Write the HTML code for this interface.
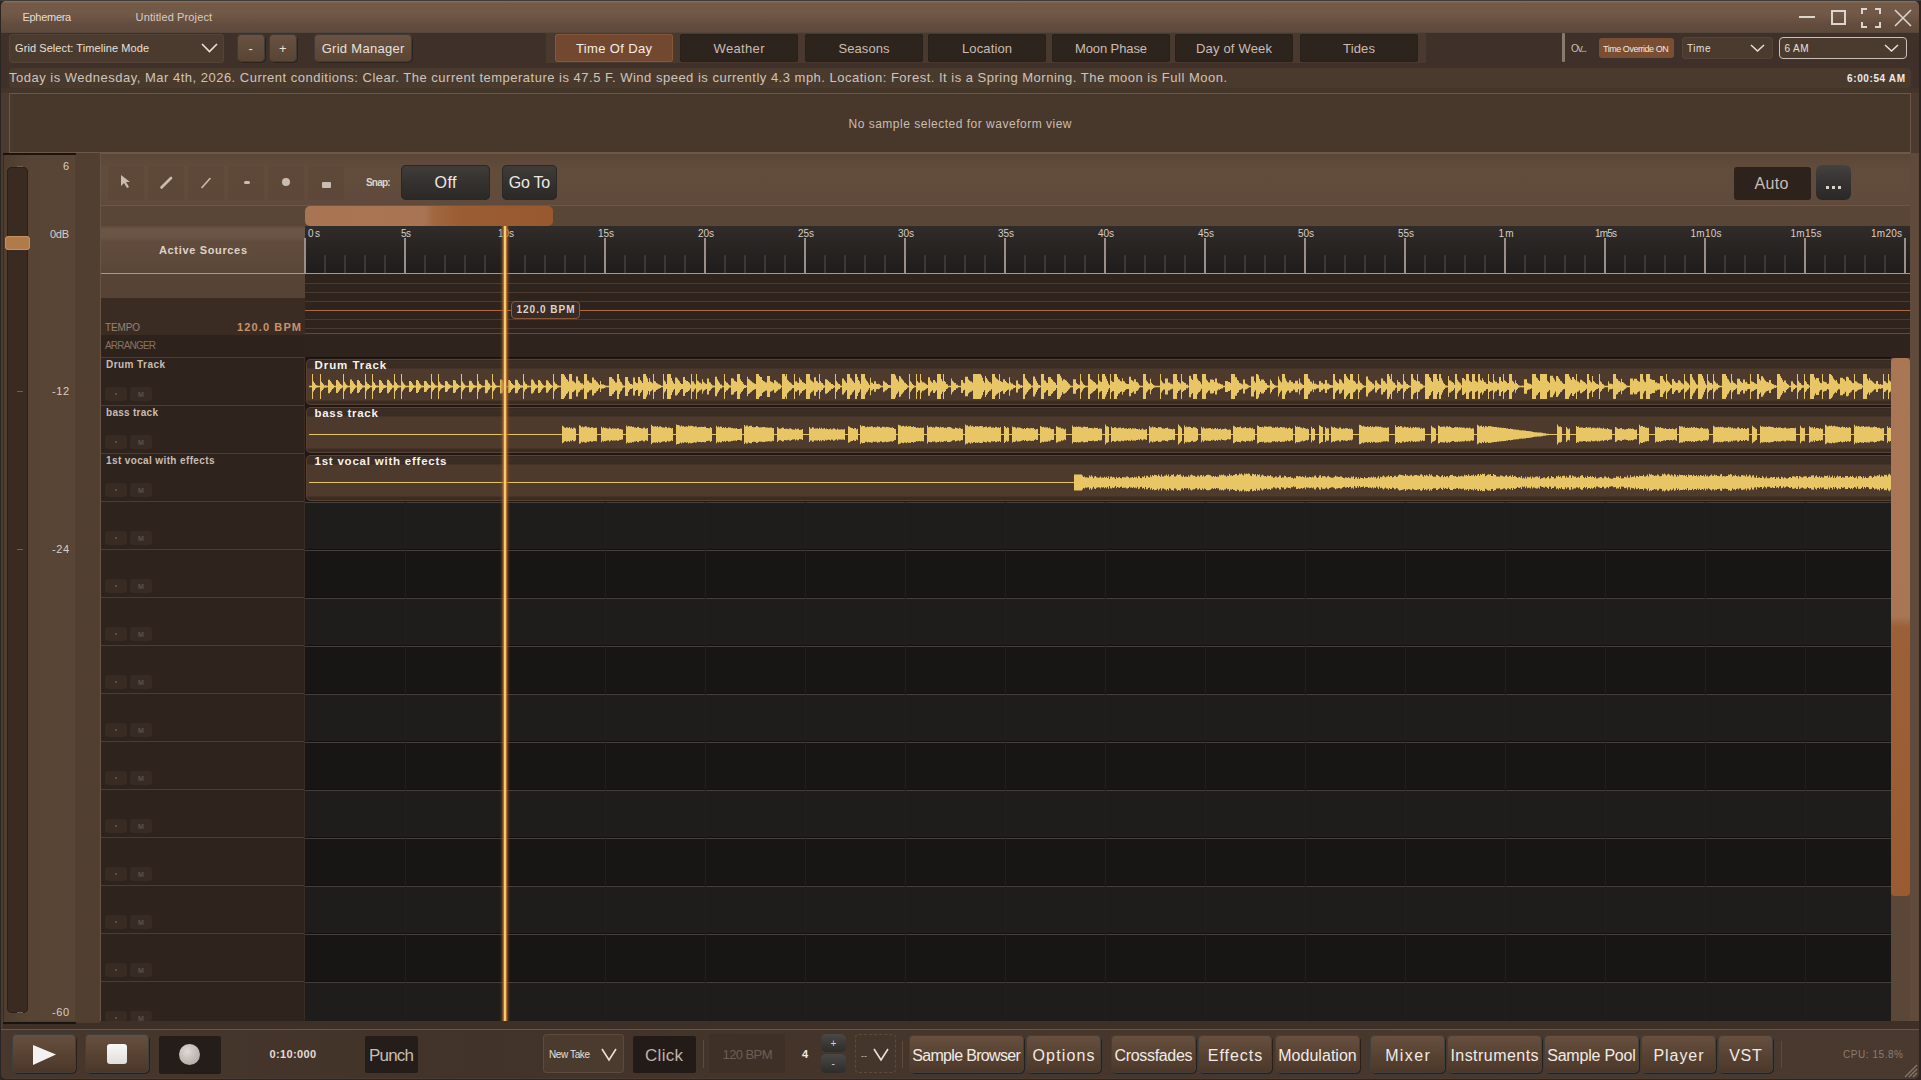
<!DOCTYPE html><html><head><meta charset="utf-8"><style>
*{margin:0;padding:0;box-sizing:border-box}
html,body{width:1921px;height:1080px;overflow:hidden;background:#2b2624;font-family:"Liberation Sans", sans-serif}
.a{position:absolute}
.t{position:absolute;white-space:nowrap;line-height:1}
</style></head><body>

<div class="a" style="left:0px;top:0px;width:1921px;height:1px;background:#3d3d3b"></div>
<div class="a" style="left:1px;top:1px;width:1918px;height:1078px;background:#4a3a2f;border-radius:5px"></div>
<div class="a" style="left:1px;top:1px;width:1918px;height:32px;border-radius:5px 5px 0 0;background:linear-gradient(#8a6b52 0,#8a6b52 1px,#735946 2px,#725847 40%,#6b5343 55%,#624c3d 75%,#5e4a3b 96%,#50443c 100%)"></div>
<div class="t" style="left:22.50px;top:11.87px;font-size:11px;letter-spacing:-0.293px;color:#e6dcd4;">Ephemera</div>
<div class="t" style="left:135.60px;top:11.87px;font-size:11px;letter-spacing:0.127px;color:#d8ccc2;">Untitled Project</div>
<div class="a" style="left:1799px;top:16px;width:16px;height:2px;background:#ddd4cc"></div>
<div class="a" style="left:1831px;top:10px;width:15px;height:15px;border:2px solid #ddd4cc"></div>
<svg class="a" style="left:1861px;top:8px" width="20" height="20" viewBox="0 0 20 20" fill="none" stroke="#ddd4cc" stroke-width="2"><path d="M1 6V1h5M14 1h5v5M19 14v5h-5M6 19H1v-5"/></svg>
<svg class="a" style="left:1893px;top:8px" width="20" height="20" viewBox="0 0 20 20" fill="none" stroke="#ddd4cc" stroke-width="1.6"><path d="M2 2L18 18M18 2L2 18"/></svg>
<div class="a" style="left:1px;top:33px;width:1918px;height:60px;background:#3f3129"></div>
<div class="a" style="left:1px;top:88px;width:1918px;height:5px;background:#443529"></div>
<div class="a" style="left:9px;top:34px;width:215px;height:29px;background:#4b3a2e;border-radius:4px;box-shadow:inset 0 0 0 1px #55433a"></div>
<div class="t" style="left:15.00px;top:42.87px;font-size:11px;letter-spacing:0.078px;color:#e8e0da;">Grid Select: Timeline Mode</div>
<svg class="a" style="left:201px;top:43px" width="17" height="10" viewBox="0 0 17 10" fill="none" stroke="#e8e0da" stroke-width="1.6"><path d="M1 1L8.5 8.5L16 1"/></svg>
<div class="a" style="left:237px;top:34px;width:28px;height:28px;background:linear-gradient(#6b5343,#614b3b 45%,#5a4535);border-radius:5px;box-shadow:inset 0 0 0 1px #3f3b3a, 1px 1px 0 #2c221c"></div>
<div class="t" style="left:248.50px;top:42.44px;font-size:13px;letter-spacing:0.671px;color:#e8e0da;">-</div>
<div class="a" style="left:269px;top:34px;width:28px;height:28px;background:linear-gradient(#6b5343,#614b3b 45%,#5a4535);border-radius:5px;box-shadow:inset 0 0 0 1px #3f3b3a, 1px 1px 0 #2c221c"></div>
<div class="t" style="left:279.00px;top:42.44px;font-size:13px;letter-spacing:0.408px;color:#e8e0da;">+</div>
<div class="a" style="left:314px;top:34px;width:98px;height:28px;background:linear-gradient(#6b5343,#614b3b 45%,#5a4535);border-radius:5px;box-shadow:inset 0 0 0 1px #3f3b3a, 1px 1px 0 #2c221c"></div>
<div class="t" style="left:321.65px;top:42.44px;font-size:13px;letter-spacing:0.293px;color:#e8e0da;">Grid Manager</div>
<div class="a" style="left:546px;top:33px;width:880px;height:30px;background:#4a392e"></div>
<div class="a" style="left:555px;top:34px;width:118px;height:28px;background:#724830;border-radius:3px;box-shadow:inset 0 0 0 1px #86573a"></div>
<div class="t" style="left:576.00px;top:42.44px;font-size:13px;letter-spacing:0.353px;color:#f4eee8;">Time Of Day</div>
<div class="a" style="left:680px;top:34px;width:118px;height:28px;background:#2e241e;border-radius:3px;box-shadow:inset 0 0 0 1px #282019"></div>
<div class="t" style="left:713.50px;top:42.44px;font-size:13px;letter-spacing:0.351px;color:#c9bdb3;">Weather</div>
<div class="a" style="left:805px;top:34px;width:118px;height:28px;background:#2e241e;border-radius:3px;box-shadow:inset 0 0 0 1px #282019"></div>
<div class="t" style="left:838.50px;top:42.44px;font-size:13px;letter-spacing:0.068px;color:#c9bdb3;">Seasons</div>
<div class="a" style="left:928px;top:34px;width:118px;height:28px;background:#2e241e;border-radius:3px;box-shadow:inset 0 0 0 1px #282019"></div>
<div class="t" style="left:962.00px;top:42.44px;font-size:13px;letter-spacing:0.121px;color:#c9bdb3;">Location</div>
<div class="a" style="left:1052px;top:34px;width:118px;height:28px;background:#2e241e;border-radius:3px;box-shadow:inset 0 0 0 1px #282019"></div>
<div class="t" style="left:1075.00px;top:42.44px;font-size:13px;letter-spacing:-0.110px;color:#c9bdb3;">Moon Phase</div>
<div class="a" style="left:1175px;top:34px;width:118px;height:28px;background:#2e241e;border-radius:3px;box-shadow:inset 0 0 0 1px #282019"></div>
<div class="t" style="left:1196.00px;top:42.44px;font-size:13px;letter-spacing:0.182px;color:#c9bdb3;">Day of Week</div>
<div class="a" style="left:1300px;top:34px;width:118px;height:28px;background:#2e241e;border-radius:3px;box-shadow:inset 0 0 0 1px #282019"></div>
<div class="t" style="left:1343.00px;top:42.44px;font-size:13px;letter-spacing:0.173px;color:#c9bdb3;">Tides</div>
<div class="a" style="left:1562px;top:33px;width:3px;height:29px;background:#8a7a6e;border-radius:1px"></div>
<div class="a" style="left:1566px;top:33px;width:345px;height:30px;background:#3f3129"></div>
<div class="t" style="left:1571.00px;top:44.34px;font-size:10px;letter-spacing:-1.093px;color:#c9bdb3;">Ov...</div>
<div class="a" style="left:1599px;top:38px;width:75px;height:20px;background:#7a4e33;border-radius:3px"></div>
<div class="t" style="left:1603.00px;top:44.81px;font-size:9px;letter-spacing:-0.465px;color:#f0e8e0;">Time Override ON</div>
<div class="a" style="left:1682px;top:37px;width:91px;height:22px;background:#4b3a2e;border-radius:4px;box-shadow:inset 0 0 0 1px #55433a"></div>
<div class="t" style="left:1687.00px;top:44.34px;font-size:10px;letter-spacing:0.550px;color:#e8e0da;">Time</div>
<svg class="a" style="left:1750px;top:44px" width="15" height="8" viewBox="0 0 15 8" fill="none" stroke="#e8e0da" stroke-width="1.5"><path d="M1 1L7.5 7L14 1"/></svg>
<div class="a" style="left:1779px;top:37px;width:128px;height:22px;background:#4b3a2e;border-radius:4px;border:1px solid #c9c0b8"></div>
<div class="t" style="left:1784.50px;top:44.34px;font-size:10px;letter-spacing:0.404px;color:#e8e0da;">6 AM</div>
<svg class="a" style="left:1884px;top:44px" width="15" height="8" viewBox="0 0 15 8" fill="none" stroke="#e8e0da" stroke-width="1.5"><path d="M1 1L7.5 7L14 1"/></svg>
<div class="a" style="left:9px;top:68px;width:1902px;height:20px;background:#4a3a2e;border-radius:4px"></div>
<div class="t" style="left:9.00px;top:71.44px;font-size:13px;letter-spacing:0.498px;color:#cfc4ba;">Today is Wednesday, Mar 4th, 2026. Current conditions: Clear. The current temperature is 47.5 F. Wind speed is currently 4.3 mph. Location: Forest. It is a Spring Morning. The moon is Full Moon.</div>
<div class="t" style="left:1847.00px;top:74.34px;font-size:10px;letter-spacing:0.619px;color:#f0ebe6;font-weight:bold;">6:00:54 AM</div>
<div class="a" style="left:9px;top:93px;width:1902px;height:60px;background:#48382c;border:1px solid #6e5747"></div>
<div class="a" style="left:11px;top:95px;width:1px;height:56px;background:#3a4048"></div>
<div class="t" style="left:848.50px;top:117.91px;font-size:12px;letter-spacing:0.502px;color:#c9bdb3;">No sample selected for waveform view</div>
<div class="a" style="left:3px;top:153px;width:1916px;height:876px;background:#4a392e"></div>
<div class="a" style="left:3px;top:153px;width:97px;height:870px;background:linear-gradient(90deg,#4e3d30 0,#574434 28%,#594536 74%,#503e31 75%,#513f32 100%)"></div>
<div class="a" style="left:3px;top:1022px;width:73px;height:2px;background:#1a1411"></div>
<div class="a" style="left:3px;top:153px;width:1px;height:870px;background:#3a2c24"></div>
<div class="a" style="left:3px;top:153px;width:73px;height:2px;background:#1a1411"></div>
<div class="a" style="left:7px;top:167px;width:21px;height:846px;background:#3a2b22;border-radius:5px;box-shadow:inset 0 0 0 1px #2a1f19"></div>
<div class="a" style="left:5px;top:236px;width:25px;height:14px;background:#b07a4a;border-radius:4px;box-shadow:inset 0 0 0 1px #c89060"></div>
<div class="a" style="left:17px;top:166px;width:6px;height:1px;background:#6e5e54"></div>
<div class="a" style="left:17px;top:391px;width:6px;height:1px;background:#6e5e54"></div>
<div class="a" style="left:17px;top:549px;width:6px;height:1px;background:#6e5e54"></div>
<div class="a" style="left:17px;top:1012px;width:6px;height:1px;background:#6e5e54"></div>
<div class="t" style="left:63.00px;top:160.87px;font-size:11px;letter-spacing:-0.118px;color:#d8cec6;">6</div>
<div class="t" style="left:50.00px;top:229.37px;font-size:11px;letter-spacing:-0.286px;color:#d8cec6;">0dB</div>
<div class="t" style="left:52.00px;top:386.37px;font-size:11px;letter-spacing:0.551px;color:#d8cec6;">-12</div>
<div class="t" style="left:52.00px;top:544.37px;font-size:11px;letter-spacing:0.551px;color:#d8cec6;">-24</div>
<div class="t" style="left:52.00px;top:1007.37px;font-size:11px;letter-spacing:0.551px;color:#d8cec6;">-60</div>
<div class="a" style="left:100px;top:153px;width:1811px;height:53px;background:linear-gradient(#5a4637,#624c3c 30%,#604a3b)"></div>
<div class="a" style="left:100px;top:153px;width:1811px;height:1px;background:#6e5847"></div>
<div class="a" style="left:100px;top:205px;width:1811px;height:1px;background:#6c5646"></div>
<div class="a" style="left:108px;top:166px;width:36px;height:34px;background:rgba(80,60,47,0.18);border-radius:3px"></div>
<div class="a" style="left:148px;top:166px;width:36px;height:34px;background:rgba(80,60,47,0.18);border-radius:3px"></div>
<div class="a" style="left:188px;top:166px;width:36px;height:34px;background:rgba(80,60,47,0.18);border-radius:3px"></div>
<div class="a" style="left:228px;top:166px;width:36px;height:34px;background:rgba(80,60,47,0.18);border-radius:3px"></div>
<div class="a" style="left:268px;top:166px;width:36px;height:34px;background:rgba(80,60,47,0.18);border-radius:3px"></div>
<div class="a" style="left:308px;top:166px;width:36px;height:34px;background:rgba(80,60,47,0.18);border-radius:3px"></div>
<svg class="a" style="left:116px;top:172px" width="20" height="20" viewBox="0 0 20 20"><path d="M5 3L5 14L8 11L11 16L13 15L10 10L14 10Z" fill="#c9bcb2"/></svg>
<svg class="a" style="left:156px;top:172px" width="20" height="20" viewBox="0 0 20 20"><path d="M5.5 15.5L15 6" stroke="#c9bcb2" stroke-width="2.6" stroke-linecap="round"/></svg>
<svg class="a" style="left:196px;top:172px" width="20" height="20" viewBox="0 0 20 20"><path d="M6 15.5L14 6.5" stroke="#c9bcb2" stroke-width="1.6" stroke-linecap="round"/></svg>
<div class="a" style="left:244px;top:181px;width:6px;height:3px;background:#c9bcb2;border-radius:2px"></div>
<div class="a" style="left:282px;top:178px;width:8px;height:8px;background:#c9bcb2;border-radius:50%"></div>
<div class="a" style="left:322px;top:182px;width:9px;height:6px;background:#c9bcb2;border-radius:1px"></div>
<div class="t" style="left:366.00px;top:178.34px;font-size:10px;letter-spacing:-0.820px;color:#ddd3cb;font-weight:bold;">Snap:</div>
<div class="a" style="left:401px;top:165px;width:89px;height:35px;background:linear-gradient(#403d3b,#353230 45%,#2b2927);border-radius:5px;box-shadow:inset 0 0 0 1px #2a2826"></div>
<div class="t" style="left:434.50px;top:175.04px;font-size:16px;letter-spacing:0.477px;color:#efe9e4;">Off</div>
<div class="a" style="left:502px;top:165px;width:55px;height:35px;background:linear-gradient(#403d3b,#353230 45%,#2b2927);border-radius:5px;box-shadow:inset 0 0 0 1px #2a2826"></div>
<div class="t" style="left:508.75px;top:175.04px;font-size:16px;letter-spacing:-0.275px;color:#efe9e4;">Go To</div>
<div class="a" style="left:1734px;top:167px;width:77px;height:33px;background:#2d221c;border-radius:3px"></div>
<div class="t" style="left:1754.50px;top:175.54px;font-size:16px;letter-spacing:0.362px;color:#c9bdb3;">Auto</div>
<div class="a" style="left:1816px;top:165px;width:35px;height:35px;background:linear-gradient(#444241,#353331 50%,#2a2827);border-radius:6px"></div>
<div class="a" style="left:1826px;top:186px;width:3px;height:3px;background:#d8d2cc"></div>
<div class="a" style="left:1832px;top:186px;width:3px;height:3px;background:#d8d2cc"></div>
<div class="a" style="left:1838px;top:186px;width:3px;height:3px;background:#d8d2cc"></div>
<div class="a" style="left:100px;top:206px;width:1811px;height:20px;background:#5a4637"></div>
<div class="a" style="left:305px;top:206px;width:248px;height:20px;background:linear-gradient(90deg,#a87552,#a97453 48%,#a06840 52%,#9a5d34 62%,#98592f);border-radius:5px"></div>
<div class="a" style="left:101px;top:226px;width:204px;height:47px;background:linear-gradient(#5e4a3b 0,#6b5545 6%,#6a5444 24%,#604b3c 34%,#5e4a3b 70%,#5a4637)"></div>
<div class="t" style="left:159.00px;top:244.87px;font-size:11px;letter-spacing:0.655px;color:#ddd3cb;font-weight:bold;">Active Sources</div>
<div class="a" style="left:305px;top:226px;width:1606px;height:47px;background:linear-gradient(#312c29,#292523 40%,#1f1c1b)"></div>
<div class="a" style="left:101px;top:273px;width:1810px;height:1px;background:#a8998c"></div>
<div class="a" style="left:304px;top:238px;width:2px;height:35px;background:#9a8f88"></div>
<div class="a" style="left:404px;top:238px;width:2px;height:35px;background:#9a8f88"></div>
<div class="a" style="left:504px;top:238px;width:2px;height:35px;background:#9a8f88"></div>
<div class="a" style="left:604px;top:238px;width:2px;height:35px;background:#9a8f88"></div>
<div class="a" style="left:704px;top:238px;width:2px;height:35px;background:#9a8f88"></div>
<div class="a" style="left:804px;top:238px;width:2px;height:35px;background:#9a8f88"></div>
<div class="a" style="left:904px;top:238px;width:2px;height:35px;background:#9a8f88"></div>
<div class="a" style="left:1004px;top:238px;width:2px;height:35px;background:#9a8f88"></div>
<div class="a" style="left:1104px;top:238px;width:2px;height:35px;background:#9a8f88"></div>
<div class="a" style="left:1204px;top:238px;width:2px;height:35px;background:#9a8f88"></div>
<div class="a" style="left:1304px;top:238px;width:2px;height:35px;background:#9a8f88"></div>
<div class="a" style="left:1404px;top:238px;width:2px;height:35px;background:#9a8f88"></div>
<div class="a" style="left:1504px;top:238px;width:2px;height:35px;background:#9a8f88"></div>
<div class="a" style="left:1604px;top:238px;width:2px;height:35px;background:#9a8f88"></div>
<div class="a" style="left:1704px;top:238px;width:2px;height:35px;background:#9a8f88"></div>
<div class="a" style="left:1804px;top:238px;width:2px;height:35px;background:#9a8f88"></div>
<div class="a" style="left:1904px;top:238px;width:2px;height:35px;background:#9a8f88"></div>
<div class="a" style="left:324px;top:255px;width:2px;height:18px;background:#3e3733"></div>
<div class="a" style="left:344px;top:255px;width:2px;height:18px;background:#3e3733"></div>
<div class="a" style="left:364px;top:255px;width:2px;height:18px;background:#3e3733"></div>
<div class="a" style="left:384px;top:255px;width:2px;height:18px;background:#3e3733"></div>
<div class="a" style="left:424px;top:255px;width:2px;height:18px;background:#3e3733"></div>
<div class="a" style="left:444px;top:255px;width:2px;height:18px;background:#3e3733"></div>
<div class="a" style="left:464px;top:255px;width:2px;height:18px;background:#3e3733"></div>
<div class="a" style="left:484px;top:255px;width:2px;height:18px;background:#3e3733"></div>
<div class="a" style="left:524px;top:255px;width:2px;height:18px;background:#3e3733"></div>
<div class="a" style="left:544px;top:255px;width:2px;height:18px;background:#3e3733"></div>
<div class="a" style="left:564px;top:255px;width:2px;height:18px;background:#3e3733"></div>
<div class="a" style="left:584px;top:255px;width:2px;height:18px;background:#3e3733"></div>
<div class="a" style="left:624px;top:255px;width:2px;height:18px;background:#3e3733"></div>
<div class="a" style="left:644px;top:255px;width:2px;height:18px;background:#3e3733"></div>
<div class="a" style="left:664px;top:255px;width:2px;height:18px;background:#3e3733"></div>
<div class="a" style="left:684px;top:255px;width:2px;height:18px;background:#3e3733"></div>
<div class="a" style="left:724px;top:255px;width:2px;height:18px;background:#3e3733"></div>
<div class="a" style="left:744px;top:255px;width:2px;height:18px;background:#3e3733"></div>
<div class="a" style="left:764px;top:255px;width:2px;height:18px;background:#3e3733"></div>
<div class="a" style="left:784px;top:255px;width:2px;height:18px;background:#3e3733"></div>
<div class="a" style="left:824px;top:255px;width:2px;height:18px;background:#3e3733"></div>
<div class="a" style="left:844px;top:255px;width:2px;height:18px;background:#3e3733"></div>
<div class="a" style="left:864px;top:255px;width:2px;height:18px;background:#3e3733"></div>
<div class="a" style="left:884px;top:255px;width:2px;height:18px;background:#3e3733"></div>
<div class="a" style="left:924px;top:255px;width:2px;height:18px;background:#3e3733"></div>
<div class="a" style="left:944px;top:255px;width:2px;height:18px;background:#3e3733"></div>
<div class="a" style="left:964px;top:255px;width:2px;height:18px;background:#3e3733"></div>
<div class="a" style="left:984px;top:255px;width:2px;height:18px;background:#3e3733"></div>
<div class="a" style="left:1024px;top:255px;width:2px;height:18px;background:#3e3733"></div>
<div class="a" style="left:1044px;top:255px;width:2px;height:18px;background:#3e3733"></div>
<div class="a" style="left:1064px;top:255px;width:2px;height:18px;background:#3e3733"></div>
<div class="a" style="left:1084px;top:255px;width:2px;height:18px;background:#3e3733"></div>
<div class="a" style="left:1124px;top:255px;width:2px;height:18px;background:#3e3733"></div>
<div class="a" style="left:1144px;top:255px;width:2px;height:18px;background:#3e3733"></div>
<div class="a" style="left:1164px;top:255px;width:2px;height:18px;background:#3e3733"></div>
<div class="a" style="left:1184px;top:255px;width:2px;height:18px;background:#3e3733"></div>
<div class="a" style="left:1224px;top:255px;width:2px;height:18px;background:#3e3733"></div>
<div class="a" style="left:1244px;top:255px;width:2px;height:18px;background:#3e3733"></div>
<div class="a" style="left:1264px;top:255px;width:2px;height:18px;background:#3e3733"></div>
<div class="a" style="left:1284px;top:255px;width:2px;height:18px;background:#3e3733"></div>
<div class="a" style="left:1324px;top:255px;width:2px;height:18px;background:#3e3733"></div>
<div class="a" style="left:1344px;top:255px;width:2px;height:18px;background:#3e3733"></div>
<div class="a" style="left:1364px;top:255px;width:2px;height:18px;background:#3e3733"></div>
<div class="a" style="left:1384px;top:255px;width:2px;height:18px;background:#3e3733"></div>
<div class="a" style="left:1424px;top:255px;width:2px;height:18px;background:#3e3733"></div>
<div class="a" style="left:1444px;top:255px;width:2px;height:18px;background:#3e3733"></div>
<div class="a" style="left:1464px;top:255px;width:2px;height:18px;background:#3e3733"></div>
<div class="a" style="left:1484px;top:255px;width:2px;height:18px;background:#3e3733"></div>
<div class="a" style="left:1524px;top:255px;width:2px;height:18px;background:#3e3733"></div>
<div class="a" style="left:1544px;top:255px;width:2px;height:18px;background:#3e3733"></div>
<div class="a" style="left:1564px;top:255px;width:2px;height:18px;background:#3e3733"></div>
<div class="a" style="left:1584px;top:255px;width:2px;height:18px;background:#3e3733"></div>
<div class="a" style="left:1624px;top:255px;width:2px;height:18px;background:#3e3733"></div>
<div class="a" style="left:1644px;top:255px;width:2px;height:18px;background:#3e3733"></div>
<div class="a" style="left:1664px;top:255px;width:2px;height:18px;background:#3e3733"></div>
<div class="a" style="left:1684px;top:255px;width:2px;height:18px;background:#3e3733"></div>
<div class="a" style="left:1724px;top:255px;width:2px;height:18px;background:#3e3733"></div>
<div class="a" style="left:1744px;top:255px;width:2px;height:18px;background:#3e3733"></div>
<div class="a" style="left:1764px;top:255px;width:2px;height:18px;background:#3e3733"></div>
<div class="a" style="left:1784px;top:255px;width:2px;height:18px;background:#3e3733"></div>
<div class="a" style="left:1824px;top:255px;width:2px;height:18px;background:#3e3733"></div>
<div class="a" style="left:1844px;top:255px;width:2px;height:18px;background:#3e3733"></div>
<div class="a" style="left:1864px;top:255px;width:2px;height:18px;background:#3e3733"></div>
<div class="a" style="left:1884px;top:255px;width:2px;height:18px;background:#3e3733"></div>
<div class="t" style="left:308.00px;top:228.84px;font-size:10px;letter-spacing:1.438px;color:#d8cec6;">0s</div>
<div class="t" style="left:401.00px;top:228.84px;font-size:10px;letter-spacing:-0.562px;color:#d8cec6;">5s</div>
<div class="t" style="left:498.00px;top:228.84px;font-size:10px;letter-spacing:-0.062px;color:#d8cec6;">10s</div>
<div class="t" style="left:598.00px;top:228.84px;font-size:10px;letter-spacing:-0.062px;color:#d8cec6;">15s</div>
<div class="t" style="left:698.00px;top:228.84px;font-size:10px;letter-spacing:-0.062px;color:#d8cec6;">20s</div>
<div class="t" style="left:798.00px;top:228.84px;font-size:10px;letter-spacing:-0.062px;color:#d8cec6;">25s</div>
<div class="t" style="left:898.00px;top:228.84px;font-size:10px;letter-spacing:-0.062px;color:#d8cec6;">30s</div>
<div class="t" style="left:998.00px;top:228.84px;font-size:10px;letter-spacing:-0.062px;color:#d8cec6;">35s</div>
<div class="t" style="left:1098.00px;top:228.84px;font-size:10px;letter-spacing:-0.062px;color:#d8cec6;">40s</div>
<div class="t" style="left:1198.00px;top:228.84px;font-size:10px;letter-spacing:-0.062px;color:#d8cec6;">45s</div>
<div class="t" style="left:1298.00px;top:228.84px;font-size:10px;letter-spacing:-0.062px;color:#d8cec6;">50s</div>
<div class="t" style="left:1398.00px;top:228.84px;font-size:10px;letter-spacing:-0.062px;color:#d8cec6;">55s</div>
<div class="t" style="left:1498.50px;top:228.84px;font-size:10px;letter-spacing:1.108px;color:#d8cec6;">1m</div>
<div class="t" style="left:1595.00px;top:228.84px;font-size:10px;letter-spacing:-0.818px;color:#d8cec6;">1m5s</div>
<div class="t" style="left:1690.50px;top:228.84px;font-size:10px;letter-spacing:0.246px;color:#d8cec6;">1m10s</div>
<div class="t" style="left:1790.50px;top:228.84px;font-size:10px;letter-spacing:0.246px;color:#d8cec6;">1m15s</div>
<div class="t" style="left:1871.00px;top:228.84px;font-size:10px;letter-spacing:0.246px;color:#d8cec6;">1m20s</div>
<div class="a" style="left:101px;top:274px;width:204px;height:24px;background:#564335"></div>
<div class="a" style="left:101px;top:298px;width:204px;height:37px;background:#3a2c23"></div>
<div class="a" style="left:101px;top:335px;width:204px;height:22px;background:#2e221c"></div>
<div class="t" style="left:105.00px;top:323.34px;font-size:10px;letter-spacing:-0.139px;color:#9c8170;">TEMPO</div>
<div class="t" style="left:237.00px;top:322.37px;font-size:11px;letter-spacing:1.122px;color:#c9926a;font-weight:bold;">120.0 BPM</div>
<div class="t" style="left:105.00px;top:341.34px;font-size:10px;letter-spacing:-0.811px;color:#8c7160;">ARRANGER</div>
<div class="a" style="left:305px;top:274px;width:1606px;height:84px;background:#2f241d"></div>
<div class="a" style="left:305px;top:283px;width:1606px;height:1px;background:#4a3a30"></div>
<div class="a" style="left:305px;top:292px;width:1606px;height:1px;background:#4a3a30"></div>
<div class="a" style="left:305px;top:301px;width:1606px;height:1px;background:#4a3a30"></div>
<div class="a" style="left:305px;top:310px;width:1606px;height:1px;background:#b0683c"></div>
<div class="a" style="left:305px;top:319px;width:1606px;height:1px;background:#4a3a30"></div>
<div class="a" style="left:305px;top:328px;width:1606px;height:1px;background:#4a3a30"></div>
<div class="a" style="left:305px;top:333px;width:1606px;height:1px;background:#5e4c40"></div>
<div class="a" style="left:511px;top:301px;width:69px;height:18px;background:#3a2c24;border:1px solid #8c5a38;border-radius:4px"></div>
<div class="t" style="left:516.50px;top:305.34px;font-size:10px;letter-spacing:0.997px;color:#ddd3cb;font-weight:bold;">120.0 BPM</div>
<div class="a" style="left:101px;top:357px;width:204px;height:664px;background:#2e231d"></div>
<div class="a" style="left:101px;top:357px;width:204px;height:1px;background:#4f3c30"></div>
<div class="a" style="left:105px;top:387px;width:22px;height:14px;background:#382b23;border-radius:3px"></div>
<div class="a" style="left:130px;top:387px;width:22px;height:14px;background:#382b23;border-radius:3px"></div>
<div class="a" style="left:115px;top:393px;width:2px;height:2px;background:#6a4a35"></div>
<div class="t" style="left:138.00px;top:390.74px;font-size:7px;letter-spacing:0.169px;color:#5e5048;font-weight:bold;">M</div>
<div class="a" style="left:101px;top:405px;width:204px;height:1px;background:#4f3c30"></div>
<div class="a" style="left:105px;top:435px;width:22px;height:14px;background:#382b23;border-radius:3px"></div>
<div class="a" style="left:130px;top:435px;width:22px;height:14px;background:#382b23;border-radius:3px"></div>
<div class="a" style="left:115px;top:441px;width:2px;height:2px;background:#6a4a35"></div>
<div class="t" style="left:138.00px;top:438.74px;font-size:7px;letter-spacing:0.169px;color:#5e5048;font-weight:bold;">M</div>
<div class="a" style="left:101px;top:453px;width:204px;height:1px;background:#4f3c30"></div>
<div class="a" style="left:105px;top:483px;width:22px;height:14px;background:#382b23;border-radius:3px"></div>
<div class="a" style="left:130px;top:483px;width:22px;height:14px;background:#382b23;border-radius:3px"></div>
<div class="a" style="left:115px;top:489px;width:2px;height:2px;background:#6a4a35"></div>
<div class="t" style="left:138.00px;top:486.74px;font-size:7px;letter-spacing:0.169px;color:#5e5048;font-weight:bold;">M</div>
<div class="a" style="left:101px;top:501px;width:204px;height:1px;background:#4f3c30"></div>
<div class="a" style="left:105px;top:531px;width:22px;height:14px;background:#382b23;border-radius:3px"></div>
<div class="a" style="left:130px;top:531px;width:22px;height:14px;background:#382b23;border-radius:3px"></div>
<div class="a" style="left:115px;top:537px;width:2px;height:2px;background:#6a4a35"></div>
<div class="t" style="left:138.00px;top:534.74px;font-size:7px;letter-spacing:0.169px;color:#5e5048;font-weight:bold;">M</div>
<div class="a" style="left:101px;top:549px;width:204px;height:1px;background:#4f3c30"></div>
<div class="a" style="left:105px;top:579px;width:22px;height:14px;background:#382b23;border-radius:3px"></div>
<div class="a" style="left:130px;top:579px;width:22px;height:14px;background:#382b23;border-radius:3px"></div>
<div class="a" style="left:115px;top:585px;width:2px;height:2px;background:#6a4a35"></div>
<div class="t" style="left:138.00px;top:582.74px;font-size:7px;letter-spacing:0.169px;color:#5e5048;font-weight:bold;">M</div>
<div class="a" style="left:101px;top:597px;width:204px;height:1px;background:#4f3c30"></div>
<div class="a" style="left:105px;top:627px;width:22px;height:14px;background:#382b23;border-radius:3px"></div>
<div class="a" style="left:130px;top:627px;width:22px;height:14px;background:#382b23;border-radius:3px"></div>
<div class="a" style="left:115px;top:633px;width:2px;height:2px;background:#6a4a35"></div>
<div class="t" style="left:138.00px;top:630.74px;font-size:7px;letter-spacing:0.169px;color:#5e5048;font-weight:bold;">M</div>
<div class="a" style="left:101px;top:645px;width:204px;height:1px;background:#4f3c30"></div>
<div class="a" style="left:105px;top:675px;width:22px;height:14px;background:#382b23;border-radius:3px"></div>
<div class="a" style="left:130px;top:675px;width:22px;height:14px;background:#382b23;border-radius:3px"></div>
<div class="a" style="left:115px;top:681px;width:2px;height:2px;background:#6a4a35"></div>
<div class="t" style="left:138.00px;top:678.74px;font-size:7px;letter-spacing:0.169px;color:#5e5048;font-weight:bold;">M</div>
<div class="a" style="left:101px;top:693px;width:204px;height:1px;background:#4f3c30"></div>
<div class="a" style="left:105px;top:723px;width:22px;height:14px;background:#382b23;border-radius:3px"></div>
<div class="a" style="left:130px;top:723px;width:22px;height:14px;background:#382b23;border-radius:3px"></div>
<div class="a" style="left:115px;top:729px;width:2px;height:2px;background:#6a4a35"></div>
<div class="t" style="left:138.00px;top:726.74px;font-size:7px;letter-spacing:0.169px;color:#5e5048;font-weight:bold;">M</div>
<div class="a" style="left:101px;top:741px;width:204px;height:1px;background:#4f3c30"></div>
<div class="a" style="left:105px;top:771px;width:22px;height:14px;background:#382b23;border-radius:3px"></div>
<div class="a" style="left:130px;top:771px;width:22px;height:14px;background:#382b23;border-radius:3px"></div>
<div class="a" style="left:115px;top:777px;width:2px;height:2px;background:#6a4a35"></div>
<div class="t" style="left:138.00px;top:774.74px;font-size:7px;letter-spacing:0.169px;color:#5e5048;font-weight:bold;">M</div>
<div class="a" style="left:101px;top:789px;width:204px;height:1px;background:#4f3c30"></div>
<div class="a" style="left:105px;top:819px;width:22px;height:14px;background:#382b23;border-radius:3px"></div>
<div class="a" style="left:130px;top:819px;width:22px;height:14px;background:#382b23;border-radius:3px"></div>
<div class="a" style="left:115px;top:825px;width:2px;height:2px;background:#6a4a35"></div>
<div class="t" style="left:138.00px;top:822.74px;font-size:7px;letter-spacing:0.169px;color:#5e5048;font-weight:bold;">M</div>
<div class="a" style="left:101px;top:837px;width:204px;height:1px;background:#4f3c30"></div>
<div class="a" style="left:105px;top:867px;width:22px;height:14px;background:#382b23;border-radius:3px"></div>
<div class="a" style="left:130px;top:867px;width:22px;height:14px;background:#382b23;border-radius:3px"></div>
<div class="a" style="left:115px;top:873px;width:2px;height:2px;background:#6a4a35"></div>
<div class="t" style="left:138.00px;top:870.74px;font-size:7px;letter-spacing:0.169px;color:#5e5048;font-weight:bold;">M</div>
<div class="a" style="left:101px;top:885px;width:204px;height:1px;background:#4f3c30"></div>
<div class="a" style="left:105px;top:915px;width:22px;height:14px;background:#382b23;border-radius:3px"></div>
<div class="a" style="left:130px;top:915px;width:22px;height:14px;background:#382b23;border-radius:3px"></div>
<div class="a" style="left:115px;top:921px;width:2px;height:2px;background:#6a4a35"></div>
<div class="t" style="left:138.00px;top:918.74px;font-size:7px;letter-spacing:0.169px;color:#5e5048;font-weight:bold;">M</div>
<div class="a" style="left:101px;top:933px;width:204px;height:1px;background:#4f3c30"></div>
<div class="a" style="left:105px;top:963px;width:22px;height:14px;background:#382b23;border-radius:3px"></div>
<div class="a" style="left:130px;top:963px;width:22px;height:14px;background:#382b23;border-radius:3px"></div>
<div class="a" style="left:115px;top:969px;width:2px;height:2px;background:#6a4a35"></div>
<div class="t" style="left:138.00px;top:966.74px;font-size:7px;letter-spacing:0.169px;color:#5e5048;font-weight:bold;">M</div>
<div class="a" style="left:101px;top:981px;width:204px;height:1px;background:#4f3c30"></div>
<div class="a" style="left:105px;top:1011px;width:22px;height:10px;background:#382b23;border-radius:3px"></div>
<div class="a" style="left:130px;top:1011px;width:22px;height:10px;background:#382b23;border-radius:3px"></div>
<div class="a" style="left:115px;top:1017px;width:2px;height:2px;background:#6a4a35"></div>
<div class="t" style="left:138.00px;top:1014.74px;font-size:7px;letter-spacing:0.169px;color:#5e5048;font-weight:bold;">M</div>
<div class="t" style="left:106.00px;top:359.84px;font-size:10px;letter-spacing:0.442px;color:#c9bdb3;font-weight:bold;">Drum Track</div>
<div class="t" style="left:106.00px;top:407.84px;font-size:10px;letter-spacing:0.280px;color:#c9bdb3;font-weight:bold;">bass track</div>
<div class="t" style="left:106.00px;top:455.84px;font-size:10px;letter-spacing:0.377px;color:#c9bdb3;font-weight:bold;">1st vocal with effects</div>
<div class="a" style="left:305px;top:358px;width:1586px;height:663px;background:#1c1a19"></div>
<div class="a" style="left:305px;top:357px;width:1586px;height:1px;background:#161210"></div>
<div class="a" style="left:305px;top:405px;width:1586px;height:1px;background:#161210"></div>
<div class="a" style="left:305px;top:453px;width:1586px;height:1px;background:#161210"></div>
<div class="a" style="left:305px;top:502px;width:1586px;height:48px;background:#1f1d1c"></div>
<div class="a" style="left:305px;top:501px;width:1586px;height:1px;background:#121010"></div>
<div class="a" style="left:305px;top:502px;width:1586px;height:1px;background:#43403d"></div>
<div class="a" style="left:305px;top:550px;width:1586px;height:48px;background:#181615"></div>
<div class="a" style="left:305px;top:549px;width:1586px;height:1px;background:#121010"></div>
<div class="a" style="left:305px;top:550px;width:1586px;height:1px;background:#43403d"></div>
<div class="a" style="left:305px;top:598px;width:1586px;height:48px;background:#1f1d1c"></div>
<div class="a" style="left:305px;top:597px;width:1586px;height:1px;background:#121010"></div>
<div class="a" style="left:305px;top:598px;width:1586px;height:1px;background:#43403d"></div>
<div class="a" style="left:305px;top:646px;width:1586px;height:48px;background:#181615"></div>
<div class="a" style="left:305px;top:645px;width:1586px;height:1px;background:#121010"></div>
<div class="a" style="left:305px;top:646px;width:1586px;height:1px;background:#43403d"></div>
<div class="a" style="left:305px;top:694px;width:1586px;height:48px;background:#1f1d1c"></div>
<div class="a" style="left:305px;top:693px;width:1586px;height:1px;background:#121010"></div>
<div class="a" style="left:305px;top:694px;width:1586px;height:1px;background:#43403d"></div>
<div class="a" style="left:305px;top:742px;width:1586px;height:48px;background:#181615"></div>
<div class="a" style="left:305px;top:741px;width:1586px;height:1px;background:#121010"></div>
<div class="a" style="left:305px;top:742px;width:1586px;height:1px;background:#43403d"></div>
<div class="a" style="left:305px;top:790px;width:1586px;height:48px;background:#1f1d1c"></div>
<div class="a" style="left:305px;top:789px;width:1586px;height:1px;background:#121010"></div>
<div class="a" style="left:305px;top:790px;width:1586px;height:1px;background:#43403d"></div>
<div class="a" style="left:305px;top:838px;width:1586px;height:48px;background:#181615"></div>
<div class="a" style="left:305px;top:837px;width:1586px;height:1px;background:#121010"></div>
<div class="a" style="left:305px;top:838px;width:1586px;height:1px;background:#43403d"></div>
<div class="a" style="left:305px;top:886px;width:1586px;height:48px;background:#1f1d1c"></div>
<div class="a" style="left:305px;top:885px;width:1586px;height:1px;background:#121010"></div>
<div class="a" style="left:305px;top:886px;width:1586px;height:1px;background:#43403d"></div>
<div class="a" style="left:305px;top:934px;width:1586px;height:48px;background:#181615"></div>
<div class="a" style="left:305px;top:933px;width:1586px;height:1px;background:#121010"></div>
<div class="a" style="left:305px;top:934px;width:1586px;height:1px;background:#43403d"></div>
<div class="a" style="left:305px;top:982px;width:1586px;height:39px;background:#1f1d1c"></div>
<div class="a" style="left:305px;top:981px;width:1586px;height:1px;background:#121010"></div>
<div class="a" style="left:305px;top:982px;width:1586px;height:1px;background:#43403d"></div>
<div class="a" style="left:405px;top:501px;width:1px;height:520px;background:#22201f"></div>
<div class="a" style="left:505px;top:501px;width:1px;height:520px;background:#22201f"></div>
<div class="a" style="left:605px;top:501px;width:1px;height:520px;background:#22201f"></div>
<div class="a" style="left:705px;top:501px;width:1px;height:520px;background:#22201f"></div>
<div class="a" style="left:805px;top:501px;width:1px;height:520px;background:#22201f"></div>
<div class="a" style="left:905px;top:501px;width:1px;height:520px;background:#22201f"></div>
<div class="a" style="left:1005px;top:501px;width:1px;height:520px;background:#22201f"></div>
<div class="a" style="left:1105px;top:501px;width:1px;height:520px;background:#22201f"></div>
<div class="a" style="left:1205px;top:501px;width:1px;height:520px;background:#22201f"></div>
<div class="a" style="left:1305px;top:501px;width:1px;height:520px;background:#22201f"></div>
<div class="a" style="left:1405px;top:501px;width:1px;height:520px;background:#22201f"></div>
<div class="a" style="left:1505px;top:501px;width:1px;height:520px;background:#22201f"></div>
<div class="a" style="left:1605px;top:501px;width:1px;height:520px;background:#22201f"></div>
<div class="a" style="left:1705px;top:501px;width:1px;height:520px;background:#22201f"></div>
<div class="a" style="left:1805px;top:501px;width:1px;height:520px;background:#22201f"></div>
<div class="a" style="left:304px;top:358px;width:1px;height:662px;background:#3a2c24"></div>
<div class="a" style="left:305px;top:358px;width:1586px;height:48px;background:#1f1815"></div>
<div class="a" style="left:306px;top:359px;width:1590px;height:46px;background:linear-gradient(#3a2b22 0,#43322780 1px,#3d2e25 2px,#3a2c23 9px,#4d3a2d 10px,#4e3b2e 41px,#3b2c23 42px,#3a2b22 45px,#5a4232 46px);border-radius:5px;box-shadow:inset 0 0 0 1px #5a4131"></div>
<div class="t" style="left:314.50px;top:359.64px;font-size:11.5px;letter-spacing:0.936px;color:#f6f2ee;font-weight:bold;">Drum Track</div>
<div class="a" style="left:305px;top:406px;width:1586px;height:48px;background:#1f1815"></div>
<div class="a" style="left:306px;top:407px;width:1590px;height:46px;background:linear-gradient(#3a2b22 0,#43322780 1px,#3d2e25 2px,#3a2c23 9px,#4d3a2d 10px,#4e3b2e 41px,#3b2c23 42px,#3a2b22 45px,#5a4232 46px);border-radius:5px;box-shadow:inset 0 0 0 1px #5a4131"></div>
<div class="t" style="left:314.50px;top:407.64px;font-size:11.5px;letter-spacing:0.711px;color:#f6f2ee;font-weight:bold;">bass track</div>
<div class="a" style="left:305px;top:454px;width:1586px;height:48px;background:#1f1815"></div>
<div class="a" style="left:306px;top:455px;width:1590px;height:46px;background:linear-gradient(#3a2b22 0,#43322780 1px,#3d2e25 2px,#3a2c23 9px,#4d3a2d 10px,#4e3b2e 41px,#3b2c23 42px,#3a2b22 45px,#5a4232 46px);border-radius:5px;box-shadow:inset 0 0 0 1px #5a4131"></div>
<div class="t" style="left:314.50px;top:455.64px;font-size:11.5px;letter-spacing:0.777px;color:#f6f2ee;font-weight:bold;">1st vocal with effects</div>
<svg class="a" style="left:0;top:0" width="1921" height="1080"><polygon fill="#e8c666" points="309,385.8 310,385.8 310,385.8 311,385.8 311,385.8 312,385.8 312,374.0 313,374.0 313,381.5 314,381.5 314,383.0 315,383.0 315,384.5 316,384.5 316,385.2 317,385.2 317,385.6 318,385.6 318,385.8 319,385.8 319,385.8 320,385.8 320,374.0 321,374.0 321,381.8 322,381.8 322,383.1 323,383.1 323,384.3 324,384.3 324,385.6 325,385.6 325,385.3 326,385.3 326,385.6 327,385.6 327,385.8 328,385.8 328,379.8 329,379.8 329,379.8 330,379.8 330,381.1 331,381.1 331,382.6 332,382.6 332,384.1 333,384.1 333,384.8 334,384.8 334,385.7 335,385.7 335,385.8 336,385.8 336,380.0 337,380.0 337,380.0 338,380.0 338,381.2 339,381.2 339,382.6 340,382.6 340,383.9 341,383.9 341,384.8 342,384.8 342,385.4 343,385.4 343,374.0 344,374.0 344,381.8 345,381.8 345,383.6 346,383.6 346,384.7 347,384.7 347,385.6 348,385.6 348,385.8 349,385.8 349,385.8 350,385.8 350,379.5 351,379.5 351,379.5 352,379.5 352,380.9 353,380.9 353,382.6 354,382.6 354,383.9 355,383.9 355,385.2 356,385.2 356,385.8 357,385.8 357,379.9 358,379.9 358,379.9 359,379.9 359,381.0 360,381.0 360,383.0 361,383.0 361,384.1 362,384.1 362,385.3 363,385.3 363,385.6 364,385.6 364,385.5 365,385.5 365,374.0 366,374.0 366,381.7 367,381.7 367,383.5 368,383.5 368,384.1 369,384.1 369,385.0 370,385.0 370,385.8 371,385.8 371,385.7 372,385.7 372,374.0 373,374.0 373,381.8 374,381.8 374,382.9 375,382.9 375,384.7 376,384.7 376,385.4 377,385.4 377,385.5 378,385.5 378,385.8 379,385.8 379,380.0 380,380.0 380,380.0 381,380.0 381,381.1 382,381.1 382,382.9 383,382.9 383,384.6 384,384.6 384,385.0 385,385.0 385,385.3 386,385.3 386,385.8 387,385.8 387,379.8 388,379.8 388,379.8 389,379.8 389,381.0 390,381.0 390,382.7 391,382.7 391,383.8 392,383.8 392,385.3 393,385.3 393,385.2 394,385.2 394,374.0 395,374.0 395,381.7 396,381.7 396,383.1 397,383.1 397,384.6 398,384.6 398,385.3 399,385.3 399,385.4 400,385.4 400,385.8 401,385.8 401,374.0 402,374.0 402,381.5 403,381.5 403,383.2 404,383.2 404,384.4 405,384.4 405,385.6 406,385.6 406,385.8 407,385.8 407,385.7 408,385.7 408,385.8 409,385.8 409,380.9 410,380.9 410,380.9 411,380.9 411,381.9 412,381.9 412,383.4 413,383.4 413,384.9 414,384.9 414,385.4 415,385.4 415,385.4 416,385.4 416,380.1 417,380.1 417,380.1 418,380.1 418,381.1 419,381.1 419,383.2 420,383.2 420,384.5 421,384.5 421,385.5 422,385.5 422,385.5 423,385.5 423,385.8 424,385.8 424,380.9 425,380.9 425,380.9 426,380.9 426,381.5 427,381.5 427,383.2 428,383.2 428,384.4 429,384.4 429,385.1 430,385.1 430,385.5 431,385.5 431,374.0 432,374.0 432,381.6 433,381.6 433,383.1 434,383.1 434,384.2 435,384.2 435,385.2 436,385.2 436,385.6 437,385.6 437,385.8 438,385.8 438,374.0 439,374.0 439,381.7 440,381.7 440,383.4 441,383.4 441,384.6 442,384.6 442,384.9 443,384.9 443,385.5 444,385.5 444,385.8 445,385.8 445,381.0 446,381.0 446,381.0 447,381.0 447,381.8 448,381.8 448,383.7 449,383.7 449,384.4 450,384.4 450,385.3 451,385.3 451,385.6 452,385.6 452,385.7 453,385.7 453,380.1 454,380.1 454,380.1 455,380.1 455,380.8 456,380.8 456,383.2 457,383.2 457,384.0 458,384.0 458,385.1 459,385.1 459,385.8 460,385.8 460,385.8 461,385.8 461,374.0 462,374.0 462,381.6 463,381.6 463,383.3 464,383.3 464,384.6 465,384.6 465,385.5 466,385.5 466,385.7 467,385.7 467,385.7 468,385.7 468,385.8 469,385.8 469,380.8 470,380.8 470,380.8 471,380.8 471,381.3 472,381.3 472,383.2 473,383.2 473,384.7 474,384.7 474,385.3 475,385.3 475,385.6 476,385.6 476,385.8 477,385.8 477,374.0 478,374.0 478,381.2 479,381.2 479,383.7 480,383.7 480,384.3 481,384.3 481,385.2 482,385.2 482,385.8 483,385.8 483,385.8 484,385.8 484,385.8 485,385.8 485,379.8 486,379.8 486,379.8 487,379.8 487,380.6 488,380.6 488,382.7 489,382.7 489,383.8 490,383.8 490,385.4 491,385.4 491,385.8 492,385.8 492,374.0 493,374.0 493,381.7 494,381.7 494,383.3 495,383.3 495,384.7 496,384.7 496,385.6 497,385.6 497,385.7 498,385.7 498,385.8 499,385.8 499,385.8 500,385.8 500,379.6 501,379.6 501,379.6 502,379.6 502,380.2 503,380.2 503,383.0 504,383.0 504,383.9 505,383.9 505,384.8 506,384.8 506,385.8 507,385.8 507,385.8 508,385.8 508,380.1 509,380.1 509,380.1 510,380.1 510,381.1 511,381.1 511,383.0 512,383.0 512,384.0 513,384.0 513,384.9 514,384.9 514,385.3 515,385.3 515,379.7 516,379.7 516,379.7 517,379.7 517,380.3 518,380.3 518,382.8 519,382.8 519,383.9 520,383.9 520,385.2 521,385.2 521,385.2 522,385.2 522,385.6 523,385.6 523,374.0 524,374.0 524,381.6 525,381.6 525,383.5 526,383.5 526,384.1 527,384.1 527,385.4 528,385.4 528,385.4 529,385.4 529,385.8 530,385.8 530,385.8 531,385.8 531,379.5 532,379.5 532,379.5 533,379.5 533,380.5 534,380.5 534,382.6 535,382.6 535,384.2 536,384.2 536,384.7 537,384.7 537,385.5 538,385.5 538,379.9 539,379.9 539,379.9 540,379.9 540,380.9 541,380.9 541,382.7 542,382.7 542,384.2 543,384.2 543,385.2 544,385.2 544,385.7 545,385.7 545,385.6 546,385.6 546,380.2 547,380.2 547,380.2 548,380.2 548,381.4 549,381.4 549,383.1 550,383.1 550,384.3 551,384.3 551,385.0 552,385.0 552,385.8 553,385.8 553,374.0 554,374.0 554,381.8 555,381.8 555,383.6 556,383.6 556,384.1 557,384.1 557,385.3 558,385.3 558,385.4 559,385.4 559,385.7 560,385.7 560,385.8 561,385.8 561,374.0 562,374.0 562,374.0 563,374.0 563,374.0 564,374.0 564,375.3 565,375.3 565,377.1 566,377.1 566,378.9 567,378.9 567,379.8 568,379.8 568,381.4 569,381.4 569,374.0 570,374.0 570,374.0 571,374.0 571,374.0 572,374.0 572,380.7 573,380.7 573,381.2 574,381.2 574,382.3 575,382.3 575,383.2 576,383.2 576,376.4 577,376.4 577,376.4 578,376.4 578,380.5 579,380.5 579,381.2 580,381.2 580,382.7 581,382.7 581,383.4 582,383.4 582,383.3 583,383.3 583,384.8 584,384.8 584,374.0 585,374.0 585,374.0 586,374.0 586,374.0 587,374.0 587,380.4 588,380.4 588,380.8 589,380.8 589,382.4 590,382.4 590,382.8 591,382.8 591,383.2 592,383.2 592,377.4 593,377.4 593,377.4 594,377.4 594,379.7 595,379.7 595,380.1 596,380.1 596,381.5 597,381.5 597,382.2 598,382.2 598,383.7 599,383.7 599,385.0 600,385.0 600,380.9 601,380.9 601,384.2 602,384.2 602,384.6 603,384.6 603,384.6 604,384.6 604,384.9 605,384.9 605,385.4 606,385.4 606,385.8 607,385.8 607,385.8 608,385.8 608,385.8 609,385.8 609,377.1 610,377.1 610,377.1 611,377.1 611,377.1 612,377.1 612,378.8 613,378.8 613,379.3 614,379.3 614,381.1 615,381.1 615,382.5 616,382.5 616,382.6 617,382.6 617,374.0 618,374.0 618,374.0 619,374.0 619,379.0 620,379.0 620,381.5 621,381.5 621,382.2 622,382.2 622,384.5 623,384.5 623,385.4 624,385.4 624,385.8 625,385.8 625,376.9 626,376.9 626,376.9 627,376.9 627,376.9 628,376.9 628,380.9 629,380.9 629,382.7 630,382.7 630,384.0 631,384.0 631,384.1 632,384.1 632,384.8 633,384.8 633,377.5 634,377.5 634,377.5 635,377.5 635,382.0 636,382.0 636,383.0 637,383.0 637,383.3 638,383.3 638,377.1 639,377.1 639,377.1 640,377.1 640,380.1 641,380.1 641,381.2 642,381.2 642,383.0 643,383.0 643,374.0 644,374.0 644,374.0 645,374.0 645,374.0 646,374.0 646,376.2 647,376.2 647,378.6 648,378.6 648,381.9 649,381.9 649,378.2 650,378.2 650,381.5 651,381.5 651,382.2 652,382.2 652,383.2 653,383.2 653,374.0 654,374.0 654,381.0 655,381.0 655,381.5 656,381.5 656,383.1 657,383.1 657,383.6 658,383.6 658,384.2 659,384.2 659,384.6 660,384.6 660,385.0 661,385.0 661,385.8 662,385.8 662,385.8 663,385.8 663,374.0 664,374.0 664,380.5 665,380.5 665,381.8 666,381.8 666,384.0 667,384.0 667,374.0 668,374.0 668,374.0 669,374.0 669,374.0 670,374.0 670,374.0 671,374.0 671,378.1 672,378.1 672,380.7 673,380.7 673,382.7 674,382.7 674,384.0 675,384.0 675,377.4 676,377.4 676,377.4 677,377.4 677,378.6 678,378.6 678,379.9 679,379.9 679,381.3 680,381.3 680,383.0 681,383.0 681,384.1 682,384.1 682,384.0 683,384.0 683,377.1 684,377.1 684,377.1 685,377.1 685,380.0 686,380.0 686,380.9 687,380.9 687,381.0 688,381.0 688,381.9 689,381.9 689,382.8 690,382.8 690,384.5 691,384.5 691,374.0 692,374.0 692,381.2 693,381.2 693,381.6 694,381.6 694,383.4 695,383.4 695,384.6 696,384.6 696,374.0 697,374.0 697,380.5 698,380.5 698,381.3 699,381.3 699,382.4 700,382.4 700,382.8 701,382.8 701,383.8 702,383.8 702,379.3 703,379.3 703,381.7 704,381.7 704,382.8 705,382.8 705,383.5 706,383.5 706,384.0 707,384.0 707,378.5 708,378.5 708,378.5 709,378.5 709,382.1 710,382.1 710,382.7 711,382.7 711,384.2 712,384.2 712,385.3 713,385.3 713,385.4 714,385.4 714,385.8 715,385.8 715,376.7 716,376.7 716,376.7 717,376.7 717,379.5 718,379.5 718,381.2 719,381.2 719,382.8 720,382.8 720,384.4 721,384.4 721,384.5 722,384.5 722,385.8 723,385.8 723,385.8 724,385.8 724,374.0 725,374.0 725,381.0 726,381.0 726,382.4 727,382.4 727,382.8 728,382.8 728,384.2 729,384.2 729,385.2 730,385.2 730,385.4 731,385.4 731,378.2 732,378.2 732,378.2 733,378.2 733,378.8 734,378.8 734,380.8 735,380.8 735,381.3 736,381.3 736,382.0 737,382.0 737,374.0 738,374.0 738,374.0 739,374.0 739,374.0 740,374.0 740,379.2 741,379.2 741,381.0 742,381.0 742,382.1 743,382.1 743,383.8 744,383.8 744,385.0 745,385.0 745,385.1 746,385.1 746,385.8 747,385.8 747,376.7 748,376.7 748,379.1 749,379.1 749,379.5 750,379.5 750,380.6 751,380.6 751,381.3 752,381.3 752,382.2 753,382.2 753,382.9 754,382.9 754,383.6 755,383.6 755,384.1 756,384.1 756,374.0 757,374.0 757,374.0 758,374.0 758,374.0 759,374.0 759,376.1 760,376.1 760,377.1 761,377.1 761,377.1 762,377.1 762,379.9 763,379.9 763,381.0 764,381.0 764,381.5 765,381.5 765,382.2 766,382.2 766,382.6 767,382.6 767,376.1 768,376.1 768,376.1 769,376.1 769,376.1 770,376.1 770,381.3 771,381.3 771,381.7 772,381.7 772,382.2 773,382.2 773,383.3 774,383.3 774,380.2 775,380.2 775,380.2 776,380.2 776,381.4 777,381.4 777,382.3 778,382.3 778,383.5 779,383.5 779,383.5 780,383.5 780,384.6 781,384.6 781,385.8 782,385.8 782,374.0 783,374.0 783,374.0 784,374.0 784,374.0 785,374.0 785,376.3 786,376.3 786,374.0 787,374.0 787,379.7 788,379.7 788,380.8 789,380.8 789,382.1 790,382.1 790,382.5 791,382.5 791,383.4 792,383.4 792,384.7 793,384.7 793,384.9 794,384.9 794,374.0 795,374.0 795,381.4 796,381.4 796,381.2 797,381.2 797,382.6 798,382.6 798,382.9 799,382.9 799,377.4 800,377.4 800,379.4 801,379.4 801,380.3 802,380.3 802,382.1 803,382.1 803,382.6 804,382.6 804,383.0 805,383.0 805,383.9 806,383.9 806,374.0 807,374.0 807,374.0 808,374.0 808,374.0 809,374.0 809,374.0 810,374.0 810,379.5 811,379.5 811,380.7 812,380.7 812,381.4 813,381.4 813,382.6 814,382.6 814,377.2 815,377.2 815,377.2 816,377.2 816,380.9 817,380.9 817,381.4 818,381.4 818,383.1 819,383.1 819,374.0 820,374.0 820,381.0 821,381.0 821,382.8 822,382.8 822,383.0 823,383.0 823,384.7 824,384.7 824,385.5 825,385.5 825,379.2 826,379.2 826,379.2 827,379.2 827,379.9 828,379.9 828,381.0 829,381.0 829,382.3 830,382.3 830,382.6 831,382.6 831,384.1 832,384.1 832,383.9 833,383.9 833,385.1 834,385.1 834,385.8 835,385.8 835,374.0 836,374.0 836,381.1 837,381.1 837,382.4 838,382.4 838,383.8 839,383.8 839,384.1 840,384.1 840,385.5 841,385.5 841,385.8 842,385.8 842,378.5 843,378.5 843,378.5 844,378.5 844,380.3 845,380.3 845,381.5 846,381.5 846,383.0 847,383.0 847,374.0 848,374.0 848,374.0 849,374.0 849,374.0 850,374.0 850,377.8 851,377.8 851,378.4 852,378.4 852,380.4 853,380.4 853,381.4 854,381.4 854,382.9 855,382.9 855,374.0 856,374.0 856,374.0 857,374.0 857,377.1 858,377.1 858,380.0 859,380.0 859,381.2 860,381.2 860,383.7 861,383.7 861,374.0 862,374.0 862,374.0 863,374.0 863,374.0 864,374.0 864,374.0 865,374.0 865,378.4 866,378.4 866,380.4 867,380.4 867,381.5 868,381.5 868,383.3 869,383.3 869,385.0 870,385.0 870,377.7 871,377.7 871,382.5 872,382.5 872,382.7 873,382.7 873,384.0 874,384.0 874,381.3 875,381.3 875,381.3 876,381.3 876,383.7 877,383.7 877,384.0 878,384.0 878,383.8 879,383.8 879,384.3 880,384.3 880,385.2 881,385.2 881,385.7 882,385.7 882,385.8 883,385.8 883,380.8 884,380.8 884,381.6 885,381.6 885,382.5 886,382.5 886,382.7 887,382.7 887,384.1 888,384.1 888,385.1 889,385.1 889,384.9 890,384.9 890,385.2 891,385.2 891,374.0 892,374.0 892,374.0 893,374.0 893,374.0 894,374.0 894,374.0 895,374.0 895,375.5 896,375.5 896,378.5 897,378.5 897,379.8 898,379.8 898,381.6 899,381.6 899,375.9 900,375.9 900,376.5 901,376.5 901,378.5 902,378.5 902,379.6 903,379.6 903,380.8 904,380.8 904,382.4 905,382.4 905,382.9 906,382.9 906,384.1 907,384.1 907,385.3 908,385.3 908,385.8 909,385.8 909,374.0 910,374.0 910,381.3 911,381.3 911,382.5 912,382.5 912,383.9 913,383.9 913,384.9 914,384.9 914,385.8 915,385.8 915,385.8 916,385.8 916,374.0 917,374.0 917,381.1 918,381.1 918,382.4 919,382.4 919,382.7 920,382.7 920,374.0 921,374.0 921,380.4 922,380.4 922,382.2 923,382.2 923,382.2 924,382.2 924,382.8 925,382.8 925,383.6 926,383.6 926,384.2 927,384.2 927,385.1 928,385.1 928,377.2 929,377.2 929,377.2 930,377.2 930,380.6 931,380.6 931,381.7 932,381.7 932,382.7 933,382.7 933,380.1 934,380.1 934,380.1 935,380.1 935,381.4 936,381.4 936,382.8 937,382.8 937,374.0 938,374.0 938,374.0 939,374.0 939,374.0 940,374.0 940,374.0 941,374.0 941,378.9 942,378.9 942,381.3 943,381.3 943,374.0 944,374.0 944,380.9 945,380.9 945,382.1 946,382.1 946,383.9 947,383.9 947,384.4 948,384.4 948,385.8 949,385.8 949,385.8 950,385.8 950,385.8 951,385.8 951,378.6 952,378.6 952,380.7 953,380.7 953,381.8 954,381.8 954,382.9 955,382.9 955,383.1 956,383.1 956,384.8 957,384.8 957,384.7 958,384.7 958,385.8 959,385.8 959,385.8 960,385.8 960,385.8 961,385.8 961,380.0 962,380.0 962,380.0 963,380.0 963,382.4 964,382.4 964,383.3 965,383.3 965,376.7 966,376.7 966,376.7 967,376.7 967,376.7 968,376.7 968,379.4 969,379.4 969,380.4 970,380.4 970,381.2 971,381.2 971,381.6 972,381.6 972,382.5 973,382.5 973,374.0 974,374.0 974,374.0 975,374.0 975,374.0 976,374.0 976,374.0 977,374.0 977,374.0 978,374.0 978,374.0 979,374.0 979,374.0 980,374.0 980,374.0 981,374.0 981,375.4 982,375.4 982,377.7 983,377.7 983,381.0 984,381.0 984,382.8 985,382.8 985,375.9 986,375.9 986,377.9 987,377.9 987,379.5 988,379.5 988,381.0 989,381.0 989,382.3 990,382.3 990,382.3 991,382.3 991,383.8 992,383.8 992,374.0 993,374.0 993,374.0 994,374.0 994,374.0 995,374.0 995,377.3 996,377.3 996,378.6 997,378.6 997,379.2 998,379.2 998,380.3 999,380.3 999,374.0 1000,374.0 1000,380.9 1001,380.9 1001,381.8 1002,381.8 1002,382.3 1003,382.3 1003,379.3 1004,379.3 1004,379.3 1005,379.3 1005,381.0 1006,381.0 1006,382.1 1007,382.1 1007,382.9 1008,382.9 1008,383.6 1009,383.6 1009,377.2 1010,377.2 1010,382.3 1011,382.3 1011,383.6 1012,383.6 1012,383.4 1013,383.4 1013,384.8 1014,384.8 1014,384.9 1015,384.9 1015,385.7 1016,385.7 1016,380.4 1017,380.4 1017,380.4 1018,380.4 1018,383.7 1019,383.7 1019,384.2 1020,384.2 1020,385.2 1021,385.2 1021,385.0 1022,385.0 1022,385.8 1023,385.8 1023,374.0 1024,374.0 1024,374.0 1025,374.0 1025,378.3 1026,378.3 1026,379.4 1027,379.4 1027,381.0 1028,381.0 1028,382.6 1029,382.6 1029,383.5 1030,383.5 1030,384.3 1031,384.3 1031,385.8 1032,385.8 1032,385.6 1033,385.6 1033,376.6 1034,376.6 1034,376.6 1035,376.6 1035,378.7 1036,378.7 1036,381.0 1037,381.0 1037,383.0 1038,383.0 1038,384.7 1039,384.7 1039,385.1 1040,385.1 1040,385.8 1041,385.8 1041,374.0 1042,374.0 1042,374.0 1043,374.0 1043,374.0 1044,374.0 1044,380.2 1045,380.2 1045,380.8 1046,380.8 1046,382.6 1047,382.6 1047,383.0 1048,383.0 1048,377.0 1049,377.0 1049,377.0 1050,377.0 1050,377.0 1051,377.0 1051,379.1 1052,379.1 1052,379.7 1053,379.7 1053,381.6 1054,381.6 1054,382.1 1055,382.1 1055,383.1 1056,383.1 1056,385.0 1057,385.0 1057,374.0 1058,374.0 1058,374.0 1059,374.0 1059,374.0 1060,374.0 1060,375.8 1061,375.8 1061,377.8 1062,377.8 1062,380.7 1063,380.7 1063,379.2 1064,379.2 1064,379.2 1065,379.2 1065,380.0 1066,380.0 1066,380.8 1067,380.8 1067,382.1 1068,382.1 1068,383.3 1069,383.3 1069,384.3 1070,384.3 1070,385.4 1071,385.4 1071,385.8 1072,385.8 1072,385.8 1073,385.8 1073,379.2 1074,379.2 1074,379.2 1075,379.2 1075,379.2 1076,379.2 1076,383.1 1077,383.1 1077,384.1 1078,384.1 1078,384.8 1079,384.8 1079,384.7 1080,384.7 1080,374.0 1081,374.0 1081,380.8 1082,380.8 1082,382.6 1083,382.6 1083,384.2 1084,384.2 1084,385.1 1085,385.1 1085,385.8 1086,385.8 1086,385.8 1087,385.8 1087,385.8 1088,385.8 1088,374.0 1089,374.0 1089,374.0 1090,374.0 1090,379.1 1091,379.1 1091,379.7 1092,379.7 1092,380.6 1093,380.6 1093,381.5 1094,381.5 1094,382.0 1095,382.0 1095,383.0 1096,383.0 1096,384.5 1097,384.5 1097,384.6 1098,384.6 1098,374.0 1099,374.0 1099,380.4 1100,380.4 1100,381.4 1101,381.4 1101,382.0 1102,382.0 1102,374.0 1103,374.0 1103,374.0 1104,374.0 1104,374.0 1105,374.0 1105,376.3 1106,376.3 1106,378.8 1107,378.8 1107,380.9 1108,380.9 1108,383.5 1109,383.5 1109,384.9 1110,384.9 1110,374.0 1111,374.0 1111,380.8 1112,380.8 1112,381.7 1113,381.7 1113,382.1 1114,382.1 1114,374.0 1115,374.0 1115,374.0 1116,374.0 1116,374.0 1117,374.0 1117,377.0 1118,377.0 1118,379.2 1119,379.2 1119,379.6 1120,379.6 1120,380.9 1121,380.9 1121,381.6 1122,381.6 1122,378.3 1123,378.3 1123,380.9 1124,380.9 1124,381.5 1125,381.5 1125,383.0 1126,383.0 1126,383.7 1127,383.7 1127,383.9 1128,383.9 1128,383.9 1129,383.9 1129,376.7 1130,376.7 1130,376.7 1131,376.7 1131,380.1 1132,380.1 1132,380.5 1133,380.5 1133,381.4 1134,381.4 1134,379.3 1135,379.3 1135,379.3 1136,379.3 1136,382.0 1137,382.0 1137,382.3 1138,382.3 1138,383.5 1139,383.5 1139,385.3 1140,385.3 1140,385.7 1141,385.7 1141,385.8 1142,385.8 1142,385.8 1143,385.8 1143,374.0 1144,374.0 1144,374.0 1145,374.0 1145,374.0 1146,374.0 1146,380.6 1147,380.6 1147,381.8 1148,381.8 1148,383.2 1149,383.2 1149,383.7 1150,383.7 1150,378.8 1151,378.8 1151,382.8 1152,382.8 1152,384.0 1153,384.0 1153,385.1 1154,385.1 1154,385.6 1155,385.6 1155,385.8 1156,385.8 1156,385.8 1157,385.8 1157,385.8 1158,385.8 1158,385.8 1159,385.8 1159,385.8 1160,385.8 1160,374.0 1161,374.0 1161,380.6 1162,380.6 1162,382.2 1163,382.2 1163,383.3 1164,383.3 1164,383.4 1165,383.4 1165,378.6 1166,378.6 1166,378.6 1167,378.6 1167,378.6 1168,378.6 1168,382.6 1169,382.6 1169,382.5 1170,382.5 1170,383.5 1171,383.5 1171,383.8 1172,383.8 1172,384.3 1173,384.3 1173,374.0 1174,374.0 1174,374.0 1175,374.0 1175,374.0 1176,374.0 1176,374.0 1177,374.0 1177,380.1 1178,380.1 1178,381.9 1179,381.9 1179,382.4 1180,382.4 1180,383.6 1181,383.6 1181,374.0 1182,374.0 1182,381.0 1183,381.0 1183,382.1 1184,382.1 1184,382.7 1185,382.7 1185,383.0 1186,383.0 1186,384.7 1187,384.7 1187,384.6 1188,384.6 1188,385.8 1189,385.8 1189,375.7 1190,375.7 1190,375.7 1191,375.7 1191,378.8 1192,378.8 1192,379.9 1193,379.9 1193,374.0 1194,374.0 1194,374.0 1195,374.0 1195,374.0 1196,374.0 1196,374.0 1197,374.0 1197,378.7 1198,378.7 1198,380.4 1199,380.4 1199,381.0 1200,381.0 1200,382.2 1201,382.2 1201,384.2 1202,384.2 1202,374.0 1203,374.0 1203,374.0 1204,374.0 1204,374.0 1205,374.0 1205,374.0 1206,374.0 1206,379.5 1207,379.5 1207,380.7 1208,380.7 1208,382.3 1209,382.3 1209,382.5 1210,382.5 1210,379.6 1211,379.6 1211,379.6 1212,379.6 1212,379.6 1213,379.6 1213,379.9 1214,379.9 1214,381.9 1215,381.9 1215,378.4 1216,378.4 1216,378.4 1217,378.4 1217,382.4 1218,382.4 1218,383.4 1219,383.4 1219,383.3 1220,383.3 1220,384.1 1221,384.1 1221,384.5 1222,384.5 1222,384.5 1223,384.5 1223,385.7 1224,385.7 1224,385.8 1225,385.8 1225,381.1 1226,381.1 1226,381.1 1227,381.1 1227,381.1 1228,381.1 1228,381.9 1229,381.9 1229,382.1 1230,382.1 1230,382.9 1231,382.9 1231,374.0 1232,374.0 1232,374.0 1233,374.0 1233,374.0 1234,374.0 1234,374.0 1235,374.0 1235,377.3 1236,377.3 1236,377.3 1237,377.3 1237,380.0 1238,380.0 1238,380.8 1239,380.8 1239,382.9 1240,382.9 1240,383.2 1241,383.2 1241,383.7 1242,383.7 1242,384.5 1243,384.5 1243,379.4 1244,379.4 1244,379.4 1245,379.4 1245,383.6 1246,383.6 1246,383.8 1247,383.8 1247,384.4 1248,384.4 1248,385.2 1249,385.2 1249,385.8 1250,385.8 1250,385.8 1251,385.8 1251,376.6 1252,376.6 1252,376.6 1253,376.6 1253,376.6 1254,376.6 1254,381.2 1255,381.2 1255,382.7 1256,382.7 1256,374.0 1257,374.0 1257,374.0 1258,374.0 1258,375.3 1259,375.3 1259,378.7 1260,378.7 1260,380.9 1261,380.9 1261,379.5 1262,379.5 1262,379.5 1263,379.5 1263,379.5 1264,379.5 1264,381.1 1265,381.1 1265,383.0 1266,383.0 1266,383.2 1267,383.2 1267,384.9 1268,384.9 1268,385.2 1269,385.2 1269,385.6 1270,385.6 1270,379.5 1271,379.5 1271,381.1 1272,381.1 1272,383.3 1273,383.3 1273,384.1 1274,384.1 1274,385.1 1275,385.1 1275,385.4 1276,385.4 1276,385.8 1277,385.8 1277,385.8 1278,385.8 1278,376.6 1279,376.6 1279,379.6 1280,379.6 1280,381.2 1281,381.2 1281,382.4 1282,382.4 1282,374.0 1283,374.0 1283,374.0 1284,374.0 1284,374.0 1285,374.0 1285,378.4 1286,378.4 1286,380.7 1287,380.7 1287,382.3 1288,382.3 1288,382.6 1289,382.6 1289,380.2 1290,380.2 1290,380.2 1291,380.2 1291,381.8 1292,381.8 1292,381.9 1293,381.9 1293,383.6 1294,383.6 1294,383.2 1295,383.2 1295,380.8 1296,380.8 1296,380.8 1297,380.8 1297,380.8 1298,380.8 1298,383.7 1299,383.7 1299,378.5 1300,378.5 1300,382.4 1301,382.4 1301,383.5 1302,383.5 1302,384.5 1303,384.5 1303,385.1 1304,385.1 1304,374.0 1305,374.0 1305,374.0 1306,374.0 1306,374.0 1307,374.0 1307,374.0 1308,374.0 1308,378.4 1309,378.4 1309,379.2 1310,379.2 1310,381.4 1311,381.4 1311,381.7 1312,381.7 1312,383.6 1313,383.6 1313,380.8 1314,380.8 1314,383.8 1315,383.8 1315,383.5 1316,383.5 1316,384.3 1317,384.3 1317,384.8 1318,384.8 1318,384.8 1319,384.8 1319,381.0 1320,381.0 1320,381.0 1321,381.0 1321,382.8 1322,382.8 1322,382.8 1323,382.8 1323,384.2 1324,384.2 1324,383.8 1325,383.8 1325,380.0 1326,380.0 1326,380.0 1327,380.0 1327,383.4 1328,383.4 1328,383.6 1329,383.6 1329,384.4 1330,384.4 1330,385.0 1331,385.0 1331,385.2 1332,385.2 1332,385.2 1333,385.2 1333,374.0 1334,374.0 1334,374.0 1335,374.0 1335,380.2 1336,380.2 1336,381.8 1337,381.8 1337,382.8 1338,382.8 1338,383.5 1339,383.5 1339,379.3 1340,379.3 1340,379.3 1341,379.3 1341,380.2 1342,380.2 1342,382.4 1343,382.4 1343,383.5 1344,383.5 1344,374.0 1345,374.0 1345,374.0 1346,374.0 1346,376.2 1347,376.2 1347,377.8 1348,377.8 1348,379.3 1349,379.3 1349,379.9 1350,379.9 1350,374.0 1351,374.0 1351,374.0 1352,374.0 1352,374.0 1353,374.0 1353,380.5 1354,380.5 1354,381.0 1355,381.0 1355,382.2 1356,382.2 1356,383.8 1357,383.8 1357,383.4 1358,383.4 1358,374.0 1359,374.0 1359,380.7 1360,380.7 1360,382.7 1361,382.7 1361,383.3 1362,383.3 1362,384.5 1363,384.5 1363,385.3 1364,385.3 1364,385.8 1365,385.8 1365,385.8 1366,385.8 1366,376.5 1367,376.5 1367,376.5 1368,376.5 1368,379.5 1369,379.5 1369,380.7 1370,380.7 1370,381.6 1371,381.6 1371,381.9 1372,381.9 1372,383.4 1373,383.4 1373,383.8 1374,383.8 1374,385.5 1375,385.5 1375,380.6 1376,380.6 1376,380.6 1377,380.6 1377,382.7 1378,382.7 1378,383.8 1379,383.8 1379,384.4 1380,384.4 1380,384.9 1381,384.9 1381,378.6 1382,378.6 1382,378.6 1383,378.6 1383,380.8 1384,380.8 1384,381.1 1385,381.1 1385,382.4 1386,382.4 1386,383.8 1387,383.8 1387,374.0 1388,374.0 1388,374.0 1389,374.0 1389,376.3 1390,376.3 1390,379.0 1391,379.0 1391,374.0 1392,374.0 1392,381.2 1393,381.2 1393,382.4 1394,382.4 1394,382.7 1395,382.7 1395,384.7 1396,384.7 1396,385.4 1397,385.4 1397,380.1 1398,380.1 1398,382.1 1399,382.1 1399,381.9 1400,381.9 1400,383.4 1401,383.4 1401,384.4 1402,384.4 1402,384.7 1403,384.7 1403,374.0 1404,374.0 1404,380.8 1405,380.8 1405,382.0 1406,382.0 1406,383.8 1407,383.8 1407,384.0 1408,384.0 1408,385.1 1409,385.1 1409,385.4 1410,385.4 1410,385.8 1411,385.8 1411,374.0 1412,374.0 1412,374.0 1413,374.0 1413,378.6 1414,378.6 1414,380.0 1415,380.0 1415,380.3 1416,380.3 1416,381.3 1417,381.3 1417,374.0 1418,374.0 1418,380.9 1419,380.9 1419,381.6 1420,381.6 1420,383.5 1421,383.5 1421,383.7 1422,383.7 1422,384.5 1423,384.5 1423,385.5 1424,385.5 1424,385.8 1425,385.8 1425,374.0 1426,374.0 1426,374.0 1427,374.0 1427,374.0 1428,374.0 1428,374.0 1429,374.0 1429,377.0 1430,377.0 1430,378.1 1431,378.1 1431,380.7 1432,380.7 1432,382.0 1433,382.0 1433,374.0 1434,374.0 1434,374.0 1435,374.0 1435,374.0 1436,374.0 1436,374.0 1437,374.0 1437,378.9 1438,378.9 1438,380.9 1439,380.9 1439,374.0 1440,374.0 1440,374.0 1441,374.0 1441,378.3 1442,378.3 1442,380.5 1443,380.5 1443,382.8 1444,382.8 1444,383.9 1445,383.9 1445,385.3 1446,385.3 1446,385.5 1447,385.5 1447,385.8 1448,385.8 1448,376.0 1449,376.0 1449,380.2 1450,380.2 1450,380.5 1451,380.5 1451,381.5 1452,381.5 1452,382.1 1453,382.1 1453,383.0 1454,383.0 1454,384.7 1455,384.7 1455,374.0 1456,374.0 1456,374.0 1457,374.0 1457,379.7 1458,379.7 1458,381.4 1459,381.4 1459,382.4 1460,382.4 1460,383.2 1461,383.2 1461,385.2 1462,385.2 1462,378.0 1463,378.0 1463,378.0 1464,378.0 1464,379.0 1465,379.0 1465,380.4 1466,380.4 1466,374.0 1467,374.0 1467,374.0 1468,374.0 1468,374.0 1469,374.0 1469,380.5 1470,380.5 1470,381.5 1471,381.5 1471,382.1 1472,382.1 1472,374.0 1473,374.0 1473,374.0 1474,374.0 1474,374.0 1475,374.0 1475,381.1 1476,381.1 1476,381.5 1477,381.5 1477,382.3 1478,382.3 1478,374.0 1479,374.0 1479,374.0 1480,374.0 1480,379.7 1481,379.7 1481,380.7 1482,380.7 1482,378.3 1483,378.3 1483,380.3 1484,380.3 1484,381.9 1485,381.9 1485,382.2 1486,382.2 1486,383.7 1487,383.7 1487,383.9 1488,383.9 1488,374.0 1489,374.0 1489,381.0 1490,381.0 1490,381.9 1491,381.9 1491,382.3 1492,382.3 1492,382.8 1493,382.8 1493,374.0 1494,374.0 1494,380.4 1495,380.4 1495,381.8 1496,381.8 1496,381.7 1497,381.7 1497,383.3 1498,383.3 1498,383.2 1499,383.2 1499,377.1 1500,377.1 1500,377.1 1501,377.1 1501,381.1 1502,381.1 1502,382.0 1503,382.0 1503,374.0 1504,374.0 1504,380.3 1505,380.3 1505,381.1 1506,381.1 1506,382.1 1507,382.1 1507,383.3 1508,383.3 1508,383.0 1509,383.0 1509,374.0 1510,374.0 1510,374.0 1511,374.0 1511,374.0 1512,374.0 1512,380.7 1513,380.7 1513,381.8 1514,381.8 1514,383.4 1515,383.4 1515,380.2 1516,380.2 1516,383.1 1517,383.1 1517,384.0 1518,384.0 1518,385.2 1519,385.2 1519,385.6 1520,385.6 1520,385.7 1521,385.7 1521,385.8 1522,385.8 1522,385.6 1523,385.6 1523,385.8 1524,385.8 1524,379.3 1525,379.3 1525,379.3 1526,379.3 1526,379.3 1527,379.3 1527,382.8 1528,382.8 1528,383.4 1529,383.4 1529,383.5 1530,383.5 1530,384.0 1531,384.0 1531,384.7 1532,384.7 1532,374.0 1533,374.0 1533,374.0 1534,374.0 1534,374.0 1535,374.0 1535,374.0 1536,374.0 1536,377.4 1537,377.4 1537,378.3 1538,378.3 1538,380.1 1539,380.1 1539,380.9 1540,380.9 1540,374.0 1541,374.0 1541,374.0 1542,374.0 1542,374.0 1543,374.0 1543,374.0 1544,374.0 1544,374.0 1545,374.0 1545,374.0 1546,374.0 1546,374.0 1547,374.0 1547,380.7 1548,380.7 1548,381.7 1549,381.7 1549,383.1 1550,383.1 1550,375.8 1551,375.8 1551,375.8 1552,375.8 1552,375.8 1553,375.8 1553,377.8 1554,377.8 1554,379.5 1555,379.5 1555,381.6 1556,381.6 1556,376.0 1557,376.0 1557,376.0 1558,376.0 1558,377.6 1559,377.6 1559,378.9 1560,378.9 1560,380.8 1561,380.8 1561,381.2 1562,381.2 1562,382.8 1563,382.8 1563,383.8 1564,383.8 1564,383.9 1565,383.9 1565,374.0 1566,374.0 1566,374.0 1567,374.0 1567,374.0 1568,374.0 1568,374.0 1569,374.0 1569,376.5 1570,376.5 1570,378.4 1571,378.4 1571,379.9 1572,379.9 1572,377.0 1573,377.0 1573,377.0 1574,377.0 1574,379.1 1575,379.1 1575,380.2 1576,380.2 1576,374.0 1577,374.0 1577,381.2 1578,381.2 1578,381.4 1579,381.4 1579,382.7 1580,382.7 1580,379.8 1581,379.8 1581,379.8 1582,379.8 1582,380.7 1583,380.7 1583,381.6 1584,381.6 1584,382.1 1585,382.1 1585,382.9 1586,382.9 1586,384.2 1587,384.2 1587,374.0 1588,374.0 1588,374.0 1589,374.0 1589,380.0 1590,380.0 1590,381.4 1591,381.4 1591,382.4 1592,382.4 1592,376.0 1593,376.0 1593,381.0 1594,381.0 1594,381.8 1595,381.8 1595,383.0 1596,383.0 1596,383.7 1597,383.7 1597,384.1 1598,384.1 1598,384.8 1599,384.8 1599,374.0 1600,374.0 1600,381.3 1601,381.3 1601,382.3 1602,382.3 1602,384.0 1603,384.0 1603,384.6 1604,384.6 1604,385.5 1605,385.5 1605,385.8 1606,385.8 1606,385.8 1607,385.8 1607,385.8 1608,385.8 1608,381.3 1609,381.3 1609,383.5 1610,383.5 1610,383.7 1611,383.7 1611,383.7 1612,383.7 1612,384.3 1613,384.3 1613,374.0 1614,374.0 1614,374.0 1615,374.0 1615,374.0 1616,374.0 1616,378.4 1617,378.4 1617,378.9 1618,378.9 1618,380.7 1619,380.7 1619,381.0 1620,381.0 1620,382.5 1621,382.5 1621,378.7 1622,378.7 1622,382.0 1623,382.0 1623,382.6 1624,382.6 1624,383.6 1625,383.6 1625,384.2 1626,384.2 1626,385.2 1627,385.2 1627,385.8 1628,385.8 1628,385.8 1629,385.8 1629,385.8 1630,385.8 1630,378.4 1631,378.4 1631,378.4 1632,378.4 1632,378.4 1633,378.4 1633,380.6 1634,380.6 1634,378.7 1635,378.7 1635,378.7 1636,378.7 1636,378.7 1637,378.7 1637,380.6 1638,380.6 1638,381.2 1639,381.2 1639,381.8 1640,381.8 1640,374.0 1641,374.0 1641,374.0 1642,374.0 1642,374.0 1643,374.0 1643,379.6 1644,379.6 1644,381.6 1645,381.6 1645,382.2 1646,382.2 1646,374.0 1647,374.0 1647,374.0 1648,374.0 1648,374.0 1649,374.0 1649,374.0 1650,374.0 1650,379.0 1651,379.0 1651,379.2 1652,379.2 1652,380.0 1653,380.0 1653,380.0 1654,380.0 1654,380.0 1655,380.0 1655,382.4 1656,382.4 1656,382.2 1657,382.2 1657,383.3 1658,383.3 1658,383.3 1659,383.3 1659,383.5 1660,383.5 1660,376.1 1661,376.1 1661,376.1 1662,376.1 1662,376.1 1663,376.1 1663,379.2 1664,379.2 1664,380.7 1665,380.7 1665,382.3 1666,382.3 1666,374.0 1667,374.0 1667,380.6 1668,380.6 1668,381.8 1669,381.8 1669,382.7 1670,382.7 1670,384.2 1671,384.2 1671,385.1 1672,385.1 1672,379.1 1673,379.1 1673,379.1 1674,379.1 1674,380.9 1675,380.9 1675,382.2 1676,382.2 1676,383.1 1677,383.1 1677,382.7 1678,382.7 1678,380.2 1679,380.2 1679,380.2 1680,380.2 1680,381.3 1681,381.3 1681,383.0 1682,383.0 1682,383.6 1683,383.6 1683,384.5 1684,384.5 1684,374.0 1685,374.0 1685,380.7 1686,380.7 1686,381.5 1687,381.5 1687,382.7 1688,382.7 1688,383.5 1689,383.5 1689,385.2 1690,385.2 1690,374.0 1691,374.0 1691,374.0 1692,374.0 1692,377.2 1693,377.2 1693,379.4 1694,379.4 1694,380.4 1695,380.4 1695,382.4 1696,382.4 1696,384.2 1697,384.2 1697,384.8 1698,384.8 1698,374.0 1699,374.0 1699,374.0 1700,374.0 1700,374.0 1701,374.0 1701,374.0 1702,374.0 1702,375.8 1703,375.8 1703,378.5 1704,378.5 1704,380.9 1705,380.9 1705,383.5 1706,383.5 1706,385.3 1707,385.3 1707,374.0 1708,374.0 1708,380.8 1709,380.8 1709,382.3 1710,382.3 1710,383.0 1711,383.0 1711,383.1 1712,383.1 1712,384.6 1713,384.6 1713,374.0 1714,374.0 1714,380.8 1715,380.8 1715,382.3 1716,382.3 1716,383.5 1717,383.5 1717,383.6 1718,383.6 1718,384.9 1719,384.9 1719,385.5 1720,385.5 1720,385.8 1721,385.8 1721,385.8 1722,385.8 1722,374.0 1723,374.0 1723,374.0 1724,374.0 1724,374.0 1725,374.0 1725,374.0 1726,374.0 1726,376.1 1727,376.1 1727,378.5 1728,378.5 1728,379.5 1729,379.5 1729,381.6 1730,381.6 1730,383.1 1731,383.1 1731,374.0 1732,374.0 1732,380.7 1733,380.7 1733,382.5 1734,382.5 1734,383.0 1735,383.0 1735,383.8 1736,383.8 1736,384.8 1737,384.8 1737,378.8 1738,378.8 1738,378.8 1739,378.8 1739,378.8 1740,378.8 1740,381.2 1741,381.2 1741,382.2 1742,382.2 1742,383.0 1743,383.0 1743,379.6 1744,379.6 1744,379.6 1745,379.6 1745,382.3 1746,382.3 1746,381.8 1747,381.8 1747,383.5 1748,383.5 1748,383.9 1749,383.9 1749,384.1 1750,384.1 1750,374.0 1751,374.0 1751,381.2 1752,381.2 1752,381.7 1753,381.7 1753,381.9 1754,381.9 1754,383.0 1755,383.0 1755,383.5 1756,383.5 1756,383.9 1757,383.9 1757,374.0 1758,374.0 1758,374.0 1759,374.0 1759,378.9 1760,378.9 1760,380.4 1761,380.4 1761,376.2 1762,376.2 1762,376.2 1763,376.2 1763,377.8 1764,377.8 1764,379.4 1765,379.4 1765,380.7 1766,380.7 1766,381.8 1767,381.8 1767,381.9 1768,381.9 1768,382.6 1769,382.6 1769,380.1 1770,380.1 1770,380.1 1771,380.1 1771,383.3 1772,383.3 1772,383.9 1773,383.9 1773,384.2 1774,384.2 1774,385.2 1775,385.2 1775,385.1 1776,385.1 1776,385.8 1777,385.8 1777,374.0 1778,374.0 1778,374.0 1779,374.0 1779,374.0 1780,374.0 1780,376.2 1781,376.2 1781,377.9 1782,377.9 1782,379.7 1783,379.7 1783,382.1 1784,382.1 1784,380.6 1785,380.6 1785,380.6 1786,380.6 1786,383.1 1787,383.1 1787,384.0 1788,384.0 1788,384.8 1789,384.8 1789,385.7 1790,385.7 1790,385.8 1791,385.8 1791,381.3 1792,381.3 1792,381.3 1793,381.3 1793,383.3 1794,383.3 1794,384.1 1795,384.1 1795,385.0 1796,385.0 1796,385.4 1797,385.4 1797,374.0 1798,374.0 1798,380.7 1799,380.7 1799,382.5 1800,382.5 1800,382.9 1801,382.9 1801,384.6 1802,384.6 1802,385.3 1803,385.3 1803,385.2 1804,385.2 1804,374.0 1805,374.0 1805,380.9 1806,380.9 1806,382.2 1807,382.2 1807,383.9 1808,383.9 1808,384.4 1809,384.4 1809,385.8 1810,385.8 1810,374.0 1811,374.0 1811,374.0 1812,374.0 1812,374.0 1813,374.0 1813,374.0 1814,374.0 1814,377.3 1815,377.3 1815,379.4 1816,379.4 1816,378.0 1817,378.0 1817,378.0 1818,378.0 1818,378.0 1819,378.0 1819,381.4 1820,381.4 1820,383.0 1821,383.0 1821,383.2 1822,383.2 1822,374.0 1823,374.0 1823,381.3 1824,381.3 1824,381.7 1825,381.7 1825,381.9 1826,381.9 1826,382.6 1827,382.6 1827,384.0 1828,384.0 1828,383.5 1829,383.5 1829,374.0 1830,374.0 1830,374.0 1831,374.0 1831,375.1 1832,375.1 1832,376.2 1833,376.2 1833,378.6 1834,378.6 1834,379.7 1835,379.7 1835,380.8 1836,380.8 1836,379.9 1837,379.9 1837,382.5 1838,382.5 1838,383.8 1839,383.8 1839,383.7 1840,383.7 1840,377.7 1841,377.7 1841,377.7 1842,377.7 1842,377.7 1843,377.7 1843,379.1 1844,379.1 1844,379.5 1845,379.5 1845,381.3 1846,381.3 1846,376.8 1847,376.8 1847,376.8 1848,376.8 1848,377.6 1849,377.6 1849,379.9 1850,379.9 1850,380.5 1851,380.5 1851,381.5 1852,381.5 1852,382.9 1853,382.9 1853,383.3 1854,383.3 1854,374.0 1855,374.0 1855,381.3 1856,381.3 1856,381.4 1857,381.4 1857,382.6 1858,382.6 1858,383.2 1859,383.2 1859,383.6 1860,383.6 1860,383.7 1861,383.7 1861,384.1 1862,384.1 1862,385.6 1863,385.6 1863,374.0 1864,374.0 1864,374.0 1865,374.0 1865,374.0 1866,374.0 1866,374.0 1867,374.0 1867,378.7 1868,378.7 1868,380.4 1869,380.4 1869,378.0 1870,378.0 1870,380.3 1871,380.3 1871,380.6 1872,380.6 1872,381.5 1873,381.5 1873,382.4 1874,382.4 1874,383.6 1875,383.6 1875,383.7 1876,383.7 1876,380.9 1877,380.9 1877,380.9 1878,380.9 1878,383.9 1879,383.9 1879,384.5 1880,384.5 1880,384.1 1881,384.1 1881,384.8 1882,384.8 1882,384.8 1883,384.8 1883,374.0 1884,374.0 1884,380.9 1885,380.9 1885,381.5 1886,381.5 1886,382.7 1887,382.7 1887,383.2 1888,383.2 1888,374.0 1889,374.0 1889,380.6 1890,380.6 1890,381.5 1891,381.5 1891,391.5 1890,391.5 1890,392.4 1889,392.4 1889,399.0 1888,399.0 1888,389.8 1887,389.8 1887,390.3 1886,390.3 1886,391.5 1885,391.5 1885,392.1 1884,392.1 1884,399.0 1883,399.0 1883,388.2 1882,388.2 1882,388.2 1881,388.2 1881,388.9 1880,388.9 1880,388.5 1879,388.5 1879,389.1 1878,389.1 1878,392.1 1877,392.1 1877,392.1 1876,392.1 1876,389.3 1875,389.3 1875,389.4 1874,389.4 1874,390.6 1873,390.6 1873,391.5 1872,391.5 1872,392.4 1871,392.4 1871,392.7 1870,392.7 1870,395.0 1869,395.0 1869,392.6 1868,392.6 1868,394.3 1867,394.3 1867,399.0 1866,399.0 1866,399.0 1865,399.0 1865,399.0 1864,399.0 1864,399.0 1863,399.0 1863,387.4 1862,387.4 1862,388.9 1861,388.9 1861,389.3 1860,389.3 1860,389.4 1859,389.4 1859,389.8 1858,389.8 1858,390.4 1857,390.4 1857,391.6 1856,391.6 1856,391.7 1855,391.7 1855,399.0 1854,399.0 1854,389.7 1853,389.7 1853,390.1 1852,390.1 1852,391.5 1851,391.5 1851,392.5 1850,392.5 1850,393.1 1849,393.1 1849,395.4 1848,395.4 1848,396.2 1847,396.2 1847,396.2 1846,396.2 1846,391.7 1845,391.7 1845,393.5 1844,393.5 1844,393.9 1843,393.9 1843,395.3 1842,395.3 1842,395.3 1841,395.3 1841,395.3 1840,395.3 1840,389.3 1839,389.3 1839,389.2 1838,389.2 1838,390.5 1837,390.5 1837,393.1 1836,393.1 1836,392.2 1835,392.2 1835,393.3 1834,393.3 1834,394.4 1833,394.4 1833,396.8 1832,396.8 1832,397.9 1831,397.9 1831,399.0 1830,399.0 1830,399.0 1829,399.0 1829,389.5 1828,389.5 1828,389.0 1827,389.0 1827,390.4 1826,390.4 1826,391.1 1825,391.1 1825,391.3 1824,391.3 1824,391.7 1823,391.7 1823,399.0 1822,399.0 1822,389.8 1821,389.8 1821,390.0 1820,390.0 1820,391.6 1819,391.6 1819,395.0 1818,395.0 1818,395.0 1817,395.0 1817,395.0 1816,395.0 1816,393.6 1815,393.6 1815,395.7 1814,395.7 1814,399.0 1813,399.0 1813,399.0 1812,399.0 1812,399.0 1811,399.0 1811,399.0 1810,399.0 1810,387.2 1809,387.2 1809,388.6 1808,388.6 1808,389.1 1807,389.1 1807,390.8 1806,390.8 1806,392.1 1805,392.1 1805,399.0 1804,399.0 1804,387.8 1803,387.8 1803,387.7 1802,387.7 1802,388.4 1801,388.4 1801,390.1 1800,390.1 1800,390.5 1799,390.5 1799,392.3 1798,392.3 1798,399.0 1797,399.0 1797,387.6 1796,387.6 1796,388.0 1795,388.0 1795,388.9 1794,388.9 1794,389.7 1793,389.7 1793,391.7 1792,391.7 1792,391.7 1791,391.7 1791,387.2 1790,387.2 1790,387.3 1789,387.3 1789,388.2 1788,388.2 1788,389.0 1787,389.0 1787,389.9 1786,389.9 1786,392.4 1785,392.4 1785,392.4 1784,392.4 1784,390.9 1783,390.9 1783,393.3 1782,393.3 1782,395.1 1781,395.1 1781,396.8 1780,396.8 1780,399.0 1779,399.0 1779,399.0 1778,399.0 1778,399.0 1777,399.0 1777,387.2 1776,387.2 1776,387.9 1775,387.9 1775,387.8 1774,387.8 1774,388.8 1773,388.8 1773,389.1 1772,389.1 1772,389.7 1771,389.7 1771,392.9 1770,392.9 1770,392.9 1769,392.9 1769,390.4 1768,390.4 1768,391.1 1767,391.1 1767,391.2 1766,391.2 1766,392.3 1765,392.3 1765,393.6 1764,393.6 1764,395.2 1763,395.2 1763,396.8 1762,396.8 1762,396.8 1761,396.8 1761,392.6 1760,392.6 1760,394.1 1759,394.1 1759,399.0 1758,399.0 1758,399.0 1757,399.0 1757,389.1 1756,389.1 1756,389.5 1755,389.5 1755,390.0 1754,390.0 1754,391.1 1753,391.1 1753,391.3 1752,391.3 1752,391.8 1751,391.8 1751,399.0 1750,399.0 1750,388.9 1749,388.9 1749,389.1 1748,389.1 1748,389.5 1747,389.5 1747,391.2 1746,391.2 1746,390.7 1745,390.7 1745,393.4 1744,393.4 1744,393.4 1743,393.4 1743,390.0 1742,390.0 1742,390.8 1741,390.8 1741,391.8 1740,391.8 1740,394.2 1739,394.2 1739,394.2 1738,394.2 1738,394.2 1737,394.2 1737,388.2 1736,388.2 1736,389.2 1735,389.2 1735,390.0 1734,390.0 1734,390.5 1733,390.5 1733,392.3 1732,392.3 1732,399.0 1731,399.0 1731,389.9 1730,389.9 1730,391.4 1729,391.4 1729,393.5 1728,393.5 1728,394.5 1727,394.5 1727,396.9 1726,396.9 1726,399.0 1725,399.0 1725,399.0 1724,399.0 1724,399.0 1723,399.0 1723,399.0 1722,399.0 1722,387.2 1721,387.2 1721,387.2 1720,387.2 1720,387.5 1719,387.5 1719,388.1 1718,388.1 1718,389.4 1717,389.4 1717,389.5 1716,389.5 1716,390.7 1715,390.7 1715,392.2 1714,392.2 1714,399.0 1713,399.0 1713,388.4 1712,388.4 1712,389.9 1711,389.9 1711,390.0 1710,390.0 1710,390.7 1709,390.7 1709,392.2 1708,392.2 1708,399.0 1707,399.0 1707,387.7 1706,387.7 1706,389.5 1705,389.5 1705,392.1 1704,392.1 1704,394.5 1703,394.5 1703,397.2 1702,397.2 1702,399.0 1701,399.0 1701,399.0 1700,399.0 1700,399.0 1699,399.0 1699,399.0 1698,399.0 1698,388.2 1697,388.2 1697,388.8 1696,388.8 1696,390.6 1695,390.6 1695,392.6 1694,392.6 1694,393.6 1693,393.6 1693,395.8 1692,395.8 1692,399.0 1691,399.0 1691,399.0 1690,399.0 1690,387.8 1689,387.8 1689,389.5 1688,389.5 1688,390.3 1687,390.3 1687,391.5 1686,391.5 1686,392.3 1685,392.3 1685,399.0 1684,399.0 1684,388.5 1683,388.5 1683,389.4 1682,389.4 1682,390.0 1681,390.0 1681,391.7 1680,391.7 1680,392.8 1679,392.8 1679,392.8 1678,392.8 1678,390.3 1677,390.3 1677,389.9 1676,389.9 1676,390.8 1675,390.8 1675,392.1 1674,392.1 1674,393.9 1673,393.9 1673,393.9 1672,393.9 1672,387.9 1671,387.9 1671,388.8 1670,388.8 1670,390.3 1669,390.3 1669,391.2 1668,391.2 1668,392.4 1667,392.4 1667,399.0 1666,399.0 1666,390.7 1665,390.7 1665,392.3 1664,392.3 1664,393.8 1663,393.8 1663,396.9 1662,396.9 1662,396.9 1661,396.9 1661,396.9 1660,396.9 1660,389.5 1659,389.5 1659,389.7 1658,389.7 1658,389.7 1657,389.7 1657,390.8 1656,390.8 1656,390.6 1655,390.6 1655,393.0 1654,393.0 1654,393.0 1653,393.0 1653,393.0 1652,393.0 1652,393.8 1651,393.8 1651,394.0 1650,394.0 1650,399.0 1649,399.0 1649,399.0 1648,399.0 1648,399.0 1647,399.0 1647,399.0 1646,399.0 1646,390.8 1645,390.8 1645,391.4 1644,391.4 1644,393.4 1643,393.4 1643,399.0 1642,399.0 1642,399.0 1641,399.0 1641,399.0 1640,399.0 1640,391.2 1639,391.2 1639,391.8 1638,391.8 1638,392.4 1637,392.4 1637,394.3 1636,394.3 1636,394.3 1635,394.3 1635,394.3 1634,394.3 1634,392.4 1633,392.4 1633,394.6 1632,394.6 1632,394.6 1631,394.6 1631,394.6 1630,394.6 1630,387.2 1629,387.2 1629,387.2 1628,387.2 1628,387.2 1627,387.2 1627,387.8 1626,387.8 1626,388.8 1625,388.8 1625,389.4 1624,389.4 1624,390.4 1623,390.4 1623,391.0 1622,391.0 1622,394.3 1621,394.3 1621,390.5 1620,390.5 1620,392.0 1619,392.0 1619,392.3 1618,392.3 1618,394.1 1617,394.1 1617,394.6 1616,394.6 1616,399.0 1615,399.0 1615,399.0 1614,399.0 1614,399.0 1613,399.0 1613,388.7 1612,388.7 1612,389.3 1611,389.3 1611,389.3 1610,389.3 1610,389.5 1609,389.5 1609,391.7 1608,391.7 1608,387.2 1607,387.2 1607,387.2 1606,387.2 1606,387.2 1605,387.2 1605,387.5 1604,387.5 1604,388.4 1603,388.4 1603,389.0 1602,389.0 1602,390.7 1601,390.7 1601,391.7 1600,391.7 1600,399.0 1599,399.0 1599,388.2 1598,388.2 1598,388.9 1597,388.9 1597,389.3 1596,389.3 1596,390.0 1595,390.0 1595,391.2 1594,391.2 1594,392.0 1593,392.0 1593,397.0 1592,397.0 1592,390.6 1591,390.6 1591,391.6 1590,391.6 1590,393.0 1589,393.0 1589,399.0 1588,399.0 1588,399.0 1587,399.0 1587,388.8 1586,388.8 1586,390.1 1585,390.1 1585,390.9 1584,390.9 1584,391.4 1583,391.4 1583,392.3 1582,392.3 1582,393.2 1581,393.2 1581,393.2 1580,393.2 1580,390.3 1579,390.3 1579,391.6 1578,391.6 1578,391.8 1577,391.8 1577,399.0 1576,399.0 1576,392.8 1575,392.8 1575,393.9 1574,393.9 1574,396.0 1573,396.0 1573,396.0 1572,396.0 1572,393.1 1571,393.1 1571,394.6 1570,394.6 1570,396.5 1569,396.5 1569,399.0 1568,399.0 1568,399.0 1567,399.0 1567,399.0 1566,399.0 1566,399.0 1565,399.0 1565,389.1 1564,389.1 1564,389.2 1563,389.2 1563,390.2 1562,390.2 1562,391.8 1561,391.8 1561,392.2 1560,392.2 1560,394.1 1559,394.1 1559,395.4 1558,395.4 1558,397.0 1557,397.0 1557,397.0 1556,397.0 1556,391.4 1555,391.4 1555,393.5 1554,393.5 1554,395.2 1553,395.2 1553,397.2 1552,397.2 1552,397.2 1551,397.2 1551,397.2 1550,397.2 1550,389.9 1549,389.9 1549,391.3 1548,391.3 1548,392.3 1547,392.3 1547,399.0 1546,399.0 1546,399.0 1545,399.0 1545,399.0 1544,399.0 1544,399.0 1543,399.0 1543,399.0 1542,399.0 1542,399.0 1541,399.0 1541,399.0 1540,399.0 1540,392.1 1539,392.1 1539,392.9 1538,392.9 1538,394.7 1537,394.7 1537,395.6 1536,395.6 1536,399.0 1535,399.0 1535,399.0 1534,399.0 1534,399.0 1533,399.0 1533,399.0 1532,399.0 1532,388.3 1531,388.3 1531,389.0 1530,389.0 1530,389.5 1529,389.5 1529,389.6 1528,389.6 1528,390.2 1527,390.2 1527,393.7 1526,393.7 1526,393.7 1525,393.7 1525,393.7 1524,393.7 1524,387.2 1523,387.2 1523,387.4 1522,387.4 1522,387.2 1521,387.2 1521,387.3 1520,387.3 1520,387.4 1519,387.4 1519,387.8 1518,387.8 1518,389.0 1517,389.0 1517,389.9 1516,389.9 1516,392.8 1515,392.8 1515,389.6 1514,389.6 1514,391.2 1513,391.2 1513,392.3 1512,392.3 1512,399.0 1511,399.0 1511,399.0 1510,399.0 1510,399.0 1509,399.0 1509,390.0 1508,390.0 1508,389.7 1507,389.7 1507,390.9 1506,390.9 1506,391.9 1505,391.9 1505,392.7 1504,392.7 1504,399.0 1503,399.0 1503,391.0 1502,391.0 1502,391.9 1501,391.9 1501,395.9 1500,395.9 1500,395.9 1499,395.9 1499,389.8 1498,389.8 1498,389.7 1497,389.7 1497,391.3 1496,391.3 1496,391.2 1495,391.2 1495,392.6 1494,392.6 1494,399.0 1493,399.0 1493,390.2 1492,390.2 1492,390.7 1491,390.7 1491,391.1 1490,391.1 1490,392.0 1489,392.0 1489,399.0 1488,399.0 1488,389.1 1487,389.1 1487,389.3 1486,389.3 1486,390.8 1485,390.8 1485,391.1 1484,391.1 1484,392.7 1483,392.7 1483,394.7 1482,394.7 1482,392.3 1481,392.3 1481,393.3 1480,393.3 1480,399.0 1479,399.0 1479,399.0 1478,399.0 1478,390.7 1477,390.7 1477,391.5 1476,391.5 1476,391.9 1475,391.9 1475,399.0 1474,399.0 1474,399.0 1473,399.0 1473,399.0 1472,399.0 1472,390.9 1471,390.9 1471,391.5 1470,391.5 1470,392.5 1469,392.5 1469,399.0 1468,399.0 1468,399.0 1467,399.0 1467,399.0 1466,399.0 1466,392.6 1465,392.6 1465,394.0 1464,394.0 1464,395.0 1463,395.0 1463,395.0 1462,395.0 1462,387.8 1461,387.8 1461,389.8 1460,389.8 1460,390.6 1459,390.6 1459,391.6 1458,391.6 1458,393.3 1457,393.3 1457,399.0 1456,399.0 1456,399.0 1455,399.0 1455,388.3 1454,388.3 1454,390.0 1453,390.0 1453,390.9 1452,390.9 1452,391.5 1451,391.5 1451,392.5 1450,392.5 1450,392.8 1449,392.8 1449,397.0 1448,397.0 1448,387.2 1447,387.2 1447,387.5 1446,387.5 1446,387.7 1445,387.7 1445,389.1 1444,389.1 1444,390.2 1443,390.2 1443,392.5 1442,392.5 1442,394.7 1441,394.7 1441,399.0 1440,399.0 1440,399.0 1439,399.0 1439,392.1 1438,392.1 1438,394.1 1437,394.1 1437,399.0 1436,399.0 1436,399.0 1435,399.0 1435,399.0 1434,399.0 1434,399.0 1433,399.0 1433,391.0 1432,391.0 1432,392.3 1431,392.3 1431,394.9 1430,394.9 1430,396.0 1429,396.0 1429,399.0 1428,399.0 1428,399.0 1427,399.0 1427,399.0 1426,399.0 1426,399.0 1425,399.0 1425,387.2 1424,387.2 1424,387.5 1423,387.5 1423,388.5 1422,388.5 1422,389.3 1421,389.3 1421,389.5 1420,389.5 1420,391.4 1419,391.4 1419,392.1 1418,392.1 1418,399.0 1417,399.0 1417,391.7 1416,391.7 1416,392.7 1415,392.7 1415,393.0 1414,393.0 1414,394.4 1413,394.4 1413,399.0 1412,399.0 1412,399.0 1411,399.0 1411,387.2 1410,387.2 1410,387.6 1409,387.6 1409,387.9 1408,387.9 1408,389.0 1407,389.0 1407,389.2 1406,389.2 1406,391.0 1405,391.0 1405,392.2 1404,392.2 1404,399.0 1403,399.0 1403,388.3 1402,388.3 1402,388.6 1401,388.6 1401,389.6 1400,389.6 1400,391.1 1399,391.1 1399,390.9 1398,390.9 1398,392.9 1397,392.9 1397,387.6 1396,387.6 1396,388.3 1395,388.3 1395,390.3 1394,390.3 1394,390.6 1393,390.6 1393,391.8 1392,391.8 1392,399.0 1391,399.0 1391,394.0 1390,394.0 1390,396.7 1389,396.7 1389,399.0 1388,399.0 1388,399.0 1387,399.0 1387,389.2 1386,389.2 1386,390.6 1385,390.6 1385,391.9 1384,391.9 1384,392.2 1383,392.2 1383,394.4 1382,394.4 1382,394.4 1381,394.4 1381,388.1 1380,388.1 1380,388.6 1379,388.6 1379,389.2 1378,389.2 1378,390.3 1377,390.3 1377,392.4 1376,392.4 1376,392.4 1375,392.4 1375,387.5 1374,387.5 1374,389.2 1373,389.2 1373,389.6 1372,389.6 1372,391.1 1371,391.1 1371,391.4 1370,391.4 1370,392.3 1369,392.3 1369,393.5 1368,393.5 1368,396.5 1367,396.5 1367,396.5 1366,396.5 1366,387.2 1365,387.2 1365,387.2 1364,387.2 1364,387.7 1363,387.7 1363,388.5 1362,388.5 1362,389.7 1361,389.7 1361,390.3 1360,390.3 1360,392.3 1359,392.3 1359,399.0 1358,399.0 1358,389.6 1357,389.6 1357,389.2 1356,389.2 1356,390.8 1355,390.8 1355,392.0 1354,392.0 1354,392.5 1353,392.5 1353,399.0 1352,399.0 1352,399.0 1351,399.0 1351,399.0 1350,399.0 1350,393.1 1349,393.1 1349,393.7 1348,393.7 1348,395.2 1347,395.2 1347,396.8 1346,396.8 1346,399.0 1345,399.0 1345,399.0 1344,399.0 1344,389.5 1343,389.5 1343,390.6 1342,390.6 1342,392.8 1341,392.8 1341,393.7 1340,393.7 1340,393.7 1339,393.7 1339,389.5 1338,389.5 1338,390.2 1337,390.2 1337,391.2 1336,391.2 1336,392.8 1335,392.8 1335,399.0 1334,399.0 1334,399.0 1333,399.0 1333,387.8 1332,387.8 1332,387.8 1331,387.8 1331,388.0 1330,388.0 1330,388.6 1329,388.6 1329,389.4 1328,389.4 1328,389.6 1327,389.6 1327,393.0 1326,393.0 1326,393.0 1325,393.0 1325,389.2 1324,389.2 1324,388.8 1323,388.8 1323,390.2 1322,390.2 1322,390.2 1321,390.2 1321,392.0 1320,392.0 1320,392.0 1319,392.0 1319,388.2 1318,388.2 1318,388.2 1317,388.2 1317,388.7 1316,388.7 1316,389.5 1315,389.5 1315,389.2 1314,389.2 1314,392.2 1313,392.2 1313,389.4 1312,389.4 1312,391.3 1311,391.3 1311,391.6 1310,391.6 1310,393.8 1309,393.8 1309,394.6 1308,394.6 1308,399.0 1307,399.0 1307,399.0 1306,399.0 1306,399.0 1305,399.0 1305,399.0 1304,399.0 1304,387.9 1303,387.9 1303,388.5 1302,388.5 1302,389.5 1301,389.5 1301,390.6 1300,390.6 1300,394.5 1299,394.5 1299,389.3 1298,389.3 1298,392.2 1297,392.2 1297,392.2 1296,392.2 1296,392.2 1295,392.2 1295,389.8 1294,389.8 1294,389.4 1293,389.4 1293,391.1 1292,391.1 1292,391.2 1291,391.2 1291,392.8 1290,392.8 1290,392.8 1289,392.8 1289,390.4 1288,390.4 1288,390.7 1287,390.7 1287,392.3 1286,392.3 1286,394.6 1285,394.6 1285,399.0 1284,399.0 1284,399.0 1283,399.0 1283,399.0 1282,399.0 1282,390.6 1281,390.6 1281,391.8 1280,391.8 1280,393.4 1279,393.4 1279,396.4 1278,396.4 1278,387.2 1277,387.2 1277,387.2 1276,387.2 1276,387.6 1275,387.6 1275,387.9 1274,387.9 1274,388.9 1273,388.9 1273,389.7 1272,389.7 1272,391.9 1271,391.9 1271,393.5 1270,393.5 1270,387.4 1269,387.4 1269,387.8 1268,387.8 1268,388.1 1267,388.1 1267,389.8 1266,389.8 1266,390.0 1265,390.0 1265,391.9 1264,391.9 1264,393.5 1263,393.5 1263,393.5 1262,393.5 1262,393.5 1261,393.5 1261,392.1 1260,392.1 1260,394.3 1259,394.3 1259,397.7 1258,397.7 1258,399.0 1257,399.0 1257,399.0 1256,399.0 1256,390.3 1255,390.3 1255,391.8 1254,391.8 1254,396.4 1253,396.4 1253,396.4 1252,396.4 1252,396.4 1251,396.4 1251,387.2 1250,387.2 1250,387.2 1249,387.2 1249,387.8 1248,387.8 1248,388.6 1247,388.6 1247,389.2 1246,389.2 1246,389.4 1245,389.4 1245,393.6 1244,393.6 1244,393.6 1243,393.6 1243,388.5 1242,388.5 1242,389.3 1241,389.3 1241,389.8 1240,389.8 1240,390.1 1239,390.1 1239,392.2 1238,392.2 1238,393.0 1237,393.0 1237,395.7 1236,395.7 1236,395.7 1235,395.7 1235,399.0 1234,399.0 1234,399.0 1233,399.0 1233,399.0 1232,399.0 1232,399.0 1231,399.0 1231,390.1 1230,390.1 1230,390.9 1229,390.9 1229,391.1 1228,391.1 1228,391.9 1227,391.9 1227,391.9 1226,391.9 1226,391.9 1225,391.9 1225,387.2 1224,387.2 1224,387.3 1223,387.3 1223,388.5 1222,388.5 1222,388.5 1221,388.5 1221,388.9 1220,388.9 1220,389.7 1219,389.7 1219,389.6 1218,389.6 1218,390.6 1217,390.6 1217,394.6 1216,394.6 1216,394.6 1215,394.6 1215,391.1 1214,391.1 1214,393.1 1213,393.1 1213,393.4 1212,393.4 1212,393.4 1211,393.4 1211,393.4 1210,393.4 1210,390.5 1209,390.5 1209,390.7 1208,390.7 1208,392.3 1207,392.3 1207,393.5 1206,393.5 1206,399.0 1205,399.0 1205,399.0 1204,399.0 1204,399.0 1203,399.0 1203,399.0 1202,399.0 1202,388.8 1201,388.8 1201,390.8 1200,390.8 1200,392.0 1199,392.0 1199,392.6 1198,392.6 1198,394.3 1197,394.3 1197,399.0 1196,399.0 1196,399.0 1195,399.0 1195,399.0 1194,399.0 1194,399.0 1193,399.0 1193,393.1 1192,393.1 1192,394.2 1191,394.2 1191,397.3 1190,397.3 1190,397.3 1189,397.3 1189,387.2 1188,387.2 1188,388.4 1187,388.4 1187,388.3 1186,388.3 1186,390.0 1185,390.0 1185,390.3 1184,390.3 1184,390.9 1183,390.9 1183,392.0 1182,392.0 1182,399.0 1181,399.0 1181,389.4 1180,389.4 1180,390.6 1179,390.6 1179,391.1 1178,391.1 1178,392.9 1177,392.9 1177,399.0 1176,399.0 1176,399.0 1175,399.0 1175,399.0 1174,399.0 1174,399.0 1173,399.0 1173,388.7 1172,388.7 1172,389.2 1171,389.2 1171,389.5 1170,389.5 1170,390.5 1169,390.5 1169,390.4 1168,390.4 1168,394.4 1167,394.4 1167,394.4 1166,394.4 1166,394.4 1165,394.4 1165,389.6 1164,389.6 1164,389.7 1163,389.7 1163,390.8 1162,390.8 1162,392.4 1161,392.4 1161,399.0 1160,399.0 1160,387.2 1159,387.2 1159,387.2 1158,387.2 1158,387.2 1157,387.2 1157,387.2 1156,387.2 1156,387.2 1155,387.2 1155,387.4 1154,387.4 1154,387.9 1153,387.9 1153,389.0 1152,389.0 1152,390.2 1151,390.2 1151,394.2 1150,394.2 1150,389.3 1149,389.3 1149,389.8 1148,389.8 1148,391.2 1147,391.2 1147,392.4 1146,392.4 1146,399.0 1145,399.0 1145,399.0 1144,399.0 1144,399.0 1143,399.0 1143,387.2 1142,387.2 1142,387.2 1141,387.2 1141,387.3 1140,387.3 1140,387.7 1139,387.7 1139,389.5 1138,389.5 1138,390.7 1137,390.7 1137,391.0 1136,391.0 1136,393.7 1135,393.7 1135,393.7 1134,393.7 1134,391.6 1133,391.6 1133,392.5 1132,392.5 1132,392.9 1131,392.9 1131,396.3 1130,396.3 1130,396.3 1129,396.3 1129,389.1 1128,389.1 1128,389.1 1127,389.1 1127,389.3 1126,389.3 1126,390.0 1125,390.0 1125,391.5 1124,391.5 1124,392.1 1123,392.1 1123,394.7 1122,394.7 1122,391.4 1121,391.4 1121,392.1 1120,392.1 1120,393.4 1119,393.4 1119,393.8 1118,393.8 1118,396.0 1117,396.0 1117,399.0 1116,399.0 1116,399.0 1115,399.0 1115,399.0 1114,399.0 1114,390.9 1113,390.9 1113,391.3 1112,391.3 1112,392.2 1111,392.2 1111,399.0 1110,399.0 1110,388.1 1109,388.1 1109,389.5 1108,389.5 1108,392.1 1107,392.1 1107,394.2 1106,394.2 1106,396.7 1105,396.7 1105,399.0 1104,399.0 1104,399.0 1103,399.0 1103,399.0 1102,399.0 1102,391.0 1101,391.0 1101,391.6 1100,391.6 1100,392.6 1099,392.6 1099,399.0 1098,399.0 1098,388.4 1097,388.4 1097,388.5 1096,388.5 1096,390.0 1095,390.0 1095,391.0 1094,391.0 1094,391.5 1093,391.5 1093,392.4 1092,392.4 1092,393.3 1091,393.3 1091,393.9 1090,393.9 1090,399.0 1089,399.0 1089,399.0 1088,399.0 1088,387.2 1087,387.2 1087,387.2 1086,387.2 1086,387.2 1085,387.2 1085,387.9 1084,387.9 1084,388.8 1083,388.8 1083,390.4 1082,390.4 1082,392.2 1081,392.2 1081,399.0 1080,399.0 1080,388.3 1079,388.3 1079,388.2 1078,388.2 1078,388.9 1077,388.9 1077,389.9 1076,389.9 1076,393.8 1075,393.8 1075,393.8 1074,393.8 1074,393.8 1073,393.8 1073,387.2 1072,387.2 1072,387.2 1071,387.2 1071,387.6 1070,387.6 1070,388.7 1069,388.7 1069,389.7 1068,389.7 1068,390.9 1067,390.9 1067,392.2 1066,392.2 1066,393.0 1065,393.0 1065,393.8 1064,393.8 1064,393.8 1063,393.8 1063,392.3 1062,392.3 1062,395.2 1061,395.2 1061,397.2 1060,397.2 1060,399.0 1059,399.0 1059,399.0 1058,399.0 1058,399.0 1057,399.0 1057,388.0 1056,388.0 1056,389.9 1055,389.9 1055,390.9 1054,390.9 1054,391.4 1053,391.4 1053,393.3 1052,393.3 1052,393.9 1051,393.9 1051,396.0 1050,396.0 1050,396.0 1049,396.0 1049,396.0 1048,396.0 1048,390.0 1047,390.0 1047,390.4 1046,390.4 1046,392.2 1045,392.2 1045,392.8 1044,392.8 1044,399.0 1043,399.0 1043,399.0 1042,399.0 1042,399.0 1041,399.0 1041,387.2 1040,387.2 1040,387.9 1039,387.9 1039,388.3 1038,388.3 1038,390.0 1037,390.0 1037,392.0 1036,392.0 1036,394.3 1035,394.3 1035,396.4 1034,396.4 1034,396.4 1033,396.4 1033,387.4 1032,387.4 1032,387.2 1031,387.2 1031,388.7 1030,388.7 1030,389.5 1029,389.5 1029,390.4 1028,390.4 1028,392.0 1027,392.0 1027,393.6 1026,393.6 1026,394.7 1025,394.7 1025,399.0 1024,399.0 1024,399.0 1023,399.0 1023,387.2 1022,387.2 1022,388.0 1021,388.0 1021,387.8 1020,387.8 1020,388.8 1019,388.8 1019,389.3 1018,389.3 1018,392.6 1017,392.6 1017,392.6 1016,392.6 1016,387.3 1015,387.3 1015,388.1 1014,388.1 1014,388.2 1013,388.2 1013,389.6 1012,389.6 1012,389.4 1011,389.4 1011,390.7 1010,390.7 1010,395.8 1009,395.8 1009,389.4 1008,389.4 1008,390.1 1007,390.1 1007,390.9 1006,390.9 1006,392.0 1005,392.0 1005,393.7 1004,393.7 1004,393.7 1003,393.7 1003,390.7 1002,390.7 1002,391.2 1001,391.2 1001,392.1 1000,392.1 1000,399.0 999,399.0 999,392.7 998,392.7 998,393.8 997,393.8 997,394.4 996,394.4 996,395.7 995,395.7 995,399.0 994,399.0 994,399.0 993,399.0 993,399.0 992,399.0 992,389.2 991,389.2 991,390.7 990,390.7 990,390.7 989,390.7 989,392.0 988,392.0 988,393.5 987,393.5 987,395.1 986,395.1 986,397.1 985,397.1 985,390.2 984,390.2 984,392.0 983,392.0 983,395.3 982,395.3 982,397.6 981,397.6 981,399.0 980,399.0 980,399.0 979,399.0 979,399.0 978,399.0 978,399.0 977,399.0 977,399.0 976,399.0 976,399.0 975,399.0 975,399.0 974,399.0 974,399.0 973,399.0 973,390.5 972,390.5 972,391.4 971,391.4 971,391.8 970,391.8 970,392.6 969,392.6 969,393.6 968,393.6 968,396.3 967,396.3 967,396.3 966,396.3 966,396.3 965,396.3 965,389.7 964,389.7 964,390.6 963,390.6 963,393.0 962,393.0 962,393.0 961,393.0 961,387.2 960,387.2 960,387.2 959,387.2 959,387.2 958,387.2 958,388.3 957,388.3 957,388.2 956,388.2 956,389.9 955,389.9 955,390.1 954,390.1 954,391.2 953,391.2 953,392.3 952,392.3 952,394.4 951,394.4 951,387.2 950,387.2 950,387.2 949,387.2 949,387.2 948,387.2 948,388.6 947,388.6 947,389.1 946,389.1 946,390.9 945,390.9 945,392.1 944,392.1 944,399.0 943,399.0 943,391.7 942,391.7 942,394.1 941,394.1 941,399.0 940,399.0 940,399.0 939,399.0 939,399.0 938,399.0 938,399.0 937,399.0 937,390.2 936,390.2 936,391.6 935,391.6 935,392.9 934,392.9 934,392.9 933,392.9 933,390.3 932,390.3 932,391.3 931,391.3 931,392.4 930,392.4 930,395.8 929,395.8 929,395.8 928,395.8 928,387.9 927,387.9 927,388.8 926,388.8 926,389.4 925,389.4 925,390.2 924,390.2 924,390.8 923,390.8 923,390.8 922,390.8 922,392.6 921,392.6 921,399.0 920,399.0 920,390.3 919,390.3 919,390.6 918,390.6 918,391.9 917,391.9 917,399.0 916,399.0 916,387.2 915,387.2 915,387.2 914,387.2 914,388.1 913,388.1 913,389.1 912,389.1 912,390.5 911,390.5 911,391.7 910,391.7 910,399.0 909,399.0 909,387.2 908,387.2 908,387.7 907,387.7 907,388.9 906,388.9 906,390.1 905,390.1 905,390.6 904,390.6 904,392.2 903,392.2 903,393.4 902,393.4 902,394.5 901,394.5 901,396.5 900,396.5 900,397.1 899,397.1 899,391.4 898,391.4 898,393.2 897,393.2 897,394.5 896,394.5 896,397.5 895,397.5 895,399.0 894,399.0 894,399.0 893,399.0 893,399.0 892,399.0 892,399.0 891,399.0 891,387.8 890,387.8 890,388.1 889,388.1 889,387.9 888,387.9 888,388.9 887,388.9 887,390.3 886,390.3 886,390.5 885,390.5 885,391.4 884,391.4 884,392.2 883,392.2 883,387.2 882,387.2 882,387.3 881,387.3 881,387.8 880,387.8 880,388.7 879,388.7 879,389.2 878,389.2 878,389.0 877,389.0 877,389.3 876,389.3 876,391.7 875,391.7 875,391.7 874,391.7 874,389.0 873,389.0 873,390.3 872,390.3 872,390.5 871,390.5 871,395.3 870,395.3 870,388.0 869,388.0 869,389.7 868,389.7 868,391.5 867,391.5 867,392.6 866,392.6 866,394.6 865,394.6 865,399.0 864,399.0 864,399.0 863,399.0 863,399.0 862,399.0 862,399.0 861,399.0 861,389.3 860,389.3 860,391.8 859,391.8 859,393.0 858,393.0 858,395.9 857,395.9 857,399.0 856,399.0 856,399.0 855,399.0 855,390.1 854,390.1 854,391.6 853,391.6 853,392.6 852,392.6 852,394.6 851,394.6 851,395.2 850,395.2 850,399.0 849,399.0 849,399.0 848,399.0 848,399.0 847,399.0 847,390.0 846,390.0 846,391.5 845,391.5 845,392.7 844,392.7 844,394.5 843,394.5 843,394.5 842,394.5 842,387.2 841,387.2 841,387.5 840,387.5 840,388.9 839,388.9 839,389.2 838,389.2 838,390.6 837,390.6 837,391.9 836,391.9 836,399.0 835,399.0 835,387.2 834,387.2 834,387.9 833,387.9 833,389.1 832,389.1 832,388.9 831,388.9 831,390.4 830,390.4 830,390.7 829,390.7 829,392.0 828,392.0 828,393.1 827,393.1 827,393.8 826,393.8 826,393.8 825,393.8 825,387.5 824,387.5 824,388.3 823,388.3 823,390.0 822,390.0 822,390.2 821,390.2 821,392.0 820,392.0 820,399.0 819,399.0 819,389.9 818,389.9 818,391.6 817,391.6 817,392.1 816,392.1 816,395.8 815,395.8 815,395.8 814,395.8 814,390.4 813,390.4 813,391.6 812,391.6 812,392.3 811,392.3 811,393.5 810,393.5 810,399.0 809,399.0 809,399.0 808,399.0 808,399.0 807,399.0 807,399.0 806,399.0 806,389.1 805,389.1 805,390.0 804,390.0 804,390.4 803,390.4 803,390.9 802,390.9 802,392.7 801,392.7 801,393.6 800,393.6 800,395.6 799,395.6 799,390.1 798,390.1 798,390.4 797,390.4 797,391.8 796,391.8 796,391.6 795,391.6 795,399.0 794,399.0 794,388.1 793,388.1 793,388.3 792,388.3 792,389.6 791,389.6 791,390.5 790,390.5 790,390.9 789,390.9 789,392.2 788,392.2 788,393.3 787,393.3 787,399.0 786,399.0 786,396.7 785,396.7 785,399.0 784,399.0 784,399.0 783,399.0 783,399.0 782,399.0 782,387.2 781,387.2 781,388.4 780,388.4 780,389.5 779,389.5 779,389.5 778,389.5 778,390.7 777,390.7 777,391.6 776,391.6 776,392.8 775,392.8 775,392.8 774,392.8 774,389.7 773,389.7 773,390.8 772,390.8 772,391.3 771,391.3 771,391.7 770,391.7 770,396.9 769,396.9 769,396.9 768,396.9 768,396.9 767,396.9 767,390.4 766,390.4 766,390.8 765,390.8 765,391.5 764,391.5 764,392.0 763,392.0 763,393.1 762,393.1 762,395.9 761,395.9 761,395.9 760,395.9 760,396.9 759,396.9 759,399.0 758,399.0 758,399.0 757,399.0 757,399.0 756,399.0 756,388.9 755,388.9 755,389.4 754,389.4 754,390.1 753,390.1 753,390.8 752,390.8 752,391.7 751,391.7 751,392.4 750,392.4 750,393.5 749,393.5 749,393.9 748,393.9 748,396.3 747,396.3 747,387.2 746,387.2 746,387.9 745,387.9 745,388.0 744,388.0 744,389.2 743,389.2 743,390.9 742,390.9 742,392.0 741,392.0 741,393.8 740,393.8 740,399.0 739,399.0 739,399.0 738,399.0 738,399.0 737,399.0 737,391.0 736,391.0 736,391.7 735,391.7 735,392.2 734,392.2 734,394.2 733,394.2 733,394.8 732,394.8 732,394.8 731,394.8 731,387.6 730,387.6 730,387.8 729,387.8 729,388.8 728,388.8 728,390.2 727,390.2 727,390.6 726,390.6 726,392.0 725,392.0 725,399.0 724,399.0 724,387.2 723,387.2 723,387.2 722,387.2 722,388.5 721,388.5 721,388.6 720,388.6 720,390.2 719,390.2 719,391.8 718,391.8 718,393.5 717,393.5 717,396.3 716,396.3 716,396.3 715,396.3 715,387.2 714,387.2 714,387.6 713,387.6 713,387.7 712,387.7 712,388.8 711,388.8 711,390.3 710,390.3 710,390.9 709,390.9 709,394.5 708,394.5 708,394.5 707,394.5 707,389.0 706,389.0 706,389.5 705,389.5 705,390.2 704,390.2 704,391.3 703,391.3 703,393.7 702,393.7 702,389.2 701,389.2 701,390.2 700,390.2 700,390.6 699,390.6 699,391.7 698,391.7 698,392.5 697,392.5 697,399.0 696,399.0 696,388.4 695,388.4 695,389.6 694,389.6 694,391.4 693,391.4 693,391.8 692,391.8 692,399.0 691,399.0 691,388.5 690,388.5 690,390.2 689,390.2 689,391.1 688,391.1 688,392.0 687,392.0 687,392.1 686,392.1 686,393.0 685,393.0 685,395.9 684,395.9 684,395.9 683,395.9 683,389.0 682,389.0 682,388.9 681,388.9 681,390.0 680,390.0 680,391.7 679,391.7 679,393.1 678,393.1 678,394.4 677,394.4 677,395.6 676,395.6 676,395.6 675,395.6 675,389.0 674,389.0 674,390.3 673,390.3 673,392.3 672,392.3 672,394.9 671,394.9 671,399.0 670,399.0 670,399.0 669,399.0 669,399.0 668,399.0 668,399.0 667,399.0 667,389.0 666,389.0 666,391.2 665,391.2 665,392.5 664,392.5 664,399.0 663,399.0 663,387.2 662,387.2 662,387.2 661,387.2 661,388.0 660,388.0 660,388.4 659,388.4 659,388.8 658,388.8 658,389.4 657,389.4 657,389.9 656,389.9 656,391.5 655,391.5 655,392.0 654,392.0 654,399.0 653,399.0 653,389.8 652,389.8 652,390.8 651,390.8 651,391.5 650,391.5 650,394.8 649,394.8 649,391.1 648,391.1 648,394.4 647,394.4 647,396.8 646,396.8 646,399.0 645,399.0 645,399.0 644,399.0 644,399.0 643,399.0 643,390.0 642,390.0 642,391.8 641,391.8 641,392.9 640,392.9 640,395.9 639,395.9 639,395.9 638,395.9 638,389.7 637,389.7 637,390.0 636,390.0 636,391.0 635,391.0 635,395.5 634,395.5 634,395.5 633,395.5 633,388.2 632,388.2 632,388.9 631,388.9 631,389.0 630,389.0 630,390.3 629,390.3 629,392.1 628,392.1 628,396.1 627,396.1 627,396.1 626,396.1 626,396.1 625,396.1 625,387.2 624,387.2 624,387.6 623,387.6 623,388.5 622,388.5 622,390.8 621,390.8 621,391.5 620,391.5 620,394.0 619,394.0 619,399.0 618,399.0 618,399.0 617,399.0 617,390.4 616,390.4 616,390.5 615,390.5 615,391.9 614,391.9 614,393.7 613,393.7 613,394.2 612,394.2 612,395.9 611,395.9 611,395.9 610,395.9 610,395.9 609,395.9 609,387.2 608,387.2 608,387.2 607,387.2 607,387.2 606,387.2 606,387.6 605,387.6 605,388.1 604,388.1 604,388.4 603,388.4 603,388.4 602,388.4 602,388.8 601,388.8 601,392.1 600,392.1 600,388.0 599,388.0 599,389.3 598,389.3 598,390.8 597,390.8 597,391.5 596,391.5 596,392.9 595,392.9 595,393.3 594,393.3 594,395.6 593,395.6 593,395.6 592,395.6 592,389.8 591,389.8 591,390.2 590,390.2 590,390.6 589,390.6 589,392.2 588,392.2 588,392.6 587,392.6 587,399.0 586,399.0 586,399.0 585,399.0 585,399.0 584,399.0 584,388.2 583,388.2 583,389.7 582,389.7 582,389.6 581,389.6 581,390.3 580,390.3 580,391.8 579,391.8 579,392.5 578,392.5 578,396.6 577,396.6 577,396.6 576,396.6 576,389.8 575,389.8 575,390.7 574,390.7 574,391.8 573,391.8 573,392.3 572,392.3 572,399.0 571,399.0 571,399.0 570,399.0 570,399.0 569,399.0 569,391.6 568,391.6 568,393.2 567,393.2 567,394.1 566,394.1 566,395.9 565,395.9 565,397.7 564,397.7 564,399.0 563,399.0 563,399.0 562,399.0 562,399.0 561,399.0 561,387.2 560,387.2 560,387.3 559,387.3 559,387.6 558,387.6 558,387.7 557,387.7 557,388.9 556,388.9 556,389.4 555,389.4 555,391.2 554,391.2 554,399.0 553,399.0 553,387.2 552,387.2 552,388.0 551,388.0 551,388.7 550,388.7 550,389.9 549,389.9 549,391.6 548,391.6 548,392.8 547,392.8 547,392.8 546,392.8 546,387.4 545,387.4 545,387.3 544,387.3 544,387.8 543,387.8 543,388.8 542,388.8 542,390.3 541,390.3 541,392.1 540,392.1 540,393.1 539,393.1 539,393.1 538,393.1 538,387.5 537,387.5 537,388.3 536,388.3 536,388.8 535,388.8 535,390.4 534,390.4 534,392.5 533,392.5 533,393.5 532,393.5 532,393.5 531,393.5 531,387.2 530,387.2 530,387.2 529,387.2 529,387.6 528,387.6 528,387.6 527,387.6 527,388.9 526,388.9 526,389.5 525,389.5 525,391.4 524,391.4 524,399.0 523,399.0 523,387.4 522,387.4 522,387.8 521,387.8 521,387.8 520,387.8 520,389.1 519,389.1 519,390.2 518,390.2 518,392.7 517,392.7 517,393.3 516,393.3 516,393.3 515,393.3 515,387.7 514,387.7 514,388.1 513,388.1 513,389.0 512,389.0 512,390.0 511,390.0 511,391.9 510,391.9 510,392.9 509,392.9 509,392.9 508,392.9 508,387.2 507,387.2 507,387.2 506,387.2 506,388.2 505,388.2 505,389.1 504,389.1 504,390.0 503,390.0 503,392.8 502,392.8 502,393.4 501,393.4 501,393.4 500,393.4 500,387.2 499,387.2 499,387.2 498,387.2 498,387.3 497,387.3 497,387.4 496,387.4 496,388.3 495,388.3 495,389.7 494,389.7 494,391.3 493,391.3 493,399.0 492,399.0 492,387.2 491,387.2 491,387.6 490,387.6 490,389.2 489,389.2 489,390.3 488,390.3 488,392.4 487,392.4 487,393.2 486,393.2 486,393.2 485,393.2 485,387.2 484,387.2 484,387.2 483,387.2 483,387.2 482,387.2 482,387.8 481,387.8 481,388.7 480,388.7 480,389.3 479,389.3 479,391.8 478,391.8 478,399.0 477,399.0 477,387.2 476,387.2 476,387.4 475,387.4 475,387.7 474,387.7 474,388.3 473,388.3 473,389.8 472,389.8 472,391.7 471,391.7 471,392.2 470,392.2 470,392.2 469,392.2 469,387.2 468,387.2 468,387.3 467,387.3 467,387.3 466,387.3 466,387.5 465,387.5 465,388.4 464,388.4 464,389.7 463,389.7 463,391.4 462,391.4 462,399.0 461,399.0 461,387.2 460,387.2 460,387.2 459,387.2 459,387.9 458,387.9 458,389.0 457,389.0 457,389.8 456,389.8 456,392.2 455,392.2 455,392.9 454,392.9 454,392.9 453,392.9 453,387.3 452,387.3 452,387.4 451,387.4 451,387.7 450,387.7 450,388.6 449,388.6 449,389.3 448,389.3 448,391.2 447,391.2 447,392.0 446,392.0 446,392.0 445,392.0 445,387.2 444,387.2 444,387.5 443,387.5 443,388.1 442,388.1 442,388.4 441,388.4 441,389.6 440,389.6 440,391.3 439,391.3 439,399.0 438,399.0 438,387.2 437,387.2 437,387.4 436,387.4 436,387.8 435,387.8 435,388.8 434,388.8 434,389.9 433,389.9 433,391.4 432,391.4 432,399.0 431,399.0 431,387.5 430,387.5 430,387.9 429,387.9 429,388.6 428,388.6 428,389.8 427,389.8 427,391.5 426,391.5 426,392.1 425,392.1 425,392.1 424,392.1 424,387.2 423,387.2 423,387.5 422,387.5 422,387.5 421,387.5 421,388.5 420,388.5 420,389.8 419,389.8 419,391.9 418,391.9 418,392.9 417,392.9 417,392.9 416,392.9 416,387.6 415,387.6 415,387.6 414,387.6 414,388.1 413,388.1 413,389.6 412,389.6 412,391.1 411,391.1 411,392.1 410,392.1 410,392.1 409,392.1 409,387.2 408,387.2 408,387.3 407,387.3 407,387.2 406,387.2 406,387.4 405,387.4 405,388.6 404,388.6 404,389.8 403,389.8 403,391.5 402,391.5 402,399.0 401,399.0 401,387.2 400,387.2 400,387.6 399,387.6 399,387.7 398,387.7 398,388.4 397,388.4 397,389.9 396,389.9 396,391.3 395,391.3 395,399.0 394,399.0 394,387.8 393,387.8 393,387.7 392,387.7 392,389.2 391,389.2 391,390.3 390,390.3 390,392.0 389,392.0 389,393.2 388,393.2 388,393.2 387,393.2 387,387.2 386,387.2 386,387.7 385,387.7 385,388.0 384,388.0 384,388.4 383,388.4 383,390.1 382,390.1 382,391.9 381,391.9 381,393.0 380,393.0 380,393.0 379,393.0 379,387.2 378,387.2 378,387.5 377,387.5 377,387.6 376,387.6 376,388.3 375,388.3 375,390.1 374,390.1 374,391.2 373,391.2 373,399.0 372,399.0 372,387.3 371,387.3 371,387.2 370,387.2 370,388.0 369,388.0 369,388.9 368,388.9 368,389.5 367,389.5 367,391.3 366,391.3 366,399.0 365,399.0 365,387.5 364,387.5 364,387.4 363,387.4 363,387.7 362,387.7 362,388.9 361,388.9 361,390.0 360,390.0 360,392.0 359,392.0 359,393.1 358,393.1 358,393.1 357,393.1 357,387.2 356,387.2 356,387.8 355,387.8 355,389.1 354,389.1 354,390.4 353,390.4 353,392.1 352,392.1 352,393.5 351,393.5 351,393.5 350,393.5 350,387.2 349,387.2 349,387.2 348,387.2 348,387.4 347,387.4 347,388.3 346,388.3 346,389.4 345,389.4 345,391.2 344,391.2 344,399.0 343,399.0 343,387.6 342,387.6 342,388.2 341,388.2 341,389.1 340,389.1 340,390.4 339,390.4 339,391.8 338,391.8 338,393.0 337,393.0 337,393.0 336,393.0 336,387.2 335,387.2 335,387.3 334,387.3 334,388.2 333,388.2 333,388.9 332,388.9 332,390.4 331,390.4 331,391.9 330,391.9 330,393.2 329,393.2 329,393.2 328,393.2 328,387.2 327,387.2 327,387.4 326,387.4 326,387.7 325,387.7 325,387.4 324,387.4 324,388.7 323,388.7 323,389.9 322,389.9 322,391.2 321,391.2 321,399.0 320,399.0 320,387.2 319,387.2 319,387.2 318,387.2 318,387.4 317,387.4 317,387.8 316,387.8 316,388.5 315,388.5 315,390.0 314,390.0 314,391.5 313,391.5 313,399.0 312,399.0 312,387.2 311,387.2 311,387.2 310,387.2 310,387.2 309,387.2"/></svg>
<svg class="a" style="left:0;top:0" width="1921" height="1080"><polygon fill="#e8c666" points="309,433.9 310,433.9 310,433.9 311,433.9 311,433.9 312,433.9 312,433.9 313,433.9 313,433.9 314,433.9 314,433.9 315,433.9 315,433.9 316,433.9 316,433.9 317,433.9 317,433.9 318,433.9 318,433.9 319,433.9 319,433.9 320,433.9 320,433.9 321,433.9 321,433.9 322,433.9 322,433.9 323,433.9 323,433.9 324,433.9 324,433.9 325,433.9 325,433.9 326,433.9 326,433.9 327,433.9 327,433.9 328,433.9 328,433.9 329,433.9 329,433.9 330,433.9 330,433.9 331,433.9 331,433.9 332,433.9 332,433.9 333,433.9 333,433.9 334,433.9 334,433.9 335,433.9 335,433.9 336,433.9 336,433.9 337,433.9 337,433.9 338,433.9 338,433.9 339,433.9 339,433.9 340,433.9 340,433.9 341,433.9 341,433.9 342,433.9 342,433.9 343,433.9 343,433.9 344,433.9 344,433.9 345,433.9 345,433.9 346,433.9 346,433.9 347,433.9 347,433.9 348,433.9 348,433.9 349,433.9 349,433.9 350,433.9 350,433.9 351,433.9 351,433.9 352,433.9 352,433.9 353,433.9 353,433.9 354,433.9 354,433.9 355,433.9 355,433.9 356,433.9 356,433.9 357,433.9 357,433.9 358,433.9 358,433.9 359,433.9 359,433.9 360,433.9 360,433.9 361,433.9 361,433.9 362,433.9 362,433.9 363,433.9 363,433.9 364,433.9 364,433.9 365,433.9 365,433.9 366,433.9 366,433.9 367,433.9 367,433.9 368,433.9 368,433.9 369,433.9 369,433.9 370,433.9 370,433.9 371,433.9 371,433.9 372,433.9 372,433.9 373,433.9 373,433.9 374,433.9 374,433.9 375,433.9 375,433.9 376,433.9 376,433.9 377,433.9 377,433.9 378,433.9 378,433.9 379,433.9 379,433.9 380,433.9 380,433.9 381,433.9 381,433.9 382,433.9 382,433.9 383,433.9 383,433.9 384,433.9 384,433.9 385,433.9 385,433.9 386,433.9 386,433.9 387,433.9 387,433.9 388,433.9 388,433.9 389,433.9 389,433.9 390,433.9 390,433.9 391,433.9 391,433.9 392,433.9 392,433.9 393,433.9 393,433.9 394,433.9 394,433.9 395,433.9 395,433.9 396,433.9 396,433.9 397,433.9 397,433.9 398,433.9 398,433.9 399,433.9 399,433.9 400,433.9 400,433.9 401,433.9 401,433.9 402,433.9 402,433.9 403,433.9 403,433.9 404,433.9 404,433.9 405,433.9 405,433.9 406,433.9 406,433.9 407,433.9 407,433.9 408,433.9 408,433.9 409,433.9 409,433.9 410,433.9 410,433.9 411,433.9 411,433.9 412,433.9 412,433.9 413,433.9 413,433.9 414,433.9 414,433.9 415,433.9 415,433.9 416,433.9 416,433.9 417,433.9 417,433.9 418,433.9 418,433.9 419,433.9 419,433.9 420,433.9 420,433.9 421,433.9 421,433.9 422,433.9 422,433.9 423,433.9 423,433.9 424,433.9 424,433.9 425,433.9 425,433.9 426,433.9 426,433.9 427,433.9 427,433.9 428,433.9 428,433.9 429,433.9 429,433.9 430,433.9 430,433.9 431,433.9 431,433.9 432,433.9 432,433.9 433,433.9 433,433.9 434,433.9 434,433.9 435,433.9 435,433.9 436,433.9 436,433.9 437,433.9 437,433.9 438,433.9 438,433.9 439,433.9 439,433.9 440,433.9 440,433.9 441,433.9 441,433.9 442,433.9 442,433.9 443,433.9 443,433.9 444,433.9 444,433.9 445,433.9 445,433.9 446,433.9 446,433.9 447,433.9 447,433.9 448,433.9 448,433.9 449,433.9 449,433.9 450,433.9 450,433.9 451,433.9 451,433.9 452,433.9 452,433.9 453,433.9 453,433.9 454,433.9 454,433.9 455,433.9 455,433.9 456,433.9 456,433.9 457,433.9 457,433.9 458,433.9 458,433.9 459,433.9 459,433.9 460,433.9 460,433.9 461,433.9 461,433.9 462,433.9 462,433.9 463,433.9 463,433.9 464,433.9 464,433.9 465,433.9 465,433.9 466,433.9 466,433.9 467,433.9 467,433.9 468,433.9 468,433.9 469,433.9 469,433.9 470,433.9 470,433.9 471,433.9 471,433.9 472,433.9 472,433.9 473,433.9 473,433.9 474,433.9 474,433.9 475,433.9 475,433.9 476,433.9 476,433.9 477,433.9 477,433.9 478,433.9 478,433.9 479,433.9 479,433.9 480,433.9 480,433.9 481,433.9 481,433.9 482,433.9 482,433.9 483,433.9 483,433.9 484,433.9 484,433.9 485,433.9 485,433.9 486,433.9 486,433.9 487,433.9 487,433.9 488,433.9 488,433.9 489,433.9 489,433.9 490,433.9 490,433.9 491,433.9 491,433.9 492,433.9 492,433.9 493,433.9 493,433.9 494,433.9 494,433.9 495,433.9 495,433.9 496,433.9 496,433.9 497,433.9 497,433.9 498,433.9 498,433.9 499,433.9 499,433.9 500,433.9 500,433.9 501,433.9 501,433.9 502,433.9 502,433.9 503,433.9 503,433.9 504,433.9 504,433.9 505,433.9 505,433.9 506,433.9 506,433.9 507,433.9 507,433.9 508,433.9 508,433.9 509,433.9 509,433.9 510,433.9 510,433.9 511,433.9 511,433.9 512,433.9 512,433.9 513,433.9 513,433.9 514,433.9 514,433.9 515,433.9 515,433.9 516,433.9 516,433.9 517,433.9 517,433.9 518,433.9 518,433.9 519,433.9 519,433.9 520,433.9 520,433.9 521,433.9 521,433.9 522,433.9 522,433.9 523,433.9 523,433.9 524,433.9 524,433.9 525,433.9 525,433.9 526,433.9 526,433.9 527,433.9 527,433.9 528,433.9 528,433.9 529,433.9 529,433.9 530,433.9 530,433.9 531,433.9 531,433.9 532,433.9 532,433.9 533,433.9 533,433.9 534,433.9 534,433.9 535,433.9 535,433.9 536,433.9 536,433.9 537,433.9 537,433.9 538,433.9 538,433.9 539,433.9 539,433.9 540,433.9 540,433.9 541,433.9 541,433.9 542,433.9 542,433.9 543,433.9 543,433.9 544,433.9 544,433.9 545,433.9 545,433.9 546,433.9 546,433.9 547,433.9 547,433.9 548,433.9 548,433.9 549,433.9 549,433.9 550,433.9 550,433.9 551,433.9 551,433.9 552,433.9 552,433.9 553,433.9 553,433.9 554,433.9 554,433.9 555,433.9 555,433.9 556,433.9 556,433.9 557,433.9 557,433.9 558,433.9 558,433.9 559,433.9 559,433.9 560,433.9 560,433.9 561,433.9 561,433.9 562,433.9 562,425.8 563,425.8 563,426.5 564,426.5 564,427.6 565,427.6 565,428.0 566,428.0 566,427.2 567,427.2 567,427.6 568,427.6 568,428.0 569,428.0 569,427.1 570,427.1 570,428.4 571,428.4 571,427.8 572,427.8 572,428.9 573,428.9 573,427.7 574,427.7 574,427.8 575,427.8 575,428.4 576,428.4 576,433.9 577,433.9 577,433.9 578,433.9 578,433.9 579,433.9 579,425.2 580,425.2 580,425.8 581,425.8 581,427.2 582,427.2 582,426.5 583,426.5 583,427.2 584,427.2 584,426.7 585,426.7 585,426.2 586,426.2 586,426.4 587,426.4 587,427.5 588,427.5 588,427.1 589,427.1 589,427.6 590,427.6 590,428.0 591,428.0 591,427.2 592,427.2 592,427.3 593,427.3 593,428.1 594,428.1 594,428.0 595,428.0 595,427.7 596,427.7 596,427.8 597,427.8 597,433.9 598,433.9 598,433.9 599,433.9 599,433.9 600,433.9 600,433.9 601,433.9 601,426.7 602,426.7 602,428.3 603,428.3 603,427.3 604,427.3 604,427.9 605,427.9 605,427.8 606,427.8 606,428.3 607,428.3 607,428.4 608,428.4 608,428.8 609,428.8 609,427.6 610,427.6 610,428.2 611,428.2 611,429.1 612,429.1 612,428.2 613,428.2 613,428.5 614,428.5 614,428.5 615,428.5 615,428.4 616,428.4 616,428.7 617,428.7 617,428.3 618,428.3 618,428.3 619,428.3 619,429.2 620,429.2 620,428.9 621,428.9 621,429.4 622,429.4 622,429.5 623,429.5 623,433.9 624,433.9 624,433.9 625,433.9 625,433.9 626,433.9 626,425.4 627,425.4 627,426.7 628,426.7 628,426.0 629,426.0 629,426.2 630,426.2 630,426.5 631,426.5 631,426.3 632,426.3 632,427.1 633,427.1 633,426.8 634,426.8 634,427.5 635,427.5 635,427.5 636,427.5 636,427.9 637,427.9 637,426.9 638,426.9 638,426.8 639,426.8 639,427.9 640,427.9 640,427.9 641,427.9 641,428.4 642,428.4 642,428.4 643,428.4 643,427.7 644,427.7 644,427.4 645,427.4 645,428.8 646,428.8 646,428.6 647,428.6 647,427.9 648,427.9 648,433.9 649,433.9 649,433.9 650,433.9 650,433.9 651,433.9 651,424.8 652,424.8 652,425.9 653,425.9 653,426.5 654,426.5 654,426.4 655,426.4 655,426.3 656,426.3 656,426.7 657,426.7 657,426.0 658,426.0 658,427.2 659,427.2 659,426.4 660,426.4 660,426.2 661,426.2 661,427.1 662,427.1 662,427.4 663,427.4 663,427.6 664,427.6 664,427.8 665,427.8 665,426.7 666,426.7 666,427.1 667,427.1 667,428.2 668,428.2 668,427.6 669,427.6 669,427.4 670,427.4 670,428.0 671,428.0 671,428.5 672,428.5 672,428.0 673,428.0 673,433.9 674,433.9 674,433.9 675,433.9 675,433.9 676,433.9 676,424.6 677,424.6 677,425.0 678,425.0 678,425.1 679,425.1 679,425.6 680,425.6 680,426.4 681,426.4 681,425.4 682,425.4 682,426.6 683,426.6 683,425.9 684,425.9 684,426.7 685,426.7 685,426.8 686,426.8 686,426.3 687,426.3 687,426.8 688,426.8 688,425.5 689,425.5 689,426.3 690,426.3 690,425.8 691,425.8 691,425.8 692,425.8 692,426.1 693,426.1 693,426.4 694,426.4 694,426.7 695,426.7 695,426.3 696,426.3 696,426.5 697,426.5 697,427.4 698,427.4 698,426.9 699,426.9 699,427.1 700,427.1 700,427.0 701,427.0 701,426.8 702,426.8 702,426.9 703,426.9 703,427.1 704,427.1 704,426.8 705,426.8 705,426.8 706,426.8 706,428.1 707,428.1 707,428.1 708,428.1 708,428.3 709,428.3 709,428.2 710,428.2 710,426.9 711,426.9 711,428.0 712,428.0 712,433.9 713,433.9 713,433.9 714,433.9 714,433.9 715,433.9 715,433.9 716,433.9 716,425.8 717,425.8 717,427.3 718,427.3 718,426.5 719,426.5 719,427.3 720,427.3 720,426.6 721,426.6 721,426.7 722,426.7 722,428.1 723,428.1 723,427.3 724,427.3 724,428.1 725,428.1 725,426.9 726,426.9 726,428.3 727,428.3 727,428.0 728,428.0 728,427.3 729,427.3 729,427.6 730,427.6 730,427.6 731,427.6 731,428.1 732,428.1 732,428.0 733,428.0 733,428.6 734,428.6 734,428.2 735,428.2 735,428.6 736,428.6 736,428.0 737,428.0 737,429.0 738,429.0 738,429.0 739,429.0 739,429.0 740,429.0 740,428.6 741,428.6 741,428.5 742,428.5 742,433.9 743,433.9 743,433.9 744,433.9 744,424.9 745,424.9 745,426.5 746,426.5 746,425.5 747,425.5 747,425.4 748,425.4 748,426.7 749,426.7 749,425.9 750,425.9 750,425.8 751,425.8 751,425.7 752,425.7 752,427.0 753,427.0 753,427.2 754,427.2 754,427.2 755,427.2 755,427.1 756,427.1 756,426.1 757,426.1 757,426.2 758,426.2 758,427.0 759,427.0 759,427.6 760,427.6 760,427.3 761,427.3 761,427.5 762,427.5 762,427.0 763,427.0 763,426.9 764,426.9 764,426.9 765,426.9 765,427.5 766,427.5 766,427.6 767,427.6 767,427.6 768,427.6 768,427.8 769,427.8 769,427.8 770,427.8 770,427.5 771,427.5 771,427.5 772,427.5 772,428.2 773,428.2 773,427.9 774,427.9 774,433.9 775,433.9 775,433.9 776,433.9 776,433.9 777,433.9 777,426.9 778,426.9 778,428.2 779,428.2 779,428.8 780,428.8 780,428.8 781,428.8 781,428.3 782,428.3 782,427.5 783,427.5 783,427.7 784,427.7 784,429.1 785,429.1 785,428.7 786,428.7 786,428.7 787,428.7 787,428.8 788,428.8 788,429.2 789,429.2 789,428.5 790,428.5 790,428.2 791,428.2 791,429.0 792,429.0 792,429.4 793,429.4 793,429.5 794,429.5 794,429.7 795,429.7 795,428.6 796,428.6 796,429.5 797,429.5 797,428.8 798,428.8 798,428.8 799,428.8 799,430.0 800,430.0 800,429.8 801,429.8 801,429.7 802,429.7 802,429.0 803,429.0 803,433.9 804,433.9 804,433.9 805,433.9 805,433.9 806,433.9 806,433.9 807,433.9 807,433.9 808,433.9 808,433.9 809,433.9 809,426.9 810,426.9 810,428.6 811,428.6 811,428.6 812,428.6 812,427.3 813,427.3 813,427.4 814,427.4 814,428.8 815,428.8 815,428.5 816,428.5 816,428.5 817,428.5 817,428.2 818,428.2 818,429.0 819,429.0 819,427.8 820,427.8 820,428.7 821,428.7 821,427.8 822,427.8 822,428.9 823,428.9 823,428.6 824,428.6 824,427.9 825,427.9 825,429.3 826,429.3 826,428.5 827,428.5 827,429.0 828,429.0 828,429.4 829,429.4 829,428.9 830,428.9 830,428.4 831,428.4 831,429.6 832,429.6 832,429.3 833,429.3 833,428.3 834,428.3 834,428.5 835,428.5 835,429.2 836,429.2 836,429.8 837,429.8 837,428.6 838,428.6 838,429.4 839,429.4 839,429.4 840,429.4 840,429.5 841,429.5 841,429.2 842,429.2 842,429.5 843,429.5 843,429.5 844,429.5 844,429.1 845,429.1 845,433.9 846,433.9 846,433.9 847,433.9 847,433.9 848,433.9 848,426.3 849,426.3 849,426.8 850,426.8 850,427.6 851,427.6 851,428.1 852,428.1 852,428.1 853,428.1 853,428.9 854,428.9 854,428.3 855,428.3 855,428.1 856,428.1 856,429.4 857,429.4 857,428.7 858,428.7 858,433.9 859,433.9 859,433.9 860,433.9 860,425.1 861,425.1 861,426.6 862,426.6 862,425.7 863,425.7 863,426.1 864,426.1 864,426.0 865,426.0 865,427.2 866,427.2 866,427.2 867,427.2 867,426.5 868,426.5 868,427.1 869,427.1 869,426.8 870,426.8 870,426.8 871,426.8 871,426.2 872,426.2 872,426.6 873,426.6 873,427.5 874,427.5 874,427.1 875,427.1 875,427.3 876,427.3 876,427.2 877,427.2 877,426.3 878,426.3 878,426.8 879,426.8 879,426.8 880,426.8 880,427.8 881,427.8 881,427.6 882,427.6 882,426.7 883,426.7 883,426.8 884,426.8 884,427.0 885,427.0 885,427.5 886,427.5 886,426.8 887,426.8 887,427.0 888,427.0 888,427.2 889,427.2 889,427.3 890,427.3 890,427.8 891,427.8 891,427.8 892,427.8 892,427.3 893,427.3 893,427.9 894,427.9 894,428.7 895,428.7 895,428.9 896,428.9 896,433.9 897,433.9 897,433.9 898,433.9 898,424.8 899,424.8 899,425.2 900,425.2 900,425.5 901,425.5 901,426.6 902,426.6 902,425.9 903,425.9 903,425.7 904,425.7 904,426.4 905,426.4 905,426.6 906,426.6 906,425.8 907,425.8 907,426.7 908,426.7 908,426.3 909,426.3 909,426.2 910,426.2 910,426.0 911,426.0 911,427.0 912,427.0 912,427.0 913,427.0 913,426.3 914,426.3 914,427.0 915,427.0 915,426.9 916,426.9 916,427.9 917,427.9 917,427.4 918,427.4 918,427.8 919,427.8 919,428.0 920,428.0 920,427.5 921,427.5 921,427.9 922,427.9 922,427.8 923,427.8 923,427.4 924,427.4 924,433.9 925,433.9 925,433.9 926,433.9 926,433.9 927,433.9 927,425.6 928,425.6 928,427.2 929,427.2 929,426.9 930,426.9 930,426.8 931,426.8 931,426.8 932,426.8 932,427.5 933,427.5 933,427.2 934,427.2 934,427.8 935,427.8 935,426.7 936,426.7 936,426.5 937,426.5 937,427.1 938,427.1 938,426.9 939,426.9 939,427.8 940,427.8 940,426.7 941,426.7 941,427.4 942,427.4 942,427.1 943,427.1 943,427.2 944,427.2 944,427.9 945,427.9 945,427.4 946,427.4 946,428.3 947,428.3 947,427.0 948,427.0 948,427.0 949,427.0 949,427.1 950,427.1 950,427.2 951,427.2 951,427.7 952,427.7 952,428.6 953,428.6 953,428.7 954,428.7 954,428.8 955,428.8 955,427.6 956,427.6 956,428.1 957,428.1 957,428.3 958,428.3 958,428.7 959,428.7 959,427.7 960,427.7 960,428.3 961,428.3 961,429.1 962,429.1 962,428.8 963,428.8 963,433.9 964,433.9 964,433.9 965,433.9 965,424.6 966,424.6 966,425.4 967,425.4 967,425.3 968,425.3 968,426.4 969,426.4 969,426.2 970,426.2 970,425.2 971,425.2 971,426.5 972,426.5 972,425.7 973,425.7 973,426.7 974,426.7 974,426.9 975,426.9 975,425.9 976,425.9 976,426.4 977,426.4 977,426.1 978,426.1 978,426.7 979,426.7 979,426.2 980,426.2 980,425.9 981,425.9 981,425.9 982,425.9 982,426.3 983,426.3 983,427.4 984,427.4 984,427.0 985,427.0 985,426.8 986,426.8 986,426.5 987,426.5 987,427.7 988,427.7 988,426.9 989,426.9 989,426.8 990,426.8 990,426.6 991,426.6 991,427.7 992,427.7 992,427.6 993,427.6 993,427.4 994,427.4 994,428.1 995,428.1 995,426.7 996,426.7 996,427.1 997,427.1 997,427.8 998,427.8 998,427.3 999,427.3 999,427.9 1000,427.9 1000,427.1 1001,427.1 1001,433.9 1002,433.9 1002,433.9 1003,433.9 1003,433.9 1004,433.9 1004,425.9 1005,425.9 1005,426.9 1006,426.9 1006,428.2 1007,428.2 1007,427.3 1008,427.3 1008,427.7 1009,427.7 1009,433.9 1010,433.9 1010,433.9 1011,433.9 1011,433.9 1012,433.9 1012,426.4 1013,426.4 1013,427.2 1014,427.2 1014,426.9 1015,426.9 1015,427.4 1016,427.4 1016,428.5 1017,428.5 1017,427.2 1018,427.2 1018,427.7 1019,427.7 1019,427.6 1020,427.6 1020,427.8 1021,427.8 1021,428.3 1022,428.3 1022,428.4 1023,428.4 1023,428.9 1024,428.9 1024,428.0 1025,428.0 1025,429.0 1026,429.0 1026,428.1 1027,428.1 1027,427.8 1028,427.8 1028,428.3 1029,428.3 1029,428.4 1030,428.4 1030,428.2 1031,428.2 1031,428.0 1032,428.0 1032,428.3 1033,428.3 1033,428.1 1034,428.1 1034,429.0 1035,429.0 1035,429.8 1036,429.8 1036,428.9 1037,428.9 1037,428.9 1038,428.9 1038,433.9 1039,433.9 1039,433.9 1040,433.9 1040,426.1 1041,426.1 1041,426.7 1042,426.7 1042,427.2 1043,427.2 1043,426.7 1044,426.7 1044,427.5 1045,427.5 1045,427.2 1046,427.2 1046,427.4 1047,427.4 1047,427.2 1048,427.2 1048,428.2 1049,428.2 1049,427.6 1050,427.6 1050,428.6 1051,428.6 1051,429.3 1052,429.3 1052,429.0 1053,429.0 1053,429.0 1054,429.0 1054,433.9 1055,433.9 1055,433.9 1056,433.9 1056,426.2 1057,426.2 1057,426.8 1058,426.8 1058,427.5 1059,427.5 1059,427.4 1060,427.4 1060,427.5 1061,427.5 1061,428.8 1062,428.8 1062,428.3 1063,428.3 1063,428.7 1064,428.7 1064,429.4 1065,429.4 1065,428.7 1066,428.7 1066,433.9 1067,433.9 1067,433.9 1068,433.9 1068,433.9 1069,433.9 1069,433.9 1070,433.9 1070,433.9 1071,433.9 1071,433.9 1072,433.9 1072,425.6 1073,425.6 1073,426.9 1074,426.9 1074,426.7 1075,426.7 1075,426.9 1076,426.9 1076,426.5 1077,426.5 1077,427.1 1078,427.1 1078,426.4 1079,426.4 1079,426.8 1080,426.8 1080,426.8 1081,426.8 1081,427.4 1082,427.4 1082,427.4 1083,427.4 1083,426.7 1084,426.7 1084,426.6 1085,426.6 1085,427.0 1086,427.0 1086,427.0 1087,427.0 1087,426.8 1088,426.8 1088,428.2 1089,428.2 1089,428.0 1090,428.0 1090,427.9 1091,427.9 1091,428.1 1092,428.1 1092,428.3 1093,428.3 1093,428.6 1094,428.6 1094,427.5 1095,427.5 1095,428.0 1096,428.0 1096,428.0 1097,428.0 1097,427.7 1098,427.7 1098,428.9 1099,428.9 1099,428.4 1100,428.4 1100,428.5 1101,428.5 1101,428.7 1102,428.7 1102,433.9 1103,433.9 1103,433.9 1104,433.9 1104,433.9 1105,433.9 1105,424.6 1106,424.6 1106,426.2 1107,426.2 1107,426.2 1108,426.2 1108,426.9 1109,426.9 1109,433.9 1110,433.9 1110,433.9 1111,433.9 1111,426.8 1112,426.8 1112,427.9 1113,427.9 1113,428.0 1114,428.0 1114,427.3 1115,427.3 1115,427.2 1116,427.2 1116,427.9 1117,427.9 1117,428.5 1118,428.5 1118,427.7 1119,427.7 1119,427.8 1120,427.8 1120,427.5 1121,427.5 1121,428.5 1122,428.5 1122,428.1 1123,428.1 1123,427.8 1124,427.8 1124,428.4 1125,428.4 1125,428.4 1126,428.4 1126,428.2 1127,428.2 1127,429.0 1128,429.0 1128,428.2 1129,428.2 1129,428.5 1130,428.5 1130,428.1 1131,428.1 1131,429.3 1132,429.3 1132,428.2 1133,428.2 1133,428.4 1134,428.4 1134,428.5 1135,428.5 1135,428.3 1136,428.3 1136,428.9 1137,428.9 1137,429.1 1138,429.1 1138,429.4 1139,429.4 1139,428.8 1140,428.8 1140,429.9 1141,429.9 1141,429.2 1142,429.2 1142,428.4 1143,428.4 1143,429.5 1144,429.5 1144,429.8 1145,429.8 1145,429.5 1146,429.5 1146,429.0 1147,429.0 1147,433.9 1148,433.9 1148,433.9 1149,433.9 1149,426.0 1150,426.0 1150,427.4 1151,427.4 1151,427.5 1152,427.5 1152,426.6 1153,426.6 1153,427.5 1154,427.5 1154,426.9 1155,426.9 1155,427.6 1156,427.6 1156,428.0 1157,428.0 1157,428.3 1158,428.3 1158,426.9 1159,426.9 1159,427.3 1160,427.3 1160,427.0 1161,427.0 1161,427.7 1162,427.7 1162,428.6 1163,428.6 1163,428.5 1164,428.5 1164,428.8 1165,428.8 1165,427.9 1166,427.9 1166,428.0 1167,428.0 1167,427.5 1168,427.5 1168,428.7 1169,428.7 1169,428.8 1170,428.8 1170,428.9 1171,428.9 1171,429.1 1172,429.1 1172,429.4 1173,429.4 1173,428.7 1174,428.7 1174,428.9 1175,428.9 1175,433.9 1176,433.9 1176,433.9 1177,433.9 1177,433.9 1178,433.9 1178,424.6 1179,424.6 1179,425.7 1180,425.7 1180,426.7 1181,426.7 1181,427.9 1182,427.9 1182,433.9 1183,433.9 1183,433.9 1184,433.9 1184,425.5 1185,425.5 1185,427.3 1186,427.3 1186,426.4 1187,426.4 1187,427.3 1188,427.3 1188,426.8 1189,426.8 1189,426.7 1190,426.7 1190,427.0 1191,427.0 1191,427.9 1192,427.9 1192,428.2 1193,428.2 1193,427.0 1194,427.0 1194,427.2 1195,427.2 1195,427.4 1196,427.4 1196,428.1 1197,428.1 1197,429.1 1198,429.1 1198,433.9 1199,433.9 1199,433.9 1200,433.9 1200,433.9 1201,433.9 1201,426.8 1202,426.8 1202,428.6 1203,428.6 1203,427.3 1204,427.3 1204,428.2 1205,428.2 1205,428.7 1206,428.7 1206,428.3 1207,428.3 1207,428.6 1208,428.6 1208,428.3 1209,428.3 1209,428.1 1210,428.1 1210,428.1 1211,428.1 1211,429.0 1212,429.0 1212,428.4 1213,428.4 1213,429.2 1214,429.2 1214,428.6 1215,428.6 1215,428.1 1216,428.1 1216,429.0 1217,429.0 1217,428.2 1218,428.2 1218,429.2 1219,429.2 1219,429.0 1220,429.0 1220,428.4 1221,428.4 1221,429.7 1222,429.7 1222,428.9 1223,428.9 1223,429.0 1224,429.0 1224,428.8 1225,428.8 1225,428.4 1226,428.4 1226,428.9 1227,428.9 1227,429.7 1228,429.7 1228,429.8 1229,429.8 1229,429.4 1230,429.4 1230,429.8 1231,429.8 1231,433.9 1232,433.9 1232,433.9 1233,433.9 1233,425.7 1234,425.7 1234,426.2 1235,426.2 1235,426.9 1236,426.9 1236,427.7 1237,427.7 1237,426.9 1238,426.9 1238,427.2 1239,427.2 1239,426.9 1240,426.9 1240,426.6 1241,426.6 1241,427.9 1242,427.9 1242,428.2 1243,428.2 1243,427.7 1244,427.7 1244,427.6 1245,427.6 1245,427.0 1246,427.0 1246,428.3 1247,428.3 1247,428.0 1248,428.0 1248,428.3 1249,428.3 1249,427.6 1250,427.6 1250,427.7 1251,427.7 1251,428.5 1252,428.5 1252,427.7 1253,427.7 1253,429.3 1254,429.3 1254,428.9 1255,428.9 1255,433.9 1256,433.9 1256,433.9 1257,433.9 1257,425.4 1258,425.4 1258,425.9 1259,425.9 1259,427.1 1260,427.1 1260,426.9 1261,426.9 1261,427.2 1262,427.2 1262,426.7 1263,426.7 1263,427.5 1264,427.5 1264,426.2 1265,426.2 1265,426.6 1266,426.6 1266,426.4 1267,426.4 1267,427.0 1268,427.0 1268,426.4 1269,426.4 1269,426.5 1270,426.5 1270,426.6 1271,426.6 1271,426.7 1272,426.7 1272,427.7 1273,427.7 1273,427.5 1274,427.5 1274,428.1 1275,428.1 1275,427.0 1276,427.0 1276,427.5 1277,427.5 1277,426.7 1278,426.7 1278,427.9 1279,427.9 1279,427.7 1280,427.7 1280,427.1 1281,427.1 1281,427.0 1282,427.0 1282,427.4 1283,427.4 1283,427.2 1284,427.2 1284,427.2 1285,427.2 1285,428.3 1286,428.3 1286,427.8 1287,427.8 1287,428.8 1288,428.8 1288,427.9 1289,427.9 1289,427.5 1290,427.5 1290,428.2 1291,428.2 1291,428.9 1292,428.9 1292,428.3 1293,428.3 1293,433.9 1294,433.9 1294,433.9 1295,433.9 1295,425.8 1296,425.8 1296,427.1 1297,427.1 1297,426.6 1298,426.6 1298,426.9 1299,426.9 1299,426.8 1300,426.8 1300,427.6 1301,427.6 1301,427.8 1302,427.8 1302,428.5 1303,428.5 1303,427.5 1304,427.5 1304,428.0 1305,428.0 1305,428.4 1306,428.4 1306,428.9 1307,428.9 1307,428.6 1308,428.6 1308,429.3 1309,429.3 1309,433.9 1310,433.9 1310,433.9 1311,433.9 1311,426.8 1312,426.8 1312,428.8 1313,428.8 1313,428.1 1314,428.1 1314,428.9 1315,428.9 1315,433.9 1316,433.9 1316,433.9 1317,433.9 1317,433.9 1318,433.9 1318,433.9 1319,433.9 1319,425.3 1320,425.3 1320,426.1 1321,426.1 1321,427.1 1322,427.1 1322,427.1 1323,427.1 1323,433.9 1324,433.9 1324,433.9 1325,433.9 1325,426.9 1326,426.9 1326,428.4 1327,428.4 1327,428.2 1328,428.2 1328,428.4 1329,428.4 1329,433.9 1330,433.9 1330,433.9 1331,433.9 1331,426.4 1332,426.4 1332,427.3 1333,427.3 1333,427.7 1334,427.7 1334,426.9 1335,426.9 1335,428.1 1336,428.1 1336,428.2 1337,428.2 1337,428.6 1338,428.6 1338,428.7 1339,428.7 1339,427.5 1340,427.5 1340,427.5 1341,427.5 1341,428.7 1342,428.7 1342,429.0 1343,429.0 1343,428.2 1344,428.2 1344,428.8 1345,428.8 1345,428.3 1346,428.3 1346,427.9 1347,427.9 1347,428.3 1348,428.3 1348,429.1 1349,429.1 1349,428.6 1350,428.6 1350,429.2 1351,429.2 1351,428.6 1352,428.6 1352,429.4 1353,429.4 1353,433.9 1354,433.9 1354,433.9 1355,433.9 1355,433.9 1356,433.9 1356,433.9 1357,433.9 1357,433.9 1358,433.9 1358,433.9 1359,433.9 1359,424.8 1360,424.8 1360,425.1 1361,425.1 1361,425.8 1362,425.8 1362,426.4 1363,426.4 1363,425.8 1364,425.8 1364,426.4 1365,426.4 1365,426.8 1366,426.8 1366,427.0 1367,427.0 1367,426.2 1368,426.2 1368,426.8 1369,426.8 1369,427.1 1370,427.1 1370,426.1 1371,426.1 1371,427.2 1372,427.2 1372,426.3 1373,426.3 1373,427.2 1374,427.2 1374,427.1 1375,427.1 1375,426.2 1376,426.2 1376,426.5 1377,426.5 1377,426.5 1378,426.5 1378,426.4 1379,426.4 1379,427.1 1380,427.1 1380,426.6 1381,426.6 1381,427.2 1382,427.2 1382,427.3 1383,427.3 1383,427.8 1384,427.8 1384,427.8 1385,427.8 1385,427.6 1386,427.6 1386,428.1 1387,428.1 1387,427.6 1388,427.6 1388,427.3 1389,427.3 1389,433.9 1390,433.9 1390,433.9 1391,433.9 1391,433.9 1392,433.9 1392,433.9 1393,433.9 1393,433.9 1394,433.9 1394,433.9 1395,433.9 1395,425.3 1396,425.3 1396,427.0 1397,427.0 1397,427.1 1398,427.1 1398,426.1 1399,426.1 1399,426.9 1400,426.9 1400,426.1 1401,426.1 1401,426.2 1402,426.2 1402,427.6 1403,427.6 1403,427.4 1404,427.4 1404,426.5 1405,426.5 1405,426.9 1406,426.9 1406,427.4 1407,427.4 1407,427.0 1408,427.0 1408,427.5 1409,427.5 1409,427.9 1410,427.9 1410,426.7 1411,426.7 1411,428.2 1412,428.2 1412,427.7 1413,427.7 1413,426.9 1414,426.9 1414,427.7 1415,427.7 1415,427.0 1416,427.0 1416,427.6 1417,427.6 1417,427.5 1418,427.5 1418,427.6 1419,427.6 1419,427.4 1420,427.4 1420,428.8 1421,428.8 1421,427.8 1422,427.8 1422,428.7 1423,428.7 1423,427.9 1424,427.9 1424,428.2 1425,428.2 1425,433.9 1426,433.9 1426,433.9 1427,433.9 1427,433.9 1428,433.9 1428,433.9 1429,433.9 1429,433.9 1430,433.9 1430,433.9 1431,433.9 1431,425.8 1432,425.8 1432,427.2 1433,427.2 1433,427.5 1434,427.5 1434,427.9 1435,427.9 1435,428.7 1436,428.7 1436,433.9 1437,433.9 1437,433.9 1438,433.9 1438,425.5 1439,425.5 1439,426.1 1440,426.1 1440,426.9 1441,426.9 1441,426.8 1442,426.8 1442,426.8 1443,426.8 1443,426.4 1444,426.4 1444,426.4 1445,426.4 1445,427.4 1446,427.4 1446,426.2 1447,426.2 1447,426.2 1448,426.2 1448,427.0 1449,427.0 1449,426.3 1450,426.3 1450,426.9 1451,426.9 1451,427.4 1452,427.4 1452,427.9 1453,427.9 1453,428.1 1454,428.1 1454,427.2 1455,427.2 1455,427.1 1456,427.1 1456,427.3 1457,427.3 1457,427.1 1458,427.1 1458,427.7 1459,427.7 1459,427.2 1460,427.2 1460,427.5 1461,427.5 1461,427.5 1462,427.5 1462,427.7 1463,427.7 1463,427.6 1464,427.6 1464,427.8 1465,427.8 1465,428.6 1466,428.6 1466,427.7 1467,427.7 1467,427.8 1468,427.8 1468,428.2 1469,428.2 1469,427.4 1470,427.4 1470,428.3 1471,428.3 1471,428.8 1472,428.8 1472,428.3 1473,428.3 1473,428.6 1474,428.6 1474,433.9 1475,433.9 1475,433.9 1476,433.9 1476,433.9 1477,433.9 1477,424.8 1478,424.8 1478,425.6 1479,425.6 1479,426.5 1480,426.5 1480,426.1 1481,426.1 1481,425.5 1482,425.5 1482,427.0 1483,427.0 1483,425.9 1484,425.9 1484,427.4 1485,427.4 1485,426.0 1486,426.0 1486,426.2 1487,426.2 1487,427.1 1488,427.1 1488,426.1 1489,426.1 1489,426.3 1490,426.3 1490,426.0 1491,426.0 1491,426.6 1492,426.6 1492,426.8 1493,426.8 1493,426.7 1494,426.7 1494,426.9 1495,426.9 1495,427.0 1496,427.0 1496,427.1 1497,427.1 1497,427.4 1498,427.4 1498,427.3 1499,427.3 1499,427.7 1500,427.7 1500,427.5 1501,427.5 1501,427.8 1502,427.8 1502,427.9 1503,427.9 1503,427.7 1504,427.7 1504,428.1 1505,428.1 1505,428.0 1506,428.0 1506,428.6 1507,428.6 1507,428.3 1508,428.3 1508,428.9 1509,428.9 1509,429.0 1510,429.0 1510,428.6 1511,428.6 1511,429.1 1512,429.1 1512,429.0 1513,429.0 1513,429.5 1514,429.5 1514,429.4 1515,429.4 1515,429.4 1516,429.4 1516,429.8 1517,429.8 1517,429.8 1518,429.8 1518,429.7 1519,429.7 1519,430.2 1520,430.2 1520,430.3 1521,430.3 1521,430.6 1522,430.6 1522,430.3 1523,430.3 1523,430.5 1524,430.5 1524,430.5 1525,430.5 1525,430.6 1526,430.6 1526,430.9 1527,430.9 1527,430.9 1528,430.9 1528,431.0 1529,431.0 1529,431.2 1530,431.2 1530,431.3 1531,431.3 1531,431.5 1532,431.5 1532,431.7 1533,431.7 1533,432.0 1534,432.0 1534,432.2 1535,432.2 1535,432.2 1536,432.2 1536,432.2 1537,432.2 1537,432.5 1538,432.5 1538,432.4 1539,432.4 1539,432.5 1540,432.5 1540,432.5 1541,432.5 1541,432.8 1542,432.8 1542,432.8 1543,432.8 1543,433.2 1544,433.2 1544,433.3 1545,433.3 1545,433.3 1546,433.3 1546,433.8 1547,433.8 1547,433.8 1548,433.8 1548,433.8 1549,433.8 1549,433.9 1550,433.9 1550,433.9 1551,433.9 1551,433.9 1552,433.9 1552,433.9 1553,433.9 1553,433.9 1554,433.9 1554,433.9 1555,433.9 1555,433.9 1556,433.9 1556,433.9 1557,433.9 1557,424.6 1558,424.6 1558,426.2 1559,426.2 1559,426.8 1560,426.8 1560,426.5 1561,426.5 1561,427.2 1562,427.2 1562,433.9 1563,433.9 1563,433.9 1564,433.9 1564,433.9 1565,433.9 1565,433.9 1566,433.9 1566,427.0 1567,427.0 1567,428.5 1568,428.5 1568,429.3 1569,429.3 1569,428.4 1570,428.4 1570,433.9 1571,433.9 1571,433.9 1572,433.9 1572,433.9 1573,433.9 1573,433.9 1574,433.9 1574,433.9 1575,433.9 1575,433.9 1576,433.9 1576,426.1 1577,426.1 1577,427.1 1578,427.1 1578,426.6 1579,426.6 1579,427.7 1580,427.7 1580,427.6 1581,427.6 1581,427.4 1582,427.4 1582,427.5 1583,427.5 1583,428.0 1584,428.0 1584,428.0 1585,428.0 1585,427.8 1586,427.8 1586,427.0 1587,427.0 1587,427.8 1588,427.8 1588,427.5 1589,427.5 1589,427.6 1590,427.6 1590,427.2 1591,427.2 1591,428.4 1592,428.4 1592,427.8 1593,427.8 1593,427.7 1594,427.7 1594,427.7 1595,427.7 1595,428.3 1596,428.3 1596,428.3 1597,428.3 1597,427.4 1598,427.4 1598,428.3 1599,428.3 1599,427.5 1600,427.5 1600,428.2 1601,428.2 1601,428.2 1602,428.2 1602,428.7 1603,428.7 1603,427.7 1604,427.7 1604,428.7 1605,428.7 1605,428.8 1606,428.8 1606,429.2 1607,429.2 1607,428.1 1608,428.1 1608,428.9 1609,428.9 1609,429.3 1610,429.3 1610,429.4 1611,429.4 1611,429.4 1612,429.4 1612,433.9 1613,433.9 1613,433.9 1614,433.9 1614,433.9 1615,433.9 1615,427.0 1616,427.0 1616,427.5 1617,427.5 1617,428.5 1618,428.5 1618,428.9 1619,428.9 1619,428.8 1620,428.8 1620,428.3 1621,428.3 1621,427.9 1622,427.9 1622,429.2 1623,429.2 1623,429.1 1624,429.1 1624,429.4 1625,429.4 1625,429.4 1626,429.4 1626,429.1 1627,429.1 1627,428.9 1628,428.9 1628,428.2 1629,428.2 1629,428.8 1630,428.8 1630,428.5 1631,428.5 1631,429.0 1632,429.0 1632,428.6 1633,428.6 1633,429.0 1634,429.0 1634,429.8 1635,429.8 1635,429.7 1636,429.7 1636,429.6 1637,429.6 1637,433.9 1638,433.9 1638,433.9 1639,433.9 1639,424.7 1640,424.7 1640,426.4 1641,426.4 1641,426.1 1642,426.1 1642,425.9 1643,425.9 1643,426.9 1644,426.9 1644,426.7 1645,426.7 1645,427.7 1646,427.7 1646,427.6 1647,427.6 1647,428.0 1648,428.0 1648,427.7 1649,427.7 1649,433.9 1650,433.9 1650,433.9 1651,433.9 1651,433.9 1652,433.9 1652,433.9 1653,433.9 1653,433.9 1654,433.9 1654,433.9 1655,433.9 1655,426.4 1656,426.4 1656,427.4 1657,427.4 1657,427.2 1658,427.2 1658,426.9 1659,426.9 1659,428.0 1660,428.0 1660,427.0 1661,427.0 1661,428.0 1662,428.0 1662,428.0 1663,428.0 1663,428.6 1664,428.6 1664,428.8 1665,428.8 1665,428.0 1666,428.0 1666,429.0 1667,429.0 1667,429.1 1668,429.1 1668,429.1 1669,429.1 1669,428.5 1670,428.5 1670,429.1 1671,429.1 1671,429.1 1672,429.1 1672,428.4 1673,428.4 1673,429.0 1674,429.0 1674,429.5 1675,429.5 1675,428.8 1676,428.8 1676,428.3 1677,428.3 1677,433.9 1678,433.9 1678,433.9 1679,433.9 1679,425.9 1680,425.9 1680,426.6 1681,426.6 1681,426.5 1682,426.5 1682,426.6 1683,426.6 1683,427.5 1684,427.5 1684,426.8 1685,426.8 1685,427.9 1686,427.9 1686,427.9 1687,427.9 1687,427.4 1688,427.4 1688,428.0 1689,428.0 1689,427.4 1690,427.4 1690,427.9 1691,427.9 1691,426.9 1692,426.9 1692,427.8 1693,427.8 1693,427.3 1694,427.3 1694,427.1 1695,427.1 1695,428.0 1696,428.0 1696,427.5 1697,427.5 1697,428.0 1698,428.0 1698,428.3 1699,428.3 1699,428.8 1700,428.8 1700,428.0 1701,428.0 1701,427.6 1702,427.6 1702,428.0 1703,428.0 1703,428.7 1704,428.7 1704,428.4 1705,428.4 1705,428.8 1706,428.8 1706,428.8 1707,428.8 1707,428.2 1708,428.2 1708,429.5 1709,429.5 1709,433.9 1710,433.9 1710,433.9 1711,433.9 1711,433.9 1712,433.9 1712,433.9 1713,433.9 1713,425.7 1714,425.7 1714,426.4 1715,426.4 1715,427.2 1716,427.2 1716,427.0 1717,427.0 1717,427.3 1718,427.3 1718,426.8 1719,426.8 1719,427.2 1720,427.2 1720,426.8 1721,426.8 1721,427.3 1722,427.3 1722,426.8 1723,426.8 1723,427.2 1724,427.2 1724,427.9 1725,427.9 1725,427.4 1726,427.4 1726,427.8 1727,427.8 1727,427.8 1728,427.8 1728,426.8 1729,426.8 1729,427.6 1730,427.6 1730,427.3 1731,427.3 1731,428.2 1732,428.2 1732,427.5 1733,427.5 1733,428.4 1734,428.4 1734,428.3 1735,428.3 1735,428.5 1736,428.5 1736,428.7 1737,428.7 1737,427.4 1738,427.4 1738,427.3 1739,427.3 1739,428.3 1740,428.3 1740,429.0 1741,429.0 1741,427.9 1742,427.9 1742,428.0 1743,428.0 1743,429.1 1744,429.1 1744,428.0 1745,428.0 1745,429.1 1746,429.1 1746,428.9 1747,428.9 1747,428.1 1748,428.1 1748,428.2 1749,428.2 1749,433.9 1750,433.9 1750,433.9 1751,433.9 1751,433.9 1752,433.9 1752,425.7 1753,425.7 1753,427.0 1754,427.0 1754,427.5 1755,427.5 1755,428.4 1756,428.4 1756,429.0 1757,429.0 1757,433.9 1758,433.9 1758,433.9 1759,433.9 1759,433.9 1760,433.9 1760,425.7 1761,425.7 1761,426.8 1762,426.8 1762,426.6 1763,426.6 1763,426.7 1764,426.7 1764,426.7 1765,426.7 1765,427.1 1766,427.1 1766,426.5 1767,426.5 1767,427.0 1768,427.0 1768,426.5 1769,426.5 1769,426.4 1770,426.4 1770,426.7 1771,426.7 1771,426.9 1772,426.9 1772,427.0 1773,427.0 1773,427.3 1774,427.3 1774,427.9 1775,427.9 1775,428.1 1776,428.1 1776,427.3 1777,427.3 1777,428.0 1778,428.0 1778,427.5 1779,427.5 1779,427.6 1780,427.6 1780,427.6 1781,427.6 1781,427.9 1782,427.9 1782,428.3 1783,428.3 1783,428.3 1784,428.3 1784,427.7 1785,427.7 1785,427.4 1786,427.4 1786,428.4 1787,428.4 1787,428.5 1788,428.5 1788,428.3 1789,428.3 1789,428.4 1790,428.4 1790,428.1 1791,428.1 1791,428.0 1792,428.0 1792,428.0 1793,428.0 1793,428.0 1794,428.0 1794,428.2 1795,428.2 1795,427.8 1796,427.8 1796,433.9 1797,433.9 1797,433.9 1798,433.9 1798,433.9 1799,433.9 1799,433.9 1800,433.9 1800,425.7 1801,425.7 1801,427.6 1802,427.6 1802,427.9 1803,427.9 1803,428.3 1804,428.3 1804,427.8 1805,427.8 1805,433.9 1806,433.9 1806,433.9 1807,433.9 1807,433.9 1808,433.9 1808,433.9 1809,433.9 1809,426.3 1810,426.3 1810,427.2 1811,427.2 1811,427.5 1812,427.5 1812,427.2 1813,427.2 1813,428.5 1814,428.5 1814,427.1 1815,427.1 1815,428.7 1816,428.7 1816,427.9 1817,427.9 1817,427.9 1818,427.9 1818,428.2 1819,428.2 1819,429.1 1820,429.1 1820,428.0 1821,428.0 1821,429.1 1822,429.1 1822,428.7 1823,428.7 1823,433.9 1824,433.9 1824,433.9 1825,433.9 1825,424.7 1826,424.7 1826,425.4 1827,425.4 1827,426.4 1828,426.4 1828,426.3 1829,426.3 1829,425.7 1830,425.7 1830,425.9 1831,425.9 1831,425.6 1832,425.6 1832,426.4 1833,426.4 1833,426.0 1834,426.0 1834,425.7 1835,425.7 1835,426.4 1836,426.4 1836,426.4 1837,426.4 1837,426.6 1838,426.6 1838,426.9 1839,426.9 1839,427.1 1840,427.1 1840,427.7 1841,427.7 1841,427.0 1842,427.0 1842,426.5 1843,426.5 1843,427.2 1844,427.2 1844,426.9 1845,426.9 1845,428.1 1846,428.1 1846,426.9 1847,426.9 1847,427.8 1848,427.8 1848,427.7 1849,427.7 1849,427.0 1850,427.0 1850,428.1 1851,428.1 1851,433.9 1852,433.9 1852,433.9 1853,433.9 1853,433.9 1854,433.9 1854,424.8 1855,424.8 1855,426.5 1856,426.5 1856,425.8 1857,425.8 1857,426.4 1858,426.4 1858,426.0 1859,426.0 1859,426.6 1860,426.6 1860,427.0 1861,427.0 1861,426.3 1862,426.3 1862,426.5 1863,426.5 1863,426.1 1864,426.1 1864,427.0 1865,427.0 1865,426.8 1866,426.8 1866,426.5 1867,426.5 1867,426.8 1868,426.8 1868,426.5 1869,426.5 1869,426.4 1870,426.4 1870,427.6 1871,427.6 1871,427.3 1872,427.3 1872,427.4 1873,427.4 1873,426.9 1874,426.9 1874,426.5 1875,426.5 1875,427.0 1876,427.0 1876,427.1 1877,427.1 1877,428.0 1878,428.0 1878,427.7 1879,427.7 1879,427.8 1880,427.8 1880,428.4 1881,428.4 1881,428.4 1882,428.4 1882,428.2 1883,428.2 1883,428.1 1884,428.1 1884,433.9 1885,433.9 1885,433.9 1886,433.9 1886,433.9 1887,433.9 1887,426.2 1888,426.2 1888,427.9 1889,427.9 1889,427.2 1890,427.2 1890,428.0 1891,428.0 1891,441.0 1890,441.0 1890,441.8 1889,441.8 1889,441.1 1888,441.1 1888,442.8 1887,442.8 1887,435.1 1886,435.1 1886,435.1 1885,435.1 1885,435.1 1884,435.1 1884,440.9 1883,440.9 1883,440.8 1882,440.8 1882,440.6 1881,440.6 1881,440.6 1880,440.6 1880,441.2 1879,441.2 1879,441.3 1878,441.3 1878,441.0 1877,441.0 1877,441.9 1876,441.9 1876,442.0 1875,442.0 1875,442.5 1874,442.5 1874,442.1 1873,442.1 1873,441.6 1872,441.6 1872,441.7 1871,441.7 1871,441.4 1870,441.4 1870,442.6 1869,442.6 1869,442.5 1868,442.5 1868,442.2 1867,442.2 1867,442.5 1866,442.5 1866,442.2 1865,442.2 1865,442.0 1864,442.0 1864,442.9 1863,442.9 1863,442.5 1862,442.5 1862,442.7 1861,442.7 1861,442.0 1860,442.0 1860,442.4 1859,442.4 1859,443.0 1858,443.0 1858,442.6 1857,442.6 1857,443.2 1856,443.2 1856,442.5 1855,442.5 1855,444.2 1854,444.2 1854,435.1 1853,435.1 1853,435.1 1852,435.1 1852,435.1 1851,435.1 1851,440.9 1850,440.9 1850,442.0 1849,442.0 1849,441.3 1848,441.3 1848,441.2 1847,441.2 1847,442.1 1846,442.1 1846,440.9 1845,440.9 1845,442.1 1844,442.1 1844,441.8 1843,441.8 1843,442.5 1842,442.5 1842,442.0 1841,442.0 1841,441.3 1840,441.3 1840,441.9 1839,441.9 1839,442.1 1838,442.1 1838,442.4 1837,442.4 1837,442.6 1836,442.6 1836,442.6 1835,442.6 1835,443.3 1834,443.3 1834,443.0 1833,443.0 1833,442.6 1832,442.6 1832,443.4 1831,443.4 1831,443.1 1830,443.1 1830,443.3 1829,443.3 1829,442.7 1828,442.7 1828,442.6 1827,442.6 1827,443.6 1826,443.6 1826,444.3 1825,444.3 1825,435.1 1824,435.1 1824,435.1 1823,435.1 1823,440.3 1822,440.3 1822,439.9 1821,439.9 1821,441.0 1820,441.0 1820,439.9 1819,439.9 1819,440.8 1818,440.8 1818,441.1 1817,441.1 1817,441.1 1816,441.1 1816,440.3 1815,440.3 1815,441.9 1814,441.9 1814,440.5 1813,440.5 1813,441.8 1812,441.8 1812,441.5 1811,441.5 1811,441.8 1810,441.8 1810,442.7 1809,442.7 1809,435.1 1808,435.1 1808,435.1 1807,435.1 1807,435.1 1806,435.1 1806,435.1 1805,435.1 1805,441.2 1804,441.2 1804,440.7 1803,440.7 1803,441.1 1802,441.1 1802,441.4 1801,441.4 1801,443.3 1800,443.3 1800,435.1 1799,435.1 1799,435.1 1798,435.1 1798,435.1 1797,435.1 1797,435.1 1796,435.1 1796,441.2 1795,441.2 1795,440.8 1794,440.8 1794,441.0 1793,441.0 1793,441.0 1792,441.0 1792,441.0 1791,441.0 1791,440.9 1790,440.9 1790,440.6 1789,440.6 1789,440.7 1788,440.7 1788,440.5 1787,440.5 1787,440.6 1786,440.6 1786,441.6 1785,441.6 1785,441.3 1784,441.3 1784,440.7 1783,440.7 1783,440.7 1782,440.7 1782,441.1 1781,441.1 1781,441.4 1780,441.4 1780,441.4 1779,441.4 1779,441.5 1778,441.5 1778,441.0 1777,441.0 1777,441.7 1776,441.7 1776,440.9 1775,440.9 1775,441.1 1774,441.1 1774,441.7 1773,441.7 1773,442.0 1772,442.0 1772,442.1 1771,442.1 1771,442.3 1770,442.3 1770,442.6 1769,442.6 1769,442.5 1768,442.5 1768,442.0 1767,442.0 1767,442.5 1766,442.5 1766,441.9 1765,441.9 1765,442.3 1764,442.3 1764,442.3 1763,442.3 1763,442.4 1762,442.4 1762,442.2 1761,442.2 1761,443.3 1760,443.3 1760,435.1 1759,435.1 1759,435.1 1758,435.1 1758,435.1 1757,435.1 1757,440.0 1756,440.0 1756,440.6 1755,440.6 1755,441.5 1754,441.5 1754,442.0 1753,442.0 1753,443.3 1752,443.3 1752,435.1 1751,435.1 1751,435.1 1750,435.1 1750,435.1 1749,435.1 1749,440.8 1748,440.8 1748,440.9 1747,440.9 1747,440.1 1746,440.1 1746,439.9 1745,439.9 1745,441.0 1744,441.0 1744,439.9 1743,439.9 1743,441.0 1742,441.0 1742,441.1 1741,441.1 1741,440.0 1740,440.0 1740,440.7 1739,440.7 1739,441.7 1738,441.7 1738,441.6 1737,441.6 1737,440.3 1736,440.3 1736,440.5 1735,440.5 1735,440.7 1734,440.7 1734,440.6 1733,440.6 1733,441.5 1732,441.5 1732,440.8 1731,440.8 1731,441.7 1730,441.7 1730,441.4 1729,441.4 1729,442.2 1728,442.2 1728,441.2 1727,441.2 1727,441.2 1726,441.2 1726,441.6 1725,441.6 1725,441.1 1724,441.1 1724,441.8 1723,441.8 1723,442.2 1722,442.2 1722,441.7 1721,441.7 1721,442.2 1720,442.2 1720,441.8 1719,441.8 1719,442.2 1718,442.2 1718,441.7 1717,441.7 1717,442.0 1716,442.0 1716,441.8 1715,441.8 1715,442.6 1714,442.6 1714,443.3 1713,443.3 1713,435.1 1712,435.1 1712,435.1 1711,435.1 1711,435.1 1710,435.1 1710,435.1 1709,435.1 1709,439.5 1708,439.5 1708,440.8 1707,440.8 1707,440.2 1706,440.2 1706,440.2 1705,440.2 1705,440.6 1704,440.6 1704,440.3 1703,440.3 1703,441.0 1702,441.0 1702,441.4 1701,441.4 1701,441.0 1700,441.0 1700,440.2 1699,440.2 1699,440.7 1698,440.7 1698,441.0 1697,441.0 1697,441.5 1696,441.5 1696,441.0 1695,441.0 1695,441.9 1694,441.9 1694,441.7 1693,441.7 1693,441.2 1692,441.2 1692,442.1 1691,442.1 1691,441.1 1690,441.1 1690,441.6 1689,441.6 1689,441.0 1688,441.0 1688,441.6 1687,441.6 1687,441.1 1686,441.1 1686,441.1 1685,441.1 1685,442.2 1684,442.2 1684,441.5 1683,441.5 1683,442.4 1682,442.4 1682,442.5 1681,442.5 1681,442.4 1680,442.4 1680,443.1 1679,443.1 1679,435.1 1678,435.1 1678,435.1 1677,435.1 1677,440.7 1676,440.7 1676,440.2 1675,440.2 1675,439.5 1674,439.5 1674,440.0 1673,440.0 1673,440.6 1672,440.6 1672,439.9 1671,439.9 1671,439.9 1670,439.9 1670,440.5 1669,440.5 1669,439.9 1668,439.9 1668,439.9 1667,439.9 1667,440.0 1666,440.0 1666,441.0 1665,441.0 1665,440.2 1664,440.2 1664,440.4 1663,440.4 1663,441.0 1662,441.0 1662,441.0 1661,441.0 1661,442.0 1660,442.0 1660,441.0 1659,441.0 1659,442.1 1658,442.1 1658,441.8 1657,441.8 1657,441.6 1656,441.6 1656,442.6 1655,442.6 1655,435.1 1654,435.1 1654,435.1 1653,435.1 1653,435.1 1652,435.1 1652,435.1 1651,435.1 1651,435.1 1650,435.1 1650,435.1 1649,435.1 1649,441.3 1648,441.3 1648,441.0 1647,441.0 1647,441.4 1646,441.4 1646,441.3 1645,441.3 1645,442.3 1644,442.3 1644,442.1 1643,442.1 1643,443.1 1642,443.1 1642,442.9 1641,442.9 1641,442.6 1640,442.6 1640,444.3 1639,444.3 1639,435.1 1638,435.1 1638,435.1 1637,435.1 1637,439.4 1636,439.4 1636,439.3 1635,439.3 1635,439.2 1634,439.2 1634,440.0 1633,440.0 1633,440.4 1632,440.4 1632,440.0 1631,440.0 1631,440.5 1630,440.5 1630,440.2 1629,440.2 1629,440.8 1628,440.8 1628,440.1 1627,440.1 1627,439.9 1626,439.9 1626,439.6 1625,439.6 1625,439.6 1624,439.6 1624,439.9 1623,439.9 1623,439.8 1622,439.8 1622,441.1 1621,441.1 1621,440.7 1620,440.7 1620,440.2 1619,440.2 1619,440.1 1618,440.1 1618,440.5 1617,440.5 1617,441.5 1616,441.5 1616,442.0 1615,442.0 1615,435.1 1614,435.1 1614,435.1 1613,435.1 1613,435.1 1612,435.1 1612,439.6 1611,439.6 1611,439.6 1610,439.6 1610,439.7 1609,439.7 1609,440.1 1608,440.1 1608,440.9 1607,440.9 1607,439.8 1606,439.8 1606,440.2 1605,440.2 1605,440.3 1604,440.3 1604,441.3 1603,441.3 1603,440.3 1602,440.3 1602,440.8 1601,440.8 1601,440.8 1600,440.8 1600,441.5 1599,441.5 1599,440.7 1598,440.7 1598,441.6 1597,441.6 1597,440.7 1596,440.7 1596,440.7 1595,440.7 1595,441.3 1594,441.3 1594,441.3 1593,441.3 1593,441.2 1592,441.2 1592,440.6 1591,440.6 1591,441.8 1590,441.8 1590,441.4 1589,441.4 1589,441.5 1588,441.5 1588,441.2 1587,441.2 1587,442.0 1586,442.0 1586,441.2 1585,441.2 1585,441.0 1584,441.0 1584,441.0 1583,441.0 1583,441.5 1582,441.5 1582,441.6 1581,441.6 1581,441.4 1580,441.4 1580,441.3 1579,441.3 1579,442.4 1578,442.4 1578,441.9 1577,441.9 1577,442.9 1576,442.9 1576,435.1 1575,435.1 1575,435.1 1574,435.1 1574,435.1 1573,435.1 1573,435.1 1572,435.1 1572,435.1 1571,435.1 1571,435.1 1570,435.1 1570,440.6 1569,440.6 1569,439.7 1568,439.7 1568,440.5 1567,440.5 1567,442.0 1566,442.0 1566,435.1 1565,435.1 1565,435.1 1564,435.1 1564,435.1 1563,435.1 1563,435.1 1562,435.1 1562,441.8 1561,441.8 1561,442.5 1560,442.5 1560,442.2 1559,442.2 1559,442.8 1558,442.8 1558,444.4 1557,444.4 1557,435.1 1556,435.1 1556,435.1 1555,435.1 1555,435.1 1554,435.1 1554,435.1 1553,435.1 1553,435.1 1552,435.1 1552,435.1 1551,435.1 1551,435.1 1550,435.1 1550,435.1 1549,435.1 1549,435.2 1548,435.2 1548,435.2 1547,435.2 1547,435.2 1546,435.2 1546,435.7 1545,435.7 1545,435.7 1544,435.7 1544,435.8 1543,435.8 1543,436.2 1542,436.2 1542,436.2 1541,436.2 1541,436.5 1540,436.5 1540,436.5 1539,436.5 1539,436.6 1538,436.6 1538,436.5 1537,436.5 1537,436.8 1536,436.8 1536,436.8 1535,436.8 1535,436.8 1534,436.8 1534,437.0 1533,437.0 1533,437.3 1532,437.3 1532,437.5 1531,437.5 1531,437.7 1530,437.7 1530,437.8 1529,437.8 1529,438.0 1528,438.0 1528,438.1 1527,438.1 1527,438.1 1526,438.1 1526,438.4 1525,438.4 1525,438.5 1524,438.5 1524,438.5 1523,438.5 1523,438.7 1522,438.7 1522,438.4 1521,438.4 1521,438.7 1520,438.7 1520,438.8 1519,438.8 1519,439.3 1518,439.3 1518,439.2 1517,439.2 1517,439.2 1516,439.2 1516,439.6 1515,439.6 1515,439.6 1514,439.6 1514,439.5 1513,439.5 1513,440.0 1512,440.0 1512,439.9 1511,439.9 1511,440.4 1510,440.4 1510,440.0 1509,440.0 1509,440.1 1508,440.1 1508,440.7 1507,440.7 1507,440.4 1506,440.4 1506,441.0 1505,441.0 1505,440.9 1504,440.9 1504,441.3 1503,441.3 1503,441.1 1502,441.1 1502,441.2 1501,441.2 1501,441.5 1500,441.5 1500,441.3 1499,441.3 1499,441.7 1498,441.7 1498,441.6 1497,441.6 1497,441.9 1496,441.9 1496,442.0 1495,442.0 1495,442.1 1494,442.1 1494,442.3 1493,442.3 1493,442.2 1492,442.2 1492,442.4 1491,442.4 1491,443.0 1490,443.0 1490,442.7 1489,442.7 1489,442.9 1488,442.9 1488,441.9 1487,441.9 1487,442.8 1486,442.8 1486,443.0 1485,443.0 1485,441.6 1484,441.6 1484,443.1 1483,443.1 1483,442.0 1482,442.0 1482,443.5 1481,443.5 1481,442.9 1480,442.9 1480,442.5 1479,442.5 1479,443.4 1478,443.4 1478,444.2 1477,444.2 1477,435.1 1476,435.1 1476,435.1 1475,435.1 1475,435.1 1474,435.1 1474,440.4 1473,440.4 1473,440.7 1472,440.7 1472,440.2 1471,440.2 1471,440.7 1470,440.7 1470,441.6 1469,441.6 1469,440.8 1468,440.8 1468,441.2 1467,441.2 1467,441.3 1466,441.3 1466,440.4 1465,440.4 1465,441.2 1464,441.2 1464,441.4 1463,441.4 1463,441.3 1462,441.3 1462,441.5 1461,441.5 1461,441.5 1460,441.5 1460,441.8 1459,441.8 1459,441.3 1458,441.3 1458,441.9 1457,441.9 1457,441.7 1456,441.7 1456,441.9 1455,441.9 1455,441.8 1454,441.8 1454,440.9 1453,440.9 1453,441.1 1452,441.1 1452,441.6 1451,441.6 1451,442.1 1450,442.1 1450,442.7 1449,442.7 1449,442.0 1448,442.0 1448,442.8 1447,442.8 1447,442.8 1446,442.8 1446,441.6 1445,441.6 1445,442.6 1444,442.6 1444,442.6 1443,442.6 1443,442.2 1442,442.2 1442,442.2 1441,442.2 1441,442.1 1440,442.1 1440,442.9 1439,442.9 1439,443.5 1438,443.5 1438,435.1 1437,435.1 1437,435.1 1436,435.1 1436,440.3 1435,440.3 1435,441.1 1434,441.1 1434,441.5 1433,441.5 1433,441.8 1432,441.8 1432,443.2 1431,443.2 1431,435.1 1430,435.1 1430,435.1 1429,435.1 1429,435.1 1428,435.1 1428,435.1 1427,435.1 1427,435.1 1426,435.1 1426,435.1 1425,435.1 1425,440.8 1424,440.8 1424,441.1 1423,441.1 1423,440.3 1422,440.3 1422,441.2 1421,441.2 1421,440.2 1420,440.2 1420,441.6 1419,441.6 1419,441.4 1418,441.4 1418,441.5 1417,441.5 1417,441.4 1416,441.4 1416,442.0 1415,442.0 1415,441.3 1414,441.3 1414,442.1 1413,442.1 1413,441.3 1412,441.3 1412,440.8 1411,440.8 1411,442.3 1410,442.3 1410,441.1 1409,441.1 1409,441.5 1408,441.5 1408,442.0 1407,442.0 1407,441.6 1406,441.6 1406,442.1 1405,442.1 1405,442.5 1404,442.5 1404,441.6 1403,441.6 1403,441.4 1402,441.4 1402,442.8 1401,442.8 1401,442.9 1400,442.9 1400,442.1 1399,442.1 1399,442.9 1398,442.9 1398,441.9 1397,441.9 1397,442.0 1396,442.0 1396,443.7 1395,443.7 1395,435.1 1394,435.1 1394,435.1 1393,435.1 1393,435.1 1392,435.1 1392,435.1 1391,435.1 1391,435.1 1390,435.1 1390,435.1 1389,435.1 1389,441.7 1388,441.7 1388,441.4 1387,441.4 1387,440.9 1386,440.9 1386,441.4 1385,441.4 1385,441.2 1384,441.2 1384,441.2 1383,441.2 1383,441.7 1382,441.7 1382,441.8 1381,441.8 1381,442.4 1380,442.4 1380,441.9 1379,441.9 1379,442.6 1378,442.6 1378,442.5 1377,442.5 1377,442.5 1376,442.5 1376,442.8 1375,442.8 1375,441.9 1374,441.9 1374,441.8 1373,441.8 1373,442.7 1372,442.7 1372,441.8 1371,441.8 1371,442.9 1370,442.9 1370,441.9 1369,441.9 1369,442.2 1368,442.2 1368,442.8 1367,442.8 1367,442.0 1366,442.0 1366,442.2 1365,442.2 1365,442.6 1364,442.6 1364,443.2 1363,443.2 1363,442.6 1362,442.6 1362,443.2 1361,443.2 1361,443.9 1360,443.9 1360,444.2 1359,444.2 1359,435.1 1358,435.1 1358,435.1 1357,435.1 1357,435.1 1356,435.1 1356,435.1 1355,435.1 1355,435.1 1354,435.1 1354,435.1 1353,435.1 1353,439.6 1352,439.6 1352,440.4 1351,440.4 1351,439.8 1350,439.8 1350,440.4 1349,440.4 1349,439.9 1348,439.9 1348,440.7 1347,440.7 1347,441.1 1346,441.1 1346,440.7 1345,440.7 1345,440.2 1344,440.2 1344,440.8 1343,440.8 1343,440.0 1342,440.0 1342,440.3 1341,440.3 1341,441.5 1340,441.5 1340,441.5 1339,441.5 1339,440.3 1338,440.3 1338,440.4 1337,440.4 1337,440.8 1336,440.8 1336,440.9 1335,440.9 1335,442.1 1334,442.1 1334,441.3 1333,441.3 1333,441.7 1332,441.7 1332,442.6 1331,442.6 1331,435.1 1330,435.1 1330,435.1 1329,435.1 1329,440.6 1328,440.6 1328,440.8 1327,440.8 1327,440.6 1326,440.6 1326,442.1 1325,442.1 1325,435.1 1324,435.1 1324,435.1 1323,435.1 1323,441.9 1322,441.9 1322,441.9 1321,441.9 1321,442.9 1320,442.9 1320,443.7 1319,443.7 1319,435.1 1318,435.1 1318,435.1 1317,435.1 1317,435.1 1316,435.1 1316,435.1 1315,435.1 1315,440.1 1314,440.1 1314,440.9 1313,440.9 1313,440.2 1312,440.2 1312,442.2 1311,442.2 1311,435.1 1310,435.1 1310,435.1 1309,435.1 1309,439.7 1308,439.7 1308,440.4 1307,440.4 1307,440.1 1306,440.1 1306,440.6 1305,440.6 1305,441.0 1304,441.0 1304,441.5 1303,441.5 1303,440.5 1302,440.5 1302,441.2 1301,441.2 1301,441.4 1300,441.4 1300,442.2 1299,442.2 1299,442.1 1298,442.1 1298,442.4 1297,442.4 1297,441.9 1296,441.9 1296,443.2 1295,443.2 1295,435.1 1294,435.1 1294,435.1 1293,435.1 1293,440.7 1292,440.7 1292,440.1 1291,440.1 1291,440.8 1290,440.8 1290,441.5 1289,441.5 1289,441.1 1288,441.1 1288,440.2 1287,440.2 1287,441.2 1286,441.2 1286,440.7 1285,440.7 1285,441.8 1284,441.8 1284,441.8 1283,441.8 1283,441.6 1282,441.6 1282,442.0 1281,442.0 1281,441.9 1280,441.9 1280,441.3 1279,441.3 1279,441.1 1278,441.1 1278,442.3 1277,442.3 1277,441.5 1276,441.5 1276,442.0 1275,442.0 1275,440.9 1274,440.9 1274,441.5 1273,441.5 1273,441.3 1272,441.3 1272,442.3 1271,442.3 1271,442.4 1270,442.4 1270,442.5 1269,442.5 1269,442.6 1268,442.6 1268,442.0 1267,442.0 1267,442.6 1266,442.6 1266,442.4 1265,442.4 1265,442.8 1264,442.8 1264,441.5 1263,441.5 1263,442.3 1262,442.3 1262,441.8 1261,441.8 1261,442.1 1260,442.1 1260,441.9 1259,441.9 1259,443.1 1258,443.1 1258,443.6 1257,443.6 1257,435.1 1256,435.1 1256,435.1 1255,435.1 1255,440.1 1254,440.1 1254,439.7 1253,439.7 1253,441.3 1252,441.3 1252,440.5 1251,440.5 1251,441.3 1250,441.3 1250,441.4 1249,441.4 1249,440.7 1248,440.7 1248,441.0 1247,441.0 1247,440.7 1246,440.7 1246,442.0 1245,442.0 1245,441.4 1244,441.4 1244,441.3 1243,441.3 1243,440.8 1242,440.8 1242,441.1 1241,441.1 1241,442.4 1240,442.4 1240,442.1 1239,442.1 1239,441.8 1238,441.8 1238,442.1 1237,442.1 1237,441.3 1236,441.3 1236,442.1 1235,442.1 1235,442.8 1234,442.8 1234,443.3 1233,443.3 1233,435.1 1232,435.1 1232,435.1 1231,435.1 1231,439.2 1230,439.2 1230,439.6 1229,439.6 1229,439.2 1228,439.2 1228,439.3 1227,439.3 1227,440.1 1226,440.1 1226,440.6 1225,440.6 1225,440.2 1224,440.2 1224,440.0 1223,440.0 1223,440.1 1222,440.1 1222,439.3 1221,439.3 1221,440.6 1220,440.6 1220,440.0 1219,440.0 1219,439.8 1218,439.8 1218,440.8 1217,440.8 1217,440.0 1216,440.0 1216,440.9 1215,440.9 1215,440.4 1214,440.4 1214,439.8 1213,439.8 1213,440.6 1212,440.6 1212,440.0 1211,440.0 1211,440.9 1210,440.9 1210,440.9 1209,440.9 1209,440.7 1208,440.7 1208,440.4 1207,440.4 1207,440.7 1206,440.7 1206,440.3 1205,440.3 1205,440.8 1204,440.8 1204,441.7 1203,441.7 1203,440.4 1202,440.4 1202,442.2 1201,442.2 1201,435.1 1200,435.1 1200,435.1 1199,435.1 1199,435.1 1198,435.1 1198,439.9 1197,439.9 1197,440.9 1196,440.9 1196,441.6 1195,441.6 1195,441.8 1194,441.8 1194,442.0 1193,442.0 1193,440.8 1192,440.8 1192,441.1 1191,441.1 1191,442.0 1190,442.0 1190,442.3 1189,442.3 1189,442.2 1188,442.2 1188,441.7 1187,441.7 1187,442.6 1186,442.6 1186,441.7 1185,441.7 1185,443.5 1184,443.5 1184,435.1 1183,435.1 1183,435.1 1182,435.1 1182,441.1 1181,441.1 1181,442.3 1180,442.3 1180,443.3 1179,443.3 1179,444.4 1178,444.4 1178,435.1 1177,435.1 1177,435.1 1176,435.1 1176,435.1 1175,435.1 1175,440.1 1174,440.1 1174,440.3 1173,440.3 1173,439.6 1172,439.6 1172,439.9 1171,439.9 1171,440.1 1170,440.1 1170,440.2 1169,440.2 1169,440.3 1168,440.3 1168,441.5 1167,441.5 1167,441.0 1166,441.0 1166,441.1 1165,441.1 1165,440.2 1164,440.2 1164,440.5 1163,440.5 1163,440.4 1162,440.4 1162,441.3 1161,441.3 1161,442.0 1160,442.0 1160,441.7 1159,441.7 1159,442.1 1158,442.1 1158,440.7 1157,440.7 1157,441.0 1156,441.0 1156,441.4 1155,441.4 1155,442.1 1154,442.1 1154,441.5 1153,441.5 1153,442.4 1152,442.4 1152,441.5 1151,441.5 1151,441.6 1150,441.6 1150,443.0 1149,443.0 1149,435.1 1148,435.1 1148,435.1 1147,435.1 1147,440.0 1146,440.0 1146,439.5 1145,439.5 1145,439.2 1144,439.2 1144,439.5 1143,439.5 1143,440.6 1142,440.6 1142,439.8 1141,439.8 1141,439.1 1140,439.1 1140,440.2 1139,440.2 1139,439.6 1138,439.6 1138,439.9 1137,439.9 1137,440.1 1136,440.1 1136,440.7 1135,440.7 1135,440.5 1134,440.5 1134,440.6 1133,440.6 1133,440.8 1132,440.8 1132,439.7 1131,439.7 1131,440.9 1130,440.9 1130,440.5 1129,440.5 1129,440.8 1128,440.8 1128,440.0 1127,440.0 1127,440.8 1126,440.8 1126,440.6 1125,440.6 1125,440.6 1124,440.6 1124,441.2 1123,441.2 1123,440.9 1122,440.9 1122,440.5 1121,440.5 1121,441.5 1120,441.5 1120,441.2 1119,441.2 1119,441.3 1118,441.3 1118,440.5 1117,440.5 1117,441.1 1116,441.1 1116,441.8 1115,441.8 1115,441.7 1114,441.7 1114,441.0 1113,441.0 1113,441.1 1112,441.1 1112,442.2 1111,442.2 1111,435.1 1110,435.1 1110,435.1 1109,435.1 1109,442.1 1108,442.1 1108,442.8 1107,442.8 1107,442.8 1106,442.8 1106,444.4 1105,444.4 1105,435.1 1104,435.1 1104,435.1 1103,435.1 1103,435.1 1102,435.1 1102,440.3 1101,440.3 1101,440.5 1100,440.5 1100,440.6 1099,440.6 1099,440.1 1098,440.1 1098,441.3 1097,441.3 1097,441.0 1096,441.0 1096,441.0 1095,441.0 1095,441.5 1094,441.5 1094,440.4 1093,440.4 1093,440.7 1092,440.7 1092,440.9 1091,440.9 1091,441.1 1090,441.1 1090,441.0 1089,441.0 1089,440.8 1088,440.8 1088,442.2 1087,442.2 1087,442.0 1086,442.0 1086,442.0 1085,442.0 1085,442.4 1084,442.4 1084,442.3 1083,442.3 1083,441.6 1082,441.6 1082,441.6 1081,441.6 1081,442.2 1080,442.2 1080,442.2 1079,442.2 1079,442.6 1078,442.6 1078,441.9 1077,441.9 1077,442.5 1076,442.5 1076,442.1 1075,442.1 1075,442.3 1074,442.3 1074,442.1 1073,442.1 1073,443.4 1072,443.4 1072,435.1 1071,435.1 1071,435.1 1070,435.1 1070,435.1 1069,435.1 1069,435.1 1068,435.1 1068,435.1 1067,435.1 1067,435.1 1066,435.1 1066,440.3 1065,440.3 1065,439.6 1064,439.6 1064,440.3 1063,440.3 1063,440.7 1062,440.7 1062,440.2 1061,440.2 1061,441.5 1060,441.5 1060,441.6 1059,441.6 1059,441.5 1058,441.5 1058,442.2 1057,442.2 1057,442.8 1056,442.8 1056,435.1 1055,435.1 1055,435.1 1054,435.1 1054,440.0 1053,440.0 1053,440.0 1052,440.0 1052,439.7 1051,439.7 1051,440.4 1050,440.4 1050,441.4 1049,441.4 1049,440.8 1048,440.8 1048,441.8 1047,441.8 1047,441.6 1046,441.6 1046,441.8 1045,441.8 1045,441.5 1044,441.5 1044,442.3 1043,442.3 1043,441.8 1042,441.8 1042,442.3 1041,442.3 1041,442.9 1040,442.9 1040,435.1 1039,435.1 1039,435.1 1038,435.1 1038,440.1 1037,440.1 1037,440.1 1036,440.1 1036,439.2 1035,439.2 1035,440.0 1034,440.0 1034,440.9 1033,440.9 1033,440.7 1032,440.7 1032,441.0 1031,441.0 1031,440.8 1030,440.8 1030,440.6 1029,440.6 1029,440.7 1028,440.7 1028,441.2 1027,441.2 1027,440.9 1026,440.9 1026,440.0 1025,440.0 1025,441.0 1024,441.0 1024,440.1 1023,440.1 1023,440.6 1022,440.6 1022,440.7 1021,440.7 1021,441.2 1020,441.2 1020,441.4 1019,441.4 1019,441.3 1018,441.3 1018,441.8 1017,441.8 1017,440.5 1016,440.5 1016,441.6 1015,441.6 1015,442.1 1014,442.1 1014,441.8 1013,441.8 1013,442.6 1012,442.6 1012,435.1 1011,435.1 1011,435.1 1010,435.1 1010,435.1 1009,435.1 1009,441.3 1008,441.3 1008,441.7 1007,441.7 1007,440.8 1006,440.8 1006,442.1 1005,442.1 1005,443.1 1004,443.1 1004,435.1 1003,435.1 1003,435.1 1002,435.1 1002,435.1 1001,435.1 1001,441.9 1000,441.9 1000,441.1 999,441.1 999,441.7 998,441.7 998,441.2 997,441.2 997,441.9 996,441.9 996,442.3 995,442.3 995,440.9 994,440.9 994,441.6 993,441.6 993,441.4 992,441.4 992,441.3 991,441.3 991,442.4 990,442.4 990,442.2 989,442.2 989,442.1 988,442.1 988,441.3 987,441.3 987,442.5 986,442.5 986,442.2 985,442.2 985,442.0 984,442.0 984,441.6 983,441.6 983,442.7 982,442.7 982,443.1 981,443.1 981,443.1 980,443.1 980,442.8 979,442.8 979,442.3 978,442.3 978,442.9 977,442.9 977,442.6 976,442.6 976,443.1 975,443.1 975,442.1 974,442.1 974,442.3 973,442.3 973,443.3 972,443.3 972,442.5 971,442.5 971,443.8 970,443.8 970,442.8 969,442.8 969,442.6 968,442.6 968,443.7 967,443.7 967,443.6 966,443.6 966,444.4 965,444.4 965,435.1 964,435.1 964,435.1 963,435.1 963,440.2 962,440.2 962,439.9 961,439.9 961,440.7 960,440.7 960,441.3 959,441.3 959,440.3 958,440.3 958,440.7 957,440.7 957,440.9 956,440.9 956,441.4 955,441.4 955,440.2 954,440.2 954,440.3 953,440.3 953,440.4 952,440.4 952,441.3 951,441.3 951,441.8 950,441.8 950,441.9 949,441.9 949,442.0 948,442.0 948,442.0 947,442.0 947,440.7 946,440.7 946,441.6 945,441.6 945,441.1 944,441.1 944,441.8 943,441.8 943,441.9 942,441.9 942,441.6 941,441.6 941,442.3 940,442.3 940,441.2 939,441.2 939,442.1 938,442.1 938,441.9 937,441.9 937,442.5 936,442.5 936,442.3 935,442.3 935,441.2 934,441.2 934,441.8 933,441.8 933,441.5 932,441.5 932,442.2 931,442.2 931,442.2 930,442.2 930,442.1 929,442.1 929,441.8 928,441.8 928,443.4 927,443.4 927,435.1 926,435.1 926,435.1 925,435.1 925,435.1 924,435.1 924,441.6 923,441.6 923,441.2 922,441.2 922,441.1 921,441.1 921,441.5 920,441.5 920,441.0 919,441.0 919,441.2 918,441.2 918,441.6 917,441.6 917,441.1 916,441.1 916,442.1 915,442.1 915,442.0 914,442.0 914,442.7 913,442.7 913,442.0 912,442.0 912,442.0 911,442.0 911,443.0 910,443.0 910,442.8 909,442.8 909,442.7 908,442.7 908,442.3 907,442.3 907,443.2 906,443.2 906,442.4 905,442.4 905,442.6 904,442.6 904,443.3 903,443.3 903,443.1 902,443.1 902,442.4 901,442.4 901,443.5 900,443.5 900,443.8 899,443.8 899,444.2 898,444.2 898,435.1 897,435.1 897,435.1 896,435.1 896,440.1 895,440.1 895,440.3 894,440.3 894,441.1 893,441.1 893,441.7 892,441.7 892,441.2 891,441.2 891,441.2 890,441.2 890,441.7 889,441.7 889,441.8 888,441.8 888,442.0 887,442.0 887,442.2 886,442.2 886,441.5 885,441.5 885,442.0 884,442.0 884,442.2 883,442.2 883,442.3 882,442.3 882,441.4 881,441.4 881,441.2 880,441.2 880,442.2 879,442.2 879,442.2 878,442.2 878,442.7 877,442.7 877,441.8 876,441.8 876,441.7 875,441.7 875,441.9 874,441.9 874,441.5 873,441.5 873,442.4 872,442.4 872,442.8 871,442.8 871,442.2 870,442.2 870,442.2 869,442.2 869,441.9 868,441.9 868,442.5 867,442.5 867,441.8 866,441.8 866,441.8 865,441.8 865,443.0 864,443.0 864,442.9 863,442.9 863,443.3 862,443.3 862,442.4 861,442.4 861,443.9 860,443.9 860,435.1 859,435.1 859,435.1 858,435.1 858,440.3 857,440.3 857,439.6 856,439.6 856,440.9 855,440.9 855,440.7 854,440.7 854,440.1 853,440.1 853,440.9 852,440.9 852,440.9 851,440.9 851,441.4 850,441.4 850,442.2 849,442.2 849,442.7 848,442.7 848,435.1 847,435.1 847,435.1 846,435.1 846,435.1 845,435.1 845,439.9 844,439.9 844,439.5 843,439.5 843,439.5 842,439.5 842,439.8 841,439.8 841,439.5 840,439.5 840,439.6 839,439.6 839,439.6 838,439.6 838,440.4 837,440.4 837,439.2 836,439.2 836,439.8 835,439.8 835,440.5 834,440.5 834,440.7 833,440.7 833,439.7 832,439.7 832,439.4 831,439.4 831,440.6 830,440.6 830,440.1 829,440.1 829,439.6 828,439.6 828,440.0 827,440.0 827,440.5 826,440.5 826,439.7 825,439.7 825,441.1 824,441.1 824,440.4 823,440.4 823,440.1 822,440.1 822,441.2 821,441.2 821,440.3 820,440.3 820,441.2 819,441.2 819,440.0 818,440.0 818,440.8 817,440.8 817,440.5 816,440.5 816,440.5 815,440.5 815,440.2 814,440.2 814,441.6 813,441.6 813,441.7 812,441.7 812,440.4 811,440.4 811,440.4 810,440.4 810,442.1 809,442.1 809,435.1 808,435.1 808,435.1 807,435.1 807,435.1 806,435.1 806,435.1 805,435.1 805,435.1 804,435.1 804,435.1 803,435.1 803,440.0 802,440.0 802,439.3 801,439.3 801,439.2 800,439.2 800,439.0 799,439.0 799,440.2 798,440.2 798,440.2 797,440.2 797,439.5 796,439.5 796,440.4 795,440.4 795,439.3 794,439.3 794,439.5 793,439.5 793,439.6 792,439.6 792,440.0 791,440.0 791,440.8 790,440.8 790,440.5 789,440.5 789,439.8 788,439.8 788,440.2 787,440.2 787,440.3 786,440.3 786,440.3 785,440.3 785,439.9 784,439.9 784,441.3 783,441.3 783,441.5 782,441.5 782,440.7 781,440.7 781,440.2 780,440.2 780,440.2 779,440.2 779,440.8 778,440.8 778,442.1 777,442.1 777,435.1 776,435.1 776,435.1 775,435.1 775,435.1 774,435.1 774,441.1 773,441.1 773,440.8 772,440.8 772,441.5 771,441.5 771,441.5 770,441.5 770,441.2 769,441.2 769,441.2 768,441.2 768,441.4 767,441.4 767,441.4 766,441.4 766,441.5 765,441.5 765,442.1 764,442.1 764,442.1 763,442.1 763,442.0 762,442.0 762,441.5 761,441.5 761,441.7 760,441.7 760,441.4 759,441.4 759,442.0 758,442.0 758,442.8 757,442.8 757,442.9 756,442.9 756,441.9 755,441.9 755,441.8 754,441.8 754,441.8 753,441.8 753,442.0 752,442.0 752,443.3 751,443.3 751,443.2 750,443.2 750,443.1 749,443.1 749,442.3 748,442.3 748,443.6 747,443.6 747,443.5 746,443.5 746,442.5 745,442.5 745,444.1 744,444.1 744,435.1 743,435.1 743,435.1 742,435.1 742,440.5 741,440.5 741,440.4 740,440.4 740,440.0 739,440.0 739,440.0 738,440.0 738,440.0 737,440.0 737,441.0 736,441.0 736,440.4 735,440.4 735,440.8 734,440.8 734,440.4 733,440.4 733,441.0 732,441.0 732,440.9 731,440.9 731,441.4 730,441.4 730,441.4 729,441.4 729,441.7 728,441.7 728,441.0 727,441.0 727,440.7 726,440.7 726,442.1 725,442.1 725,440.9 724,440.9 724,441.7 723,441.7 723,440.9 722,440.9 722,442.3 721,442.3 721,442.4 720,442.4 720,441.7 719,441.7 719,442.5 718,442.5 718,441.7 717,441.7 717,443.2 716,443.2 716,435.1 715,435.1 715,435.1 714,435.1 714,435.1 713,435.1 713,435.1 712,435.1 712,441.0 711,441.0 711,442.1 710,442.1 710,440.8 709,440.8 709,440.7 708,440.7 708,440.9 707,440.9 707,440.9 706,440.9 706,442.2 705,442.2 705,442.2 704,442.2 704,441.9 703,441.9 703,442.1 702,442.1 702,442.2 701,442.2 701,442.0 700,442.0 700,441.9 699,441.9 699,442.1 698,442.1 698,441.6 697,441.6 697,442.5 696,442.5 696,442.7 695,442.7 695,442.3 694,442.3 694,442.6 693,442.6 693,442.9 692,442.9 692,443.2 691,443.2 691,443.2 690,443.2 690,442.7 689,442.7 689,443.5 688,443.5 688,442.2 687,442.2 687,442.7 686,442.7 686,442.2 685,442.2 685,442.3 684,442.3 684,443.1 683,443.1 683,442.4 682,442.4 682,443.6 681,443.6 681,442.6 680,442.6 680,443.4 679,443.4 679,443.9 678,443.9 678,444.0 677,444.0 677,444.4 676,444.4 676,435.1 675,435.1 675,435.1 674,435.1 674,435.1 673,435.1 673,441.0 672,441.0 672,440.5 671,440.5 671,441.0 670,441.0 670,441.6 669,441.6 669,441.4 668,441.4 668,440.8 667,440.8 667,441.9 666,441.9 666,442.3 665,442.3 665,441.2 664,441.2 664,441.4 663,441.4 663,441.6 662,441.6 662,441.9 661,441.9 661,442.8 660,442.8 660,442.6 659,442.6 659,441.8 658,441.8 658,443.0 657,443.0 657,442.3 656,442.3 656,442.7 655,442.7 655,442.6 654,442.6 654,442.5 653,442.5 653,443.1 652,443.1 652,444.2 651,444.2 651,435.1 650,435.1 650,435.1 649,435.1 649,435.1 648,435.1 648,441.1 647,441.1 647,440.4 646,440.4 646,440.2 645,440.2 645,441.6 644,441.6 644,441.3 643,441.3 643,440.6 642,440.6 642,440.6 641,440.6 641,441.1 640,441.1 640,441.1 639,441.1 639,442.2 638,442.2 638,442.1 637,442.1 637,441.1 636,441.1 636,441.5 635,441.5 635,441.5 634,441.5 634,442.2 633,442.2 633,441.9 632,441.9 632,442.7 631,442.7 631,442.5 630,442.5 630,442.8 629,442.8 629,443.0 628,443.0 628,442.3 627,442.3 627,443.6 626,443.6 626,435.1 625,435.1 625,435.1 624,435.1 624,435.1 623,435.1 623,439.5 622,439.5 622,439.6 621,439.6 621,440.1 620,440.1 620,439.8 619,439.8 619,440.7 618,440.7 618,440.7 617,440.7 617,440.3 616,440.3 616,440.6 615,440.6 615,440.5 614,440.5 614,440.5 613,440.5 613,440.8 612,440.8 612,439.9 611,439.9 611,440.8 610,440.8 610,441.4 609,441.4 609,440.2 608,440.2 608,440.6 607,440.6 607,440.7 606,440.7 606,441.2 605,441.2 605,441.1 604,441.1 604,441.7 603,441.7 603,440.7 602,440.7 602,442.3 601,442.3 601,435.1 600,435.1 600,435.1 599,435.1 599,435.1 598,435.1 598,435.1 597,435.1 597,441.2 596,441.2 596,441.3 595,441.3 595,441.0 594,441.0 594,440.9 593,440.9 593,441.7 592,441.7 592,441.8 591,441.8 591,441.0 590,441.0 590,441.4 589,441.4 589,441.9 588,441.9 588,441.5 587,441.5 587,442.6 586,442.6 586,442.8 585,442.8 585,442.3 584,442.3 584,441.8 583,441.8 583,442.5 582,442.5 582,441.8 581,441.8 581,443.2 580,443.2 580,443.8 579,443.8 579,435.1 578,435.1 578,435.1 577,435.1 577,435.1 576,435.1 576,440.6 575,440.6 575,441.2 574,441.2 574,441.3 573,441.3 573,440.1 572,440.1 572,441.2 571,441.2 571,440.6 570,440.6 570,441.9 569,441.9 569,441.0 568,441.0 568,441.4 567,441.4 567,441.8 566,441.8 566,441.0 565,441.0 565,441.4 564,441.4 564,442.5 563,442.5 563,443.2 562,443.2 562,435.1 561,435.1 561,435.1 560,435.1 560,435.1 559,435.1 559,435.1 558,435.1 558,435.1 557,435.1 557,435.1 556,435.1 556,435.1 555,435.1 555,435.1 554,435.1 554,435.1 553,435.1 553,435.1 552,435.1 552,435.1 551,435.1 551,435.1 550,435.1 550,435.1 549,435.1 549,435.1 548,435.1 548,435.1 547,435.1 547,435.1 546,435.1 546,435.1 545,435.1 545,435.1 544,435.1 544,435.1 543,435.1 543,435.1 542,435.1 542,435.1 541,435.1 541,435.1 540,435.1 540,435.1 539,435.1 539,435.1 538,435.1 538,435.1 537,435.1 537,435.1 536,435.1 536,435.1 535,435.1 535,435.1 534,435.1 534,435.1 533,435.1 533,435.1 532,435.1 532,435.1 531,435.1 531,435.1 530,435.1 530,435.1 529,435.1 529,435.1 528,435.1 528,435.1 527,435.1 527,435.1 526,435.1 526,435.1 525,435.1 525,435.1 524,435.1 524,435.1 523,435.1 523,435.1 522,435.1 522,435.1 521,435.1 521,435.1 520,435.1 520,435.1 519,435.1 519,435.1 518,435.1 518,435.1 517,435.1 517,435.1 516,435.1 516,435.1 515,435.1 515,435.1 514,435.1 514,435.1 513,435.1 513,435.1 512,435.1 512,435.1 511,435.1 511,435.1 510,435.1 510,435.1 509,435.1 509,435.1 508,435.1 508,435.1 507,435.1 507,435.1 506,435.1 506,435.1 505,435.1 505,435.1 504,435.1 504,435.1 503,435.1 503,435.1 502,435.1 502,435.1 501,435.1 501,435.1 500,435.1 500,435.1 499,435.1 499,435.1 498,435.1 498,435.1 497,435.1 497,435.1 496,435.1 496,435.1 495,435.1 495,435.1 494,435.1 494,435.1 493,435.1 493,435.1 492,435.1 492,435.1 491,435.1 491,435.1 490,435.1 490,435.1 489,435.1 489,435.1 488,435.1 488,435.1 487,435.1 487,435.1 486,435.1 486,435.1 485,435.1 485,435.1 484,435.1 484,435.1 483,435.1 483,435.1 482,435.1 482,435.1 481,435.1 481,435.1 480,435.1 480,435.1 479,435.1 479,435.1 478,435.1 478,435.1 477,435.1 477,435.1 476,435.1 476,435.1 475,435.1 475,435.1 474,435.1 474,435.1 473,435.1 473,435.1 472,435.1 472,435.1 471,435.1 471,435.1 470,435.1 470,435.1 469,435.1 469,435.1 468,435.1 468,435.1 467,435.1 467,435.1 466,435.1 466,435.1 465,435.1 465,435.1 464,435.1 464,435.1 463,435.1 463,435.1 462,435.1 462,435.1 461,435.1 461,435.1 460,435.1 460,435.1 459,435.1 459,435.1 458,435.1 458,435.1 457,435.1 457,435.1 456,435.1 456,435.1 455,435.1 455,435.1 454,435.1 454,435.1 453,435.1 453,435.1 452,435.1 452,435.1 451,435.1 451,435.1 450,435.1 450,435.1 449,435.1 449,435.1 448,435.1 448,435.1 447,435.1 447,435.1 446,435.1 446,435.1 445,435.1 445,435.1 444,435.1 444,435.1 443,435.1 443,435.1 442,435.1 442,435.1 441,435.1 441,435.1 440,435.1 440,435.1 439,435.1 439,435.1 438,435.1 438,435.1 437,435.1 437,435.1 436,435.1 436,435.1 435,435.1 435,435.1 434,435.1 434,435.1 433,435.1 433,435.1 432,435.1 432,435.1 431,435.1 431,435.1 430,435.1 430,435.1 429,435.1 429,435.1 428,435.1 428,435.1 427,435.1 427,435.1 426,435.1 426,435.1 425,435.1 425,435.1 424,435.1 424,435.1 423,435.1 423,435.1 422,435.1 422,435.1 421,435.1 421,435.1 420,435.1 420,435.1 419,435.1 419,435.1 418,435.1 418,435.1 417,435.1 417,435.1 416,435.1 416,435.1 415,435.1 415,435.1 414,435.1 414,435.1 413,435.1 413,435.1 412,435.1 412,435.1 411,435.1 411,435.1 410,435.1 410,435.1 409,435.1 409,435.1 408,435.1 408,435.1 407,435.1 407,435.1 406,435.1 406,435.1 405,435.1 405,435.1 404,435.1 404,435.1 403,435.1 403,435.1 402,435.1 402,435.1 401,435.1 401,435.1 400,435.1 400,435.1 399,435.1 399,435.1 398,435.1 398,435.1 397,435.1 397,435.1 396,435.1 396,435.1 395,435.1 395,435.1 394,435.1 394,435.1 393,435.1 393,435.1 392,435.1 392,435.1 391,435.1 391,435.1 390,435.1 390,435.1 389,435.1 389,435.1 388,435.1 388,435.1 387,435.1 387,435.1 386,435.1 386,435.1 385,435.1 385,435.1 384,435.1 384,435.1 383,435.1 383,435.1 382,435.1 382,435.1 381,435.1 381,435.1 380,435.1 380,435.1 379,435.1 379,435.1 378,435.1 378,435.1 377,435.1 377,435.1 376,435.1 376,435.1 375,435.1 375,435.1 374,435.1 374,435.1 373,435.1 373,435.1 372,435.1 372,435.1 371,435.1 371,435.1 370,435.1 370,435.1 369,435.1 369,435.1 368,435.1 368,435.1 367,435.1 367,435.1 366,435.1 366,435.1 365,435.1 365,435.1 364,435.1 364,435.1 363,435.1 363,435.1 362,435.1 362,435.1 361,435.1 361,435.1 360,435.1 360,435.1 359,435.1 359,435.1 358,435.1 358,435.1 357,435.1 357,435.1 356,435.1 356,435.1 355,435.1 355,435.1 354,435.1 354,435.1 353,435.1 353,435.1 352,435.1 352,435.1 351,435.1 351,435.1 350,435.1 350,435.1 349,435.1 349,435.1 348,435.1 348,435.1 347,435.1 347,435.1 346,435.1 346,435.1 345,435.1 345,435.1 344,435.1 344,435.1 343,435.1 343,435.1 342,435.1 342,435.1 341,435.1 341,435.1 340,435.1 340,435.1 339,435.1 339,435.1 338,435.1 338,435.1 337,435.1 337,435.1 336,435.1 336,435.1 335,435.1 335,435.1 334,435.1 334,435.1 333,435.1 333,435.1 332,435.1 332,435.1 331,435.1 331,435.1 330,435.1 330,435.1 329,435.1 329,435.1 328,435.1 328,435.1 327,435.1 327,435.1 326,435.1 326,435.1 325,435.1 325,435.1 324,435.1 324,435.1 323,435.1 323,435.1 322,435.1 322,435.1 321,435.1 321,435.1 320,435.1 320,435.1 319,435.1 319,435.1 318,435.1 318,435.1 317,435.1 317,435.1 316,435.1 316,435.1 315,435.1 315,435.1 314,435.1 314,435.1 313,435.1 313,435.1 312,435.1 312,435.1 311,435.1 311,435.1 310,435.1 310,435.1 309,435.1"/></svg>
<svg class="a" style="left:0;top:0" width="1921" height="1080"><polygon fill="#e8c666" points="309,481.9 310,481.9 310,481.9 311,481.9 311,481.9 312,481.9 312,481.9 313,481.9 313,481.9 314,481.9 314,481.9 315,481.9 315,481.9 316,481.9 316,481.9 317,481.9 317,481.9 318,481.9 318,481.9 319,481.9 319,481.9 320,481.9 320,481.9 321,481.9 321,481.9 322,481.9 322,481.9 323,481.9 323,481.9 324,481.9 324,481.9 325,481.9 325,481.9 326,481.9 326,481.9 327,481.9 327,481.9 328,481.9 328,481.9 329,481.9 329,481.9 330,481.9 330,481.9 331,481.9 331,481.9 332,481.9 332,481.9 333,481.9 333,481.9 334,481.9 334,481.9 335,481.9 335,481.9 336,481.9 336,481.9 337,481.9 337,481.9 338,481.9 338,481.9 339,481.9 339,481.9 340,481.9 340,481.9 341,481.9 341,481.9 342,481.9 342,481.9 343,481.9 343,481.9 344,481.9 344,481.9 345,481.9 345,481.9 346,481.9 346,481.9 347,481.9 347,481.9 348,481.9 348,481.9 349,481.9 349,481.9 350,481.9 350,481.9 351,481.9 351,481.9 352,481.9 352,481.9 353,481.9 353,481.9 354,481.9 354,481.9 355,481.9 355,481.9 356,481.9 356,481.9 357,481.9 357,481.9 358,481.9 358,481.9 359,481.9 359,481.9 360,481.9 360,481.9 361,481.9 361,481.9 362,481.9 362,481.9 363,481.9 363,481.9 364,481.9 364,481.9 365,481.9 365,481.9 366,481.9 366,481.9 367,481.9 367,481.9 368,481.9 368,481.9 369,481.9 369,481.9 370,481.9 370,481.9 371,481.9 371,481.9 372,481.9 372,481.9 373,481.9 373,481.9 374,481.9 374,481.9 375,481.9 375,481.9 376,481.9 376,481.9 377,481.9 377,481.9 378,481.9 378,481.9 379,481.9 379,481.9 380,481.9 380,481.9 381,481.9 381,481.9 382,481.9 382,481.9 383,481.9 383,481.9 384,481.9 384,481.9 385,481.9 385,481.9 386,481.9 386,481.9 387,481.9 387,481.9 388,481.9 388,481.9 389,481.9 389,481.9 390,481.9 390,481.9 391,481.9 391,481.9 392,481.9 392,481.9 393,481.9 393,481.9 394,481.9 394,481.9 395,481.9 395,481.9 396,481.9 396,481.9 397,481.9 397,481.9 398,481.9 398,481.9 399,481.9 399,481.9 400,481.9 400,481.9 401,481.9 401,481.9 402,481.9 402,481.9 403,481.9 403,481.9 404,481.9 404,481.9 405,481.9 405,481.9 406,481.9 406,481.9 407,481.9 407,481.9 408,481.9 408,481.9 409,481.9 409,481.9 410,481.9 410,481.9 411,481.9 411,481.9 412,481.9 412,481.9 413,481.9 413,481.9 414,481.9 414,481.9 415,481.9 415,481.9 416,481.9 416,481.9 417,481.9 417,481.9 418,481.9 418,481.9 419,481.9 419,481.9 420,481.9 420,481.9 421,481.9 421,481.9 422,481.9 422,481.9 423,481.9 423,481.9 424,481.9 424,481.9 425,481.9 425,481.9 426,481.9 426,481.9 427,481.9 427,481.9 428,481.9 428,481.9 429,481.9 429,481.9 430,481.9 430,481.9 431,481.9 431,481.9 432,481.9 432,481.9 433,481.9 433,481.9 434,481.9 434,481.9 435,481.9 435,481.9 436,481.9 436,481.9 437,481.9 437,481.9 438,481.9 438,481.9 439,481.9 439,481.9 440,481.9 440,481.9 441,481.9 441,481.9 442,481.9 442,481.9 443,481.9 443,481.9 444,481.9 444,481.9 445,481.9 445,481.9 446,481.9 446,481.9 447,481.9 447,481.9 448,481.9 448,481.9 449,481.9 449,481.9 450,481.9 450,481.9 451,481.9 451,481.9 452,481.9 452,481.9 453,481.9 453,481.9 454,481.9 454,481.9 455,481.9 455,481.9 456,481.9 456,481.9 457,481.9 457,481.9 458,481.9 458,481.9 459,481.9 459,481.9 460,481.9 460,481.9 461,481.9 461,481.9 462,481.9 462,481.9 463,481.9 463,481.9 464,481.9 464,481.9 465,481.9 465,481.9 466,481.9 466,481.9 467,481.9 467,481.9 468,481.9 468,481.9 469,481.9 469,481.9 470,481.9 470,481.9 471,481.9 471,481.9 472,481.9 472,481.9 473,481.9 473,481.9 474,481.9 474,481.9 475,481.9 475,481.9 476,481.9 476,481.9 477,481.9 477,481.9 478,481.9 478,481.9 479,481.9 479,481.9 480,481.9 480,481.9 481,481.9 481,481.9 482,481.9 482,481.9 483,481.9 483,481.9 484,481.9 484,481.9 485,481.9 485,481.9 486,481.9 486,481.9 487,481.9 487,481.9 488,481.9 488,481.9 489,481.9 489,481.9 490,481.9 490,481.9 491,481.9 491,481.9 492,481.9 492,481.9 493,481.9 493,481.9 494,481.9 494,481.9 495,481.9 495,481.9 496,481.9 496,481.9 497,481.9 497,481.9 498,481.9 498,481.9 499,481.9 499,481.9 500,481.9 500,481.9 501,481.9 501,481.9 502,481.9 502,481.9 503,481.9 503,481.9 504,481.9 504,481.9 505,481.9 505,481.9 506,481.9 506,481.9 507,481.9 507,481.9 508,481.9 508,481.9 509,481.9 509,481.9 510,481.9 510,481.9 511,481.9 511,481.9 512,481.9 512,481.9 513,481.9 513,481.9 514,481.9 514,481.9 515,481.9 515,481.9 516,481.9 516,481.9 517,481.9 517,481.9 518,481.9 518,481.9 519,481.9 519,481.9 520,481.9 520,481.9 521,481.9 521,481.9 522,481.9 522,481.9 523,481.9 523,481.9 524,481.9 524,481.9 525,481.9 525,481.9 526,481.9 526,481.9 527,481.9 527,481.9 528,481.9 528,481.9 529,481.9 529,481.9 530,481.9 530,481.9 531,481.9 531,481.9 532,481.9 532,481.9 533,481.9 533,481.9 534,481.9 534,481.9 535,481.9 535,481.9 536,481.9 536,481.9 537,481.9 537,481.9 538,481.9 538,481.9 539,481.9 539,481.9 540,481.9 540,481.9 541,481.9 541,481.9 542,481.9 542,481.9 543,481.9 543,481.9 544,481.9 544,481.9 545,481.9 545,481.9 546,481.9 546,481.9 547,481.9 547,481.9 548,481.9 548,481.9 549,481.9 549,481.9 550,481.9 550,481.9 551,481.9 551,481.9 552,481.9 552,481.9 553,481.9 553,481.9 554,481.9 554,481.9 555,481.9 555,481.9 556,481.9 556,481.9 557,481.9 557,481.9 558,481.9 558,481.9 559,481.9 559,481.9 560,481.9 560,481.9 561,481.9 561,481.9 562,481.9 562,481.9 563,481.9 563,481.9 564,481.9 564,481.9 565,481.9 565,481.9 566,481.9 566,481.9 567,481.9 567,481.9 568,481.9 568,481.9 569,481.9 569,481.9 570,481.9 570,481.9 571,481.9 571,481.9 572,481.9 572,481.9 573,481.9 573,481.9 574,481.9 574,481.9 575,481.9 575,481.9 576,481.9 576,481.9 577,481.9 577,481.9 578,481.9 578,481.9 579,481.9 579,481.9 580,481.9 580,481.9 581,481.9 581,481.9 582,481.9 582,481.9 583,481.9 583,481.9 584,481.9 584,481.9 585,481.9 585,481.9 586,481.9 586,481.9 587,481.9 587,481.9 588,481.9 588,481.9 589,481.9 589,481.9 590,481.9 590,481.9 591,481.9 591,481.9 592,481.9 592,481.9 593,481.9 593,481.9 594,481.9 594,481.9 595,481.9 595,481.9 596,481.9 596,481.9 597,481.9 597,481.9 598,481.9 598,481.9 599,481.9 599,481.9 600,481.9 600,481.9 601,481.9 601,481.9 602,481.9 602,481.9 603,481.9 603,481.9 604,481.9 604,481.9 605,481.9 605,481.9 606,481.9 606,481.9 607,481.9 607,481.9 608,481.9 608,481.9 609,481.9 609,481.9 610,481.9 610,481.9 611,481.9 611,481.9 612,481.9 612,481.9 613,481.9 613,481.9 614,481.9 614,481.9 615,481.9 615,481.9 616,481.9 616,481.9 617,481.9 617,481.9 618,481.9 618,481.9 619,481.9 619,481.9 620,481.9 620,481.9 621,481.9 621,481.9 622,481.9 622,481.9 623,481.9 623,481.9 624,481.9 624,481.9 625,481.9 625,481.9 626,481.9 626,481.9 627,481.9 627,481.9 628,481.9 628,481.9 629,481.9 629,481.9 630,481.9 630,481.9 631,481.9 631,481.9 632,481.9 632,481.9 633,481.9 633,481.9 634,481.9 634,481.9 635,481.9 635,481.9 636,481.9 636,481.9 637,481.9 637,481.9 638,481.9 638,481.9 639,481.9 639,481.9 640,481.9 640,481.9 641,481.9 641,481.9 642,481.9 642,481.9 643,481.9 643,481.9 644,481.9 644,481.9 645,481.9 645,481.9 646,481.9 646,481.9 647,481.9 647,481.9 648,481.9 648,481.9 649,481.9 649,481.9 650,481.9 650,481.9 651,481.9 651,481.9 652,481.9 652,481.9 653,481.9 653,481.9 654,481.9 654,481.9 655,481.9 655,481.9 656,481.9 656,481.9 657,481.9 657,481.9 658,481.9 658,481.9 659,481.9 659,481.9 660,481.9 660,481.9 661,481.9 661,481.9 662,481.9 662,481.9 663,481.9 663,481.9 664,481.9 664,481.9 665,481.9 665,481.9 666,481.9 666,481.9 667,481.9 667,481.9 668,481.9 668,481.9 669,481.9 669,481.9 670,481.9 670,481.9 671,481.9 671,481.9 672,481.9 672,481.9 673,481.9 673,481.9 674,481.9 674,481.9 675,481.9 675,481.9 676,481.9 676,481.9 677,481.9 677,481.9 678,481.9 678,481.9 679,481.9 679,481.9 680,481.9 680,481.9 681,481.9 681,481.9 682,481.9 682,481.9 683,481.9 683,481.9 684,481.9 684,481.9 685,481.9 685,481.9 686,481.9 686,481.9 687,481.9 687,481.9 688,481.9 688,481.9 689,481.9 689,481.9 690,481.9 690,481.9 691,481.9 691,481.9 692,481.9 692,481.9 693,481.9 693,481.9 694,481.9 694,481.9 695,481.9 695,481.9 696,481.9 696,481.9 697,481.9 697,481.9 698,481.9 698,481.9 699,481.9 699,481.9 700,481.9 700,481.9 701,481.9 701,481.9 702,481.9 702,481.9 703,481.9 703,481.9 704,481.9 704,481.9 705,481.9 705,481.9 706,481.9 706,481.9 707,481.9 707,481.9 708,481.9 708,481.9 709,481.9 709,481.9 710,481.9 710,481.9 711,481.9 711,481.9 712,481.9 712,481.9 713,481.9 713,481.9 714,481.9 714,481.9 715,481.9 715,481.9 716,481.9 716,481.9 717,481.9 717,481.9 718,481.9 718,481.9 719,481.9 719,481.9 720,481.9 720,481.9 721,481.9 721,481.9 722,481.9 722,481.9 723,481.9 723,481.9 724,481.9 724,481.9 725,481.9 725,481.9 726,481.9 726,481.9 727,481.9 727,481.9 728,481.9 728,481.9 729,481.9 729,481.9 730,481.9 730,481.9 731,481.9 731,481.9 732,481.9 732,481.9 733,481.9 733,481.9 734,481.9 734,481.9 735,481.9 735,481.9 736,481.9 736,481.9 737,481.9 737,481.9 738,481.9 738,481.9 739,481.9 739,481.9 740,481.9 740,481.9 741,481.9 741,481.9 742,481.9 742,481.9 743,481.9 743,481.9 744,481.9 744,481.9 745,481.9 745,481.9 746,481.9 746,481.9 747,481.9 747,481.9 748,481.9 748,481.9 749,481.9 749,481.9 750,481.9 750,481.9 751,481.9 751,481.9 752,481.9 752,481.9 753,481.9 753,481.9 754,481.9 754,481.9 755,481.9 755,481.9 756,481.9 756,481.9 757,481.9 757,481.9 758,481.9 758,481.9 759,481.9 759,481.9 760,481.9 760,481.9 761,481.9 761,481.9 762,481.9 762,481.9 763,481.9 763,481.9 764,481.9 764,481.9 765,481.9 765,481.9 766,481.9 766,481.9 767,481.9 767,481.9 768,481.9 768,481.9 769,481.9 769,481.9 770,481.9 770,481.9 771,481.9 771,481.9 772,481.9 772,481.9 773,481.9 773,481.9 774,481.9 774,481.9 775,481.9 775,481.9 776,481.9 776,481.9 777,481.9 777,481.9 778,481.9 778,481.9 779,481.9 779,481.9 780,481.9 780,481.9 781,481.9 781,481.9 782,481.9 782,481.9 783,481.9 783,481.9 784,481.9 784,481.9 785,481.9 785,481.9 786,481.9 786,481.9 787,481.9 787,481.9 788,481.9 788,481.9 789,481.9 789,481.9 790,481.9 790,481.9 791,481.9 791,481.9 792,481.9 792,481.9 793,481.9 793,481.9 794,481.9 794,481.9 795,481.9 795,481.9 796,481.9 796,481.9 797,481.9 797,481.9 798,481.9 798,481.9 799,481.9 799,481.9 800,481.9 800,481.9 801,481.9 801,481.9 802,481.9 802,481.9 803,481.9 803,481.9 804,481.9 804,481.9 805,481.9 805,481.9 806,481.9 806,481.9 807,481.9 807,481.9 808,481.9 808,481.9 809,481.9 809,481.9 810,481.9 810,481.9 811,481.9 811,481.9 812,481.9 812,481.9 813,481.9 813,481.9 814,481.9 814,481.9 815,481.9 815,481.9 816,481.9 816,481.9 817,481.9 817,481.9 818,481.9 818,481.9 819,481.9 819,481.9 820,481.9 820,481.9 821,481.9 821,481.9 822,481.9 822,481.9 823,481.9 823,481.9 824,481.9 824,481.9 825,481.9 825,481.9 826,481.9 826,481.9 827,481.9 827,481.9 828,481.9 828,481.9 829,481.9 829,481.9 830,481.9 830,481.9 831,481.9 831,481.9 832,481.9 832,481.9 833,481.9 833,481.9 834,481.9 834,481.9 835,481.9 835,481.9 836,481.9 836,481.9 837,481.9 837,481.9 838,481.9 838,481.9 839,481.9 839,481.9 840,481.9 840,481.9 841,481.9 841,481.9 842,481.9 842,481.9 843,481.9 843,481.9 844,481.9 844,481.9 845,481.9 845,481.9 846,481.9 846,481.9 847,481.9 847,481.9 848,481.9 848,481.9 849,481.9 849,481.9 850,481.9 850,481.9 851,481.9 851,481.9 852,481.9 852,481.9 853,481.9 853,481.9 854,481.9 854,481.9 855,481.9 855,481.9 856,481.9 856,481.9 857,481.9 857,481.9 858,481.9 858,481.9 859,481.9 859,481.9 860,481.9 860,481.9 861,481.9 861,481.9 862,481.9 862,481.9 863,481.9 863,481.9 864,481.9 864,481.9 865,481.9 865,481.9 866,481.9 866,481.9 867,481.9 867,481.9 868,481.9 868,481.9 869,481.9 869,481.9 870,481.9 870,481.9 871,481.9 871,481.9 872,481.9 872,481.9 873,481.9 873,481.9 874,481.9 874,481.9 875,481.9 875,481.9 876,481.9 876,481.9 877,481.9 877,481.9 878,481.9 878,481.9 879,481.9 879,481.9 880,481.9 880,481.9 881,481.9 881,481.9 882,481.9 882,481.9 883,481.9 883,481.9 884,481.9 884,481.9 885,481.9 885,481.9 886,481.9 886,481.9 887,481.9 887,481.9 888,481.9 888,481.9 889,481.9 889,481.9 890,481.9 890,481.9 891,481.9 891,481.9 892,481.9 892,481.9 893,481.9 893,481.9 894,481.9 894,481.9 895,481.9 895,481.9 896,481.9 896,481.9 897,481.9 897,481.9 898,481.9 898,481.9 899,481.9 899,481.9 900,481.9 900,481.9 901,481.9 901,481.9 902,481.9 902,481.9 903,481.9 903,481.9 904,481.9 904,481.9 905,481.9 905,481.9 906,481.9 906,481.9 907,481.9 907,481.9 908,481.9 908,481.9 909,481.9 909,481.9 910,481.9 910,481.9 911,481.9 911,481.9 912,481.9 912,481.9 913,481.9 913,481.9 914,481.9 914,481.9 915,481.9 915,481.9 916,481.9 916,481.9 917,481.9 917,481.9 918,481.9 918,481.9 919,481.9 919,481.9 920,481.9 920,481.9 921,481.9 921,481.9 922,481.9 922,481.9 923,481.9 923,481.9 924,481.9 924,481.9 925,481.9 925,481.9 926,481.9 926,481.9 927,481.9 927,481.9 928,481.9 928,481.9 929,481.9 929,481.9 930,481.9 930,481.9 931,481.9 931,481.9 932,481.9 932,481.9 933,481.9 933,481.9 934,481.9 934,481.9 935,481.9 935,481.9 936,481.9 936,481.9 937,481.9 937,481.9 938,481.9 938,481.9 939,481.9 939,481.9 940,481.9 940,481.9 941,481.9 941,481.9 942,481.9 942,481.9 943,481.9 943,481.9 944,481.9 944,481.9 945,481.9 945,481.9 946,481.9 946,481.9 947,481.9 947,481.9 948,481.9 948,481.9 949,481.9 949,481.9 950,481.9 950,481.9 951,481.9 951,481.9 952,481.9 952,481.9 953,481.9 953,481.9 954,481.9 954,481.9 955,481.9 955,481.9 956,481.9 956,481.9 957,481.9 957,481.9 958,481.9 958,481.9 959,481.9 959,481.9 960,481.9 960,481.9 961,481.9 961,481.9 962,481.9 962,481.9 963,481.9 963,481.9 964,481.9 964,481.9 965,481.9 965,481.9 966,481.9 966,481.9 967,481.9 967,481.9 968,481.9 968,481.9 969,481.9 969,481.9 970,481.9 970,481.9 971,481.9 971,481.9 972,481.9 972,481.9 973,481.9 973,481.9 974,481.9 974,481.9 975,481.9 975,481.9 976,481.9 976,481.9 977,481.9 977,481.9 978,481.9 978,481.9 979,481.9 979,481.9 980,481.9 980,481.9 981,481.9 981,481.9 982,481.9 982,481.9 983,481.9 983,481.9 984,481.9 984,481.9 985,481.9 985,481.9 986,481.9 986,481.9 987,481.9 987,481.9 988,481.9 988,481.9 989,481.9 989,481.9 990,481.9 990,481.9 991,481.9 991,481.9 992,481.9 992,481.9 993,481.9 993,481.9 994,481.9 994,481.9 995,481.9 995,481.9 996,481.9 996,481.9 997,481.9 997,481.9 998,481.9 998,481.9 999,481.9 999,481.9 1000,481.9 1000,481.9 1001,481.9 1001,481.9 1002,481.9 1002,481.9 1003,481.9 1003,481.9 1004,481.9 1004,481.9 1005,481.9 1005,481.9 1006,481.9 1006,481.9 1007,481.9 1007,481.9 1008,481.9 1008,481.9 1009,481.9 1009,481.9 1010,481.9 1010,481.9 1011,481.9 1011,481.9 1012,481.9 1012,481.9 1013,481.9 1013,481.9 1014,481.9 1014,481.9 1015,481.9 1015,481.9 1016,481.9 1016,481.9 1017,481.9 1017,481.9 1018,481.9 1018,481.9 1019,481.9 1019,481.9 1020,481.9 1020,481.9 1021,481.9 1021,481.9 1022,481.9 1022,481.9 1023,481.9 1023,481.9 1024,481.9 1024,481.9 1025,481.9 1025,481.9 1026,481.9 1026,481.9 1027,481.9 1027,481.9 1028,481.9 1028,481.9 1029,481.9 1029,481.9 1030,481.9 1030,481.9 1031,481.9 1031,481.9 1032,481.9 1032,481.9 1033,481.9 1033,481.9 1034,481.9 1034,481.9 1035,481.9 1035,481.9 1036,481.9 1036,481.9 1037,481.9 1037,481.9 1038,481.9 1038,481.9 1039,481.9 1039,481.9 1040,481.9 1040,481.9 1041,481.9 1041,481.9 1042,481.9 1042,481.9 1043,481.9 1043,481.9 1044,481.9 1044,481.9 1045,481.9 1045,481.9 1046,481.9 1046,481.9 1047,481.9 1047,481.9 1048,481.9 1048,481.9 1049,481.9 1049,481.9 1050,481.9 1050,481.9 1051,481.9 1051,481.9 1052,481.9 1052,481.9 1053,481.9 1053,481.9 1054,481.9 1054,481.9 1055,481.9 1055,481.9 1056,481.9 1056,481.9 1057,481.9 1057,481.9 1058,481.9 1058,481.9 1059,481.9 1059,481.9 1060,481.9 1060,481.9 1061,481.9 1061,481.9 1062,481.9 1062,481.9 1063,481.9 1063,481.9 1064,481.9 1064,481.9 1065,481.9 1065,481.9 1066,481.9 1066,481.9 1067,481.9 1067,481.9 1068,481.9 1068,481.9 1069,481.9 1069,481.9 1070,481.9 1070,481.9 1071,481.9 1071,481.9 1072,481.9 1072,481.9 1073,481.9 1073,481.9 1074,481.9 1074,474.5 1075,474.5 1075,474.5 1076,474.5 1076,474.5 1077,474.5 1077,474.5 1078,474.5 1078,474.5 1079,474.5 1079,474.5 1080,474.5 1080,474.5 1081,474.5 1081,474.5 1082,474.5 1082,475.5 1083,475.5 1083,477.1 1084,477.1 1084,476.6 1085,476.6 1085,477.5 1086,477.5 1086,477.2 1087,477.2 1087,477.5 1088,477.5 1088,477.7 1089,477.7 1089,475.4 1090,475.4 1090,476.8 1091,476.8 1091,475.3 1092,475.3 1092,476.6 1093,476.6 1093,478.2 1094,478.2 1094,476.6 1095,476.6 1095,476.0 1096,476.0 1096,477.2 1097,477.2 1097,477.5 1098,477.5 1098,477.8 1099,477.8 1099,477.6 1100,477.6 1100,476.4 1101,476.4 1101,477.7 1102,477.7 1102,477.4 1103,477.4 1103,477.7 1104,477.7 1104,476.8 1105,476.8 1105,477.7 1106,477.7 1106,476.7 1107,476.7 1107,478.1 1108,478.1 1108,476.2 1109,476.2 1109,478.9 1110,478.9 1110,476.8 1111,476.8 1111,476.6 1112,476.6 1112,477.5 1113,477.5 1113,476.9 1114,476.9 1114,477.4 1115,477.4 1115,479.0 1116,479.0 1116,476.7 1117,476.7 1117,478.0 1118,478.0 1118,477.4 1119,477.4 1119,477.0 1120,477.0 1120,477.9 1121,477.9 1121,478.6 1122,478.6 1122,476.9 1123,476.9 1123,477.3 1124,477.3 1124,477.2 1125,477.2 1125,477.5 1126,477.5 1126,476.5 1127,476.5 1127,476.5 1128,476.5 1128,477.0 1129,477.0 1129,478.2 1130,478.2 1130,477.6 1131,477.6 1131,477.6 1132,477.6 1132,476.9 1133,476.9 1133,477.9 1134,477.9 1134,476.7 1135,476.7 1135,477.5 1136,477.5 1136,476.8 1137,476.8 1137,478.2 1138,478.2 1138,476.1 1139,476.1 1139,476.6 1140,476.6 1140,478.0 1141,478.0 1141,478.2 1142,478.2 1142,476.6 1143,476.6 1143,477.0 1144,477.0 1144,475.7 1145,475.7 1145,477.9 1146,477.9 1146,475.7 1147,475.7 1147,475.7 1148,475.7 1148,477.0 1149,477.0 1149,477.6 1150,477.6 1150,475.2 1151,475.2 1151,476.7 1152,476.7 1152,475.0 1153,475.0 1153,476.1 1154,476.1 1154,474.7 1155,474.7 1155,475.0 1156,475.0 1156,475.3 1157,475.3 1157,476.2 1158,476.2 1158,474.6 1159,474.6 1159,475.8 1160,475.8 1160,476.8 1161,476.8 1161,474.6 1162,474.6 1162,476.5 1163,476.5 1163,476.4 1164,476.4 1164,475.7 1165,475.7 1165,475.5 1166,475.5 1166,474.5 1167,474.5 1167,476.0 1168,476.0 1168,474.4 1169,474.4 1169,476.7 1170,476.7 1170,476.3 1171,476.3 1171,474.8 1172,474.8 1172,475.0 1173,475.0 1173,474.3 1174,474.3 1174,476.5 1175,476.5 1175,476.6 1176,476.6 1176,475.4 1177,475.4 1177,474.2 1178,474.2 1178,475.0 1179,475.0 1179,474.7 1180,474.7 1180,474.3 1181,474.3 1181,476.2 1182,476.2 1182,476.8 1183,476.8 1183,475.2 1184,475.2 1184,477.0 1185,477.0 1185,476.6 1186,476.6 1186,476.4 1187,476.4 1187,477.1 1188,477.1 1188,475.3 1189,475.3 1189,476.8 1190,476.8 1190,475.2 1191,475.2 1191,474.6 1192,474.6 1192,475.3 1193,475.3 1193,475.8 1194,475.8 1194,475.7 1195,475.7 1195,476.4 1196,476.4 1196,477.1 1197,477.1 1197,475.5 1198,475.5 1198,475.5 1199,475.5 1199,476.8 1200,476.8 1200,475.3 1201,475.3 1201,475.1 1202,475.1 1202,476.4 1203,476.4 1203,475.3 1204,475.3 1204,476.4 1205,476.4 1205,476.1 1206,476.1 1206,475.1 1207,475.1 1207,474.8 1208,474.8 1208,474.7 1209,474.7 1209,475.1 1210,475.1 1210,475.3 1211,475.3 1211,476.3 1212,476.3 1212,476.7 1213,476.7 1213,476.1 1214,476.1 1214,476.8 1215,476.8 1215,475.9 1216,475.9 1216,476.9 1217,476.9 1217,476.4 1218,476.4 1218,476.7 1219,476.7 1219,474.7 1220,474.7 1220,475.4 1221,475.4 1221,474.8 1222,474.8 1222,475.3 1223,475.3 1223,474.4 1224,474.4 1224,475.5 1225,475.5 1225,475.4 1226,475.4 1226,476.7 1227,476.7 1227,475.5 1228,475.5 1228,476.1 1229,476.1 1229,473.8 1230,473.8 1230,475.5 1231,475.5 1231,475.2 1232,475.2 1232,476.0 1233,476.0 1233,475.1 1234,475.1 1234,474.9 1235,474.9 1235,473.9 1236,473.9 1236,474.1 1237,474.1 1237,475.4 1238,475.4 1238,474.9 1239,474.9 1239,473.6 1240,473.6 1240,474.3 1241,474.3 1241,473.6 1242,473.6 1242,474.7 1243,474.7 1243,475.6 1244,475.6 1244,473.5 1245,473.5 1245,474.2 1246,474.2 1246,473.5 1247,473.5 1247,473.9 1248,473.9 1248,473.6 1249,473.6 1249,473.7 1250,473.7 1250,475.5 1251,475.5 1251,476.1 1252,476.1 1252,473.8 1253,473.8 1253,473.9 1254,473.9 1254,474.7 1255,474.7 1255,474.0 1256,474.0 1256,476.2 1257,476.2 1257,474.3 1258,474.3 1258,474.9 1259,474.9 1259,474.2 1260,474.2 1260,476.8 1261,476.8 1261,475.6 1262,475.6 1262,474.6 1263,474.6 1263,475.4 1264,475.4 1264,476.2 1265,476.2 1265,476.1 1266,476.1 1266,476.8 1267,476.8 1267,475.6 1268,475.6 1268,475.8 1269,475.8 1269,476.1 1270,476.1 1270,474.9 1271,474.9 1271,476.4 1272,476.4 1272,476.6 1273,476.6 1273,477.7 1274,477.7 1274,477.6 1275,477.6 1275,476.5 1276,476.5 1276,476.5 1277,476.5 1277,477.4 1278,477.4 1278,476.9 1279,476.9 1279,475.5 1280,475.5 1280,475.6 1281,475.6 1281,477.9 1282,477.9 1282,477.2 1283,477.2 1283,477.4 1284,477.4 1284,475.8 1285,475.8 1285,475.9 1286,475.9 1286,477.2 1287,477.2 1287,477.6 1288,477.6 1288,476.9 1289,476.9 1289,476.9 1290,476.9 1290,476.5 1291,476.5 1291,477.8 1292,477.8 1292,477.8 1293,477.8 1293,478.7 1294,478.7 1294,477.7 1295,477.7 1295,478.3 1296,478.3 1296,476.0 1297,476.0 1297,476.1 1298,476.1 1298,476.8 1299,476.8 1299,476.0 1300,476.0 1300,476.5 1301,476.5 1301,477.1 1302,477.1 1302,476.2 1303,476.2 1303,477.1 1304,477.1 1304,477.4 1305,477.4 1305,475.7 1306,475.7 1306,477.7 1307,477.7 1307,477.3 1308,477.3 1308,477.4 1309,477.4 1309,476.7 1310,476.7 1310,477.1 1311,477.1 1311,477.4 1312,477.4 1312,476.7 1313,476.7 1313,477.6 1314,477.6 1314,475.8 1315,475.8 1315,475.6 1316,475.6 1316,477.3 1317,477.3 1317,477.9 1318,477.9 1318,477.2 1319,477.2 1319,475.4 1320,475.4 1320,475.2 1321,475.2 1321,477.7 1322,477.7 1322,476.3 1323,476.3 1323,476.2 1324,476.2 1324,475.9 1325,475.9 1325,476.7 1326,476.7 1326,477.5 1327,477.5 1327,476.2 1328,476.2 1328,475.8 1329,475.8 1329,477.0 1330,477.0 1330,477.2 1331,477.2 1331,477.7 1332,477.7 1332,477.8 1333,477.8 1333,477.5 1334,477.5 1334,476.8 1335,476.8 1335,475.7 1336,475.7 1336,476.5 1337,476.5 1337,476.5 1338,476.5 1338,477.1 1339,477.1 1339,477.1 1340,477.1 1340,476.3 1341,476.3 1341,476.6 1342,476.6 1342,477.3 1343,477.3 1343,478.1 1344,478.1 1344,478.3 1345,478.3 1345,477.2 1346,477.2 1346,477.4 1347,477.4 1347,478.0 1348,478.0 1348,477.1 1349,477.1 1349,478.1 1350,478.1 1350,478.3 1351,478.3 1351,476.6 1352,476.6 1352,477.3 1353,477.3 1353,476.2 1354,476.2 1354,478.9 1355,478.9 1355,477.6 1356,477.6 1356,476.9 1357,476.9 1357,478.8 1358,478.8 1358,477.3 1359,477.3 1359,478.9 1360,478.9 1360,477.4 1361,477.4 1361,477.9 1362,477.9 1362,478.0 1363,478.0 1363,478.7 1364,478.7 1364,477.1 1365,477.1 1365,478.1 1366,478.1 1366,478.2 1367,478.2 1367,478.0 1368,478.0 1368,477.1 1369,477.1 1369,477.4 1370,477.4 1370,477.6 1371,477.6 1371,476.8 1372,476.8 1372,477.8 1373,477.8 1373,476.4 1374,476.4 1374,477.5 1375,477.5 1375,477.1 1376,477.1 1376,478.4 1377,478.4 1377,477.6 1378,477.6 1378,476.0 1379,476.0 1379,478.5 1380,478.5 1380,476.7 1381,476.7 1381,477.2 1382,477.2 1382,476.4 1383,476.4 1383,475.6 1384,475.6 1384,476.4 1385,476.4 1385,477.6 1386,477.6 1386,476.4 1387,476.4 1387,476.6 1388,476.6 1388,475.3 1389,475.3 1389,477.1 1390,477.1 1390,476.0 1391,476.0 1391,476.1 1392,476.1 1392,477.6 1393,477.6 1393,477.0 1394,477.0 1394,475.8 1395,475.8 1395,475.8 1396,475.8 1396,476.9 1397,476.9 1397,476.4 1398,476.4 1398,475.2 1399,475.2 1399,474.4 1400,474.4 1400,474.8 1401,474.8 1401,475.1 1402,475.1 1402,475.3 1403,475.3 1403,475.4 1404,475.4 1404,476.1 1405,476.1 1405,474.1 1406,474.1 1406,475.6 1407,475.6 1407,475.3 1408,475.3 1408,475.9 1409,475.9 1409,475.8 1410,475.8 1410,475.3 1411,475.3 1411,474.8 1412,474.8 1412,476.2 1413,476.2 1413,475.8 1414,475.8 1414,475.3 1415,475.3 1415,475.1 1416,475.1 1416,474.9 1417,474.9 1417,475.4 1418,475.4 1418,475.4 1419,475.4 1419,476.1 1420,476.1 1420,474.5 1421,474.5 1421,474.3 1422,474.3 1422,475.3 1423,475.3 1423,476.7 1424,476.7 1424,475.0 1425,475.0 1425,475.8 1426,475.8 1426,474.7 1427,474.7 1427,475.5 1428,475.5 1428,476.3 1429,476.3 1429,474.1 1430,474.1 1430,475.6 1431,475.6 1431,474.4 1432,474.4 1432,476.0 1433,476.0 1433,476.7 1434,476.7 1434,476.7 1435,476.7 1435,476.7 1436,476.7 1436,474.9 1437,474.9 1437,474.9 1438,474.9 1438,476.0 1439,476.0 1439,476.4 1440,476.4 1440,477.2 1441,477.2 1441,476.0 1442,476.0 1442,475.1 1443,475.1 1443,477.2 1444,477.2 1444,475.9 1445,475.9 1445,477.0 1446,477.0 1446,476.3 1447,476.3 1447,476.1 1448,476.1 1448,477.4 1449,477.4 1449,476.1 1450,476.1 1450,475.0 1451,475.0 1451,475.1 1452,475.1 1452,474.8 1453,474.8 1453,476.1 1454,476.1 1454,476.3 1455,476.3 1455,475.9 1456,475.9 1456,476.7 1457,476.7 1457,477.1 1458,477.1 1458,475.7 1459,475.7 1459,476.6 1460,476.6 1460,476.2 1461,476.2 1461,475.8 1462,475.8 1462,476.3 1463,476.3 1463,476.6 1464,476.6 1464,474.8 1465,474.8 1465,475.6 1466,475.6 1466,475.0 1467,475.0 1467,476.0 1468,476.0 1468,474.3 1469,474.3 1469,475.8 1470,475.8 1470,475.9 1471,475.9 1471,475.3 1472,475.3 1472,475.5 1473,475.5 1473,474.4 1474,474.4 1474,476.2 1475,476.2 1475,474.9 1476,474.9 1476,475.9 1477,475.9 1477,474.6 1478,474.6 1478,473.9 1479,473.9 1479,475.8 1480,475.8 1480,474.1 1481,474.1 1481,475.1 1482,475.1 1482,473.8 1483,473.8 1483,473.9 1484,473.9 1484,473.7 1485,473.7 1485,476.3 1486,476.3 1486,475.4 1487,475.4 1487,474.8 1488,474.8 1488,474.3 1489,474.3 1489,474.8 1490,474.8 1490,473.9 1491,473.9 1491,476.0 1492,476.0 1492,475.9 1493,475.9 1493,474.1 1494,474.1 1494,474.7 1495,474.7 1495,474.9 1496,474.9 1496,476.5 1497,476.5 1497,476.5 1498,476.5 1498,476.4 1499,476.4 1499,476.7 1500,476.7 1500,475.5 1501,475.5 1501,475.5 1502,475.5 1502,476.1 1503,476.1 1503,476.6 1504,476.6 1504,476.7 1505,476.7 1505,475.8 1506,475.8 1506,474.9 1507,474.9 1507,476.5 1508,476.5 1508,476.7 1509,476.7 1509,476.1 1510,476.1 1510,475.5 1511,475.5 1511,476.9 1512,476.9 1512,475.1 1513,475.1 1513,477.1 1514,477.1 1514,476.0 1515,476.0 1515,476.3 1516,476.3 1516,477.1 1517,477.1 1517,478.0 1518,478.0 1518,477.2 1519,477.2 1519,477.0 1520,477.0 1520,477.8 1521,477.8 1521,476.0 1522,476.0 1522,478.4 1523,478.4 1523,477.8 1524,477.8 1524,478.4 1525,478.4 1525,476.8 1526,476.8 1526,478.5 1527,478.5 1527,476.7 1528,476.7 1528,477.3 1529,477.3 1529,477.2 1530,477.2 1530,476.4 1531,476.4 1531,478.5 1532,478.5 1532,476.4 1533,476.4 1533,477.5 1534,477.5 1534,477.5 1535,477.5 1535,476.7 1536,476.7 1536,476.4 1537,476.4 1537,476.6 1538,476.6 1538,477.5 1539,477.5 1539,476.2 1540,476.2 1540,478.9 1541,478.9 1541,478.3 1542,478.3 1542,478.1 1543,478.1 1543,477.4 1544,477.4 1544,477.2 1545,477.2 1545,478.6 1546,478.6 1546,477.9 1547,477.9 1547,476.9 1548,476.9 1548,476.3 1549,476.3 1549,478.5 1550,478.5 1550,478.2 1551,478.2 1551,476.0 1552,476.0 1552,477.0 1553,477.0 1553,476.9 1554,476.9 1554,478.5 1555,478.5 1555,478.3 1556,478.3 1556,476.1 1557,476.1 1557,476.7 1558,476.7 1558,475.5 1559,475.5 1559,476.9 1560,476.9 1560,476.3 1561,476.3 1561,477.7 1562,477.7 1562,476.1 1563,476.1 1563,475.8 1564,475.8 1564,475.8 1565,475.8 1565,477.7 1566,477.7 1566,476.2 1567,476.2 1567,477.4 1568,477.4 1568,477.4 1569,477.4 1569,475.2 1570,475.2 1570,475.3 1571,475.3 1571,478.0 1572,478.0 1572,475.6 1573,475.6 1573,476.2 1574,476.2 1574,476.8 1575,476.8 1575,476.4 1576,476.4 1576,477.7 1577,477.7 1577,477.4 1578,477.4 1578,476.7 1579,476.7 1579,477.7 1580,477.7 1580,476.1 1581,476.1 1581,475.3 1582,475.3 1582,475.3 1583,475.3 1583,477.0 1584,477.0 1584,478.0 1585,478.0 1585,476.7 1586,476.7 1586,478.1 1587,478.1 1587,475.8 1588,475.8 1588,476.9 1589,476.9 1589,477.1 1590,477.1 1590,476.0 1591,476.0 1591,477.3 1592,477.3 1592,476.3 1593,476.3 1593,477.1 1594,477.1 1594,477.9 1595,477.9 1595,476.4 1596,476.4 1596,478.5 1597,478.5 1597,478.6 1598,478.6 1598,477.7 1599,477.7 1599,477.4 1600,477.4 1600,476.9 1601,476.9 1601,477.0 1602,477.0 1602,478.2 1603,478.2 1603,478.2 1604,478.2 1604,476.4 1605,476.4 1605,476.5 1606,476.5 1606,477.6 1607,477.6 1607,478.1 1608,478.1 1608,476.8 1609,476.8 1609,478.3 1610,478.3 1610,478.5 1611,478.5 1611,478.7 1612,478.7 1612,478.7 1613,478.7 1613,477.8 1614,477.8 1614,477.7 1615,477.7 1615,478.1 1616,478.1 1616,476.3 1617,476.3 1617,476.7 1618,476.7 1618,476.5 1619,476.5 1619,478.1 1620,478.1 1620,475.9 1621,475.9 1621,478.4 1622,478.4 1622,478.3 1623,478.3 1623,478.3 1624,478.3 1624,476.7 1625,476.7 1625,477.1 1626,477.1 1626,477.6 1627,477.6 1627,475.6 1628,475.6 1628,477.8 1629,477.8 1629,477.7 1630,477.7 1630,475.2 1631,475.2 1631,477.2 1632,477.2 1632,476.7 1633,476.7 1633,476.7 1634,476.7 1634,475.8 1635,475.8 1635,477.4 1636,477.4 1636,475.7 1637,475.7 1637,476.1 1638,476.1 1638,477.0 1639,477.0 1639,475.4 1640,475.4 1640,476.1 1641,476.1 1641,476.1 1642,476.1 1642,476.0 1643,476.0 1643,474.7 1644,474.7 1644,476.5 1645,476.5 1645,476.4 1646,476.4 1646,475.8 1647,475.8 1647,474.4 1648,474.4 1648,476.4 1649,476.4 1649,473.8 1650,473.8 1650,474.8 1651,474.8 1651,474.3 1652,474.3 1652,474.9 1653,474.9 1653,475.2 1654,475.2 1654,476.0 1655,476.0 1655,475.5 1656,475.5 1656,475.8 1657,475.8 1657,474.5 1658,474.5 1658,474.8 1659,474.8 1659,476.2 1660,476.2 1660,476.3 1661,476.3 1661,476.1 1662,476.1 1662,473.8 1663,473.8 1663,474.5 1664,474.5 1664,473.6 1665,473.6 1665,474.5 1666,474.5 1666,475.6 1667,475.6 1667,474.6 1668,474.6 1668,473.7 1669,473.7 1669,474.6 1670,474.6 1670,475.7 1671,475.7 1671,474.5 1672,474.5 1672,475.2 1673,475.2 1673,476.4 1674,476.4 1674,474.2 1675,474.2 1675,474.8 1676,474.8 1676,476.8 1677,476.8 1677,475.1 1678,475.1 1678,476.2 1679,476.2 1679,474.4 1680,474.4 1680,475.0 1681,475.0 1681,475.0 1682,475.0 1682,474.9 1683,474.9 1683,475.4 1684,475.4 1684,475.1 1685,475.1 1685,476.0 1686,476.0 1686,475.0 1687,475.0 1687,476.9 1688,476.9 1688,474.6 1689,474.6 1689,475.2 1690,475.2 1690,474.9 1691,474.9 1691,474.9 1692,474.9 1692,476.3 1693,476.3 1693,474.7 1694,474.7 1694,475.7 1695,475.7 1695,476.0 1696,476.0 1696,475.1 1697,475.1 1697,476.5 1698,476.5 1698,475.2 1699,475.2 1699,476.2 1700,476.2 1700,475.0 1701,475.0 1701,475.5 1702,475.5 1702,475.9 1703,475.9 1703,475.2 1704,475.2 1704,476.6 1705,476.6 1705,474.5 1706,474.5 1706,476.3 1707,476.3 1707,475.6 1708,475.6 1708,476.7 1709,476.7 1709,475.9 1710,475.9 1710,475.3 1711,475.3 1711,474.6 1712,474.6 1712,475.7 1713,475.7 1713,475.8 1714,475.8 1714,474.4 1715,474.4 1715,475.4 1716,475.4 1716,475.1 1717,475.1 1717,475.9 1718,475.9 1718,475.9 1719,475.9 1719,476.3 1720,476.3 1720,474.5 1721,474.5 1721,474.1 1722,474.1 1722,476.4 1723,476.4 1723,475.9 1724,475.9 1724,476.3 1725,476.3 1725,476.5 1726,476.5 1726,475.9 1727,475.9 1727,476.0 1728,476.0 1728,474.6 1729,474.6 1729,475.1 1730,475.1 1730,474.0 1731,474.0 1731,474.5 1732,474.5 1732,476.4 1733,476.4 1733,475.5 1734,475.5 1734,475.7 1735,475.7 1735,474.7 1736,474.7 1736,475.9 1737,475.9 1737,476.6 1738,476.6 1738,475.5 1739,475.5 1739,476.5 1740,476.5 1740,476.8 1741,476.8 1741,475.2 1742,475.2 1742,475.1 1743,475.1 1743,475.5 1744,475.5 1744,475.5 1745,475.5 1745,476.6 1746,476.6 1746,474.6 1747,474.6 1747,476.4 1748,476.4 1748,476.3 1749,476.3 1749,474.8 1750,474.8 1750,475.5 1751,475.5 1751,477.5 1752,477.5 1752,475.6 1753,475.6 1753,475.2 1754,475.2 1754,477.5 1755,477.5 1755,477.7 1756,477.7 1756,475.5 1757,475.5 1757,478.0 1758,478.0 1758,477.6 1759,477.6 1759,477.3 1760,477.3 1760,478.1 1761,478.1 1761,478.1 1762,478.1 1762,475.9 1763,475.9 1763,477.3 1764,477.3 1764,478.4 1765,478.4 1765,477.7 1766,477.7 1766,476.5 1767,476.5 1767,478.3 1768,478.3 1768,478.2 1769,478.2 1769,478.2 1770,478.2 1770,477.3 1771,477.3 1771,477.0 1772,477.0 1772,477.8 1773,477.8 1773,476.9 1774,476.9 1774,476.9 1775,476.9 1775,478.9 1776,478.9 1776,477.2 1777,477.2 1777,477.8 1778,477.8 1778,476.8 1779,476.8 1779,478.4 1780,478.4 1780,479.0 1781,479.0 1781,476.7 1782,476.7 1782,477.3 1783,477.3 1783,478.5 1784,478.5 1784,477.2 1785,477.2 1785,477.7 1786,477.7 1786,478.5 1787,478.5 1787,478.6 1788,478.6 1788,478.0 1789,478.0 1789,477.0 1790,477.0 1790,477.2 1791,477.2 1791,477.9 1792,477.9 1792,476.2 1793,476.2 1793,476.3 1794,476.3 1794,476.5 1795,476.5 1795,477.2 1796,477.2 1796,476.0 1797,476.0 1797,475.9 1798,475.9 1798,478.4 1799,478.4 1799,476.0 1800,476.0 1800,476.6 1801,476.6 1801,477.2 1802,477.2 1802,477.6 1803,477.6 1803,476.7 1804,476.7 1804,476.3 1805,476.3 1805,476.3 1806,476.3 1806,476.5 1807,476.5 1807,478.0 1808,478.0 1808,477.1 1809,477.1 1809,476.5 1810,476.5 1810,477.1 1811,477.1 1811,475.6 1812,475.6 1812,475.5 1813,475.5 1813,475.3 1814,475.3 1814,477.8 1815,477.8 1815,476.3 1816,476.3 1816,475.3 1817,475.3 1817,476.9 1818,476.9 1818,477.2 1819,477.2 1819,476.1 1820,476.1 1820,477.7 1821,477.7 1821,476.4 1822,476.4 1822,477.4 1823,477.4 1823,477.5 1824,477.5 1824,475.7 1825,475.7 1825,476.1 1826,476.1 1826,476.0 1827,476.0 1827,475.4 1828,475.4 1828,477.6 1829,477.6 1829,475.6 1830,475.6 1830,477.4 1831,477.4 1831,477.0 1832,477.0 1832,475.4 1833,475.4 1833,478.1 1834,478.1 1834,476.2 1835,476.2 1835,478.1 1836,478.1 1836,476.7 1837,476.7 1837,475.6 1838,475.6 1838,476.7 1839,476.7 1839,476.3 1840,476.3 1840,476.0 1841,476.0 1841,478.0 1842,478.0 1842,476.9 1843,476.9 1843,477.4 1844,477.4 1844,477.7 1845,477.7 1845,476.1 1846,476.1 1846,475.9 1847,475.9 1847,476.1 1848,476.1 1848,477.6 1849,477.6 1849,477.1 1850,477.1 1850,476.0 1851,476.0 1851,477.1 1852,477.1 1852,475.8 1853,475.8 1853,476.9 1854,476.9 1854,478.0 1855,478.0 1855,477.4 1856,477.4 1856,476.3 1857,476.3 1857,478.4 1858,478.4 1858,476.2 1859,476.2 1859,476.2 1860,476.2 1860,476.1 1861,476.1 1861,477.1 1862,477.1 1862,478.2 1863,478.2 1863,476.2 1864,476.2 1864,478.0 1865,478.0 1865,476.7 1866,476.7 1866,478.0 1867,478.0 1867,478.0 1868,478.0 1868,477.4 1869,477.4 1869,476.1 1870,476.1 1870,475.7 1871,475.7 1871,476.2 1872,476.2 1872,477.7 1873,477.7 1873,477.0 1874,477.0 1874,475.5 1875,475.5 1875,476.2 1876,476.2 1876,476.3 1877,476.3 1877,475.2 1878,475.2 1878,475.8 1879,475.8 1879,474.4 1880,474.4 1880,476.9 1881,476.9 1881,475.5 1882,475.5 1882,476.0 1883,476.0 1883,476.8 1884,476.8 1884,474.8 1885,474.8 1885,475.1 1886,475.1 1886,474.8 1887,474.8 1887,476.5 1888,476.5 1888,474.4 1889,474.4 1889,473.7 1890,473.7 1890,475.2 1891,475.2 1891,489.8 1890,489.8 1890,491.3 1889,491.3 1889,490.6 1888,490.6 1888,488.5 1887,488.5 1887,490.2 1886,490.2 1886,489.9 1885,489.9 1885,490.2 1884,490.2 1884,488.2 1883,488.2 1883,489.0 1882,489.0 1882,489.5 1881,489.5 1881,488.1 1880,488.1 1880,490.6 1879,490.6 1879,489.2 1878,489.2 1878,489.8 1877,489.8 1877,488.7 1876,488.7 1876,488.8 1875,488.8 1875,489.5 1874,489.5 1874,488.0 1873,488.0 1873,487.3 1872,487.3 1872,488.8 1871,488.8 1871,489.3 1870,489.3 1870,488.9 1869,488.9 1869,487.6 1868,487.6 1868,487.0 1867,487.0 1867,487.0 1866,487.0 1866,488.3 1865,488.3 1865,487.0 1864,487.0 1864,488.8 1863,488.8 1863,486.8 1862,486.8 1862,487.9 1861,487.9 1861,488.9 1860,488.9 1860,488.8 1859,488.8 1859,488.8 1858,488.8 1858,486.6 1857,486.6 1857,488.7 1856,488.7 1856,487.6 1855,487.6 1855,487.0 1854,487.0 1854,488.1 1853,488.1 1853,489.2 1852,489.2 1852,487.9 1851,487.9 1851,489.0 1850,489.0 1850,487.9 1849,487.9 1849,487.4 1848,487.4 1848,488.9 1847,488.9 1847,489.1 1846,489.1 1846,488.9 1845,488.9 1845,487.3 1844,487.3 1844,487.6 1843,487.6 1843,488.1 1842,488.1 1842,487.0 1841,487.0 1841,489.0 1840,489.0 1840,488.7 1839,488.7 1839,488.3 1838,488.3 1838,489.4 1837,489.4 1837,488.3 1836,488.3 1836,486.9 1835,486.9 1835,488.8 1834,488.8 1834,486.9 1833,486.9 1833,489.6 1832,489.6 1832,488.0 1831,488.0 1831,487.6 1830,487.6 1830,489.4 1829,489.4 1829,487.4 1828,487.4 1828,489.6 1827,489.6 1827,489.0 1826,489.0 1826,488.9 1825,488.9 1825,489.3 1824,489.3 1824,487.5 1823,487.5 1823,487.6 1822,487.6 1822,488.6 1821,488.6 1821,487.3 1820,487.3 1820,488.9 1819,488.9 1819,487.8 1818,487.8 1818,488.1 1817,488.1 1817,489.7 1816,489.7 1816,488.7 1815,488.7 1815,487.2 1814,487.2 1814,489.7 1813,489.7 1813,489.5 1812,489.5 1812,489.4 1811,489.4 1811,487.9 1810,487.9 1810,488.5 1809,488.5 1809,487.9 1808,487.9 1808,487.0 1807,487.0 1807,488.5 1806,488.5 1806,488.7 1805,488.7 1805,488.7 1804,488.7 1804,488.3 1803,488.3 1803,487.4 1802,487.4 1802,487.8 1801,487.8 1801,488.4 1800,488.4 1800,489.0 1799,489.0 1799,486.6 1798,486.6 1798,489.1 1797,489.1 1797,489.0 1796,489.0 1796,487.8 1795,487.8 1795,488.5 1794,488.5 1794,488.7 1793,488.7 1793,488.8 1792,488.8 1792,487.1 1791,487.1 1791,487.8 1790,487.8 1790,488.0 1789,488.0 1789,487.0 1788,487.0 1788,486.4 1787,486.4 1787,486.5 1786,486.5 1786,487.3 1785,487.3 1785,487.8 1784,487.8 1784,486.5 1783,486.5 1783,487.7 1782,487.7 1782,488.3 1781,488.3 1781,486.0 1780,486.0 1780,486.6 1779,486.6 1779,488.2 1778,488.2 1778,487.2 1777,487.2 1777,487.8 1776,487.8 1776,486.1 1775,486.1 1775,488.1 1774,488.1 1774,488.1 1773,488.1 1773,487.2 1772,487.2 1772,488.0 1771,488.0 1771,487.7 1770,487.7 1770,486.8 1769,486.8 1769,486.8 1768,486.8 1768,486.7 1767,486.7 1767,488.5 1766,488.5 1766,487.3 1765,487.3 1765,486.6 1764,486.6 1764,487.7 1763,487.7 1763,489.1 1762,489.1 1762,486.9 1761,486.9 1761,486.9 1760,486.9 1760,487.7 1759,487.7 1759,487.4 1758,487.4 1758,487.0 1757,487.0 1757,489.5 1756,489.5 1756,487.3 1755,487.3 1755,487.5 1754,487.5 1754,489.8 1753,489.8 1753,489.4 1752,489.4 1752,487.5 1751,487.5 1751,489.5 1750,489.5 1750,490.2 1749,490.2 1749,488.7 1748,488.7 1748,488.6 1747,488.6 1747,490.4 1746,490.4 1746,488.4 1745,488.4 1745,489.5 1744,489.5 1744,489.5 1743,489.5 1743,489.9 1742,489.9 1742,489.8 1741,489.8 1741,488.2 1740,488.2 1740,488.5 1739,488.5 1739,489.5 1738,489.5 1738,488.4 1737,488.4 1737,489.1 1736,489.1 1736,490.3 1735,490.3 1735,489.3 1734,489.3 1734,489.5 1733,489.5 1733,488.6 1732,488.6 1732,490.5 1731,490.5 1731,491.0 1730,491.0 1730,489.9 1729,489.9 1729,490.4 1728,490.4 1728,489.0 1727,489.0 1727,489.1 1726,489.1 1726,488.5 1725,488.5 1725,488.7 1724,488.7 1724,489.1 1723,489.1 1723,488.6 1722,488.6 1722,490.9 1721,490.9 1721,490.5 1720,490.5 1720,488.7 1719,488.7 1719,489.1 1718,489.1 1718,489.1 1717,489.1 1717,489.9 1716,489.9 1716,489.6 1715,489.6 1715,490.6 1714,490.6 1714,489.2 1713,489.2 1713,489.3 1712,489.3 1712,490.4 1711,490.4 1711,489.7 1710,489.7 1710,489.1 1709,489.1 1709,488.3 1708,488.3 1708,489.4 1707,489.4 1707,488.7 1706,488.7 1706,490.5 1705,490.5 1705,488.4 1704,488.4 1704,489.8 1703,489.8 1703,489.1 1702,489.1 1702,489.5 1701,489.5 1701,490.0 1700,490.0 1700,488.8 1699,488.8 1699,489.8 1698,489.8 1698,488.5 1697,488.5 1697,489.9 1696,489.9 1696,489.0 1695,489.0 1695,489.3 1694,489.3 1694,490.3 1693,490.3 1693,488.7 1692,488.7 1692,490.1 1691,490.1 1691,490.1 1690,490.1 1690,489.8 1689,489.8 1689,490.4 1688,490.4 1688,488.1 1687,488.1 1687,490.0 1686,490.0 1686,489.0 1685,489.0 1685,489.9 1684,489.9 1684,489.6 1683,489.6 1683,490.1 1682,490.1 1682,490.0 1681,490.0 1681,490.0 1680,490.0 1680,490.6 1679,490.6 1679,488.8 1678,488.8 1678,489.9 1677,489.9 1677,488.2 1676,488.2 1676,490.2 1675,490.2 1675,490.8 1674,490.8 1674,488.6 1673,488.6 1673,489.8 1672,489.8 1672,490.5 1671,490.5 1671,489.3 1670,489.3 1670,490.4 1669,490.4 1669,491.3 1668,491.3 1668,490.4 1667,490.4 1667,489.4 1666,489.4 1666,490.5 1665,490.5 1665,491.4 1664,491.4 1664,490.5 1663,490.5 1663,491.2 1662,491.2 1662,488.9 1661,488.9 1661,488.7 1660,488.7 1660,488.8 1659,488.8 1659,490.2 1658,490.2 1658,490.5 1657,490.5 1657,489.2 1656,489.2 1656,489.5 1655,489.5 1655,489.0 1654,489.0 1654,489.8 1653,489.8 1653,490.1 1652,490.1 1652,490.7 1651,490.7 1651,490.2 1650,490.2 1650,491.2 1649,491.2 1649,488.6 1648,488.6 1648,490.6 1647,490.6 1647,489.2 1646,489.2 1646,488.6 1645,488.6 1645,488.5 1644,488.5 1644,490.3 1643,490.3 1643,489.0 1642,489.0 1642,488.9 1641,488.9 1641,488.9 1640,488.9 1640,489.6 1639,489.6 1639,488.0 1638,488.0 1638,488.9 1637,488.9 1637,489.3 1636,489.3 1636,487.6 1635,487.6 1635,489.2 1634,489.2 1634,488.3 1633,488.3 1633,488.3 1632,488.3 1632,487.8 1631,487.8 1631,489.8 1630,489.8 1630,487.3 1629,487.3 1629,487.2 1628,487.2 1628,489.4 1627,489.4 1627,487.4 1626,487.4 1626,487.9 1625,487.9 1625,488.3 1624,488.3 1624,486.7 1623,486.7 1623,486.7 1622,486.7 1622,486.6 1621,486.6 1621,489.1 1620,489.1 1620,486.9 1619,486.9 1619,488.5 1618,488.5 1618,488.3 1617,488.3 1617,488.7 1616,488.7 1616,486.9 1615,486.9 1615,487.3 1614,487.3 1614,487.2 1613,487.2 1613,486.3 1612,486.3 1612,486.3 1611,486.3 1611,486.5 1610,486.5 1610,486.7 1609,486.7 1609,488.2 1608,488.2 1608,486.9 1607,486.9 1607,487.4 1606,487.4 1606,488.5 1605,488.5 1605,488.6 1604,488.6 1604,486.8 1603,486.8 1603,486.8 1602,486.8 1602,488.0 1601,488.0 1601,488.1 1600,488.1 1600,487.6 1599,487.6 1599,487.3 1598,487.3 1598,486.4 1597,486.4 1597,486.5 1596,486.5 1596,488.6 1595,488.6 1595,487.1 1594,487.1 1594,487.9 1593,487.9 1593,488.7 1592,488.7 1592,487.7 1591,487.7 1591,489.0 1590,489.0 1590,487.9 1589,487.9 1589,488.1 1588,488.1 1588,489.2 1587,489.2 1587,486.9 1586,486.9 1586,488.3 1585,488.3 1585,487.0 1584,487.0 1584,488.0 1583,488.0 1583,489.7 1582,489.7 1582,489.7 1581,489.7 1581,488.9 1580,488.9 1580,487.3 1579,487.3 1579,488.3 1578,488.3 1578,487.6 1577,487.6 1577,487.3 1576,487.3 1576,488.6 1575,488.6 1575,488.2 1574,488.2 1574,488.8 1573,488.8 1573,489.4 1572,489.4 1572,487.0 1571,487.0 1571,489.7 1570,489.7 1570,489.8 1569,489.8 1569,487.6 1568,487.6 1568,487.6 1567,487.6 1567,488.8 1566,488.8 1566,487.3 1565,487.3 1565,489.2 1564,489.2 1564,489.2 1563,489.2 1563,488.9 1562,488.9 1562,487.3 1561,487.3 1561,488.7 1560,488.7 1560,488.1 1559,488.1 1559,489.5 1558,489.5 1558,488.3 1557,488.3 1557,488.9 1556,488.9 1556,486.7 1555,486.7 1555,486.5 1554,486.5 1554,488.1 1553,488.1 1553,488.0 1552,488.0 1552,489.0 1551,489.0 1551,486.8 1550,486.8 1550,486.5 1549,486.5 1549,488.7 1548,488.7 1548,488.1 1547,488.1 1547,487.1 1546,487.1 1546,486.4 1545,486.4 1545,487.8 1544,487.8 1544,487.6 1543,487.6 1543,486.9 1542,486.9 1542,486.7 1541,486.7 1541,486.1 1540,486.1 1540,488.8 1539,488.8 1539,487.5 1538,487.5 1538,488.4 1537,488.4 1537,488.6 1536,488.6 1536,488.3 1535,488.3 1535,487.5 1534,487.5 1534,487.5 1533,487.5 1533,488.6 1532,488.6 1532,486.5 1531,486.5 1531,488.6 1530,488.6 1530,487.8 1529,487.8 1529,487.7 1528,487.7 1528,488.3 1527,488.3 1527,486.5 1526,486.5 1526,488.2 1525,488.2 1525,486.6 1524,486.6 1524,487.2 1523,487.2 1523,486.6 1522,486.6 1522,489.0 1521,489.0 1521,487.2 1520,487.2 1520,488.0 1519,488.0 1519,487.8 1518,487.8 1518,487.0 1517,487.0 1517,487.9 1516,487.9 1516,488.7 1515,488.7 1515,489.0 1514,489.0 1514,487.9 1513,487.9 1513,489.9 1512,489.9 1512,488.1 1511,488.1 1511,489.5 1510,489.5 1510,488.9 1509,488.9 1509,488.3 1508,488.3 1508,488.5 1507,488.5 1507,490.1 1506,490.1 1506,489.2 1505,489.2 1505,488.3 1504,488.3 1504,488.4 1503,488.4 1503,488.9 1502,488.9 1502,489.5 1501,489.5 1501,489.5 1500,489.5 1500,488.3 1499,488.3 1499,488.6 1498,488.6 1498,488.5 1497,488.5 1497,488.5 1496,488.5 1496,490.1 1495,490.1 1495,490.3 1494,490.3 1494,490.9 1493,490.9 1493,489.1 1492,489.1 1492,489.0 1491,489.0 1491,491.1 1490,491.1 1490,490.2 1489,490.2 1489,490.7 1488,490.7 1488,490.2 1487,490.2 1487,489.6 1486,489.6 1486,488.7 1485,488.7 1485,491.3 1484,491.3 1484,491.1 1483,491.1 1483,491.2 1482,491.2 1482,489.9 1481,489.9 1481,490.9 1480,490.9 1480,489.2 1479,489.2 1479,491.1 1478,491.1 1478,490.4 1477,490.4 1477,489.1 1476,489.1 1476,490.1 1475,490.1 1475,488.8 1474,488.8 1474,490.6 1473,490.6 1473,489.5 1472,489.5 1472,489.7 1471,489.7 1471,489.1 1470,489.1 1470,489.2 1469,489.2 1469,490.7 1468,490.7 1468,489.0 1467,489.0 1467,490.0 1466,490.0 1466,489.4 1465,489.4 1465,490.2 1464,490.2 1464,488.4 1463,488.4 1463,488.7 1462,488.7 1462,489.2 1461,489.2 1461,488.8 1460,488.8 1460,488.4 1459,488.4 1459,489.3 1458,489.3 1458,487.9 1457,487.9 1457,488.3 1456,488.3 1456,489.1 1455,489.1 1455,488.7 1454,488.7 1454,488.9 1453,488.9 1453,490.2 1452,490.2 1452,489.9 1451,489.9 1451,490.0 1450,490.0 1450,488.9 1449,488.9 1449,487.6 1448,487.6 1448,488.9 1447,488.9 1447,488.7 1446,488.7 1446,488.0 1445,488.0 1445,489.1 1444,489.1 1444,487.8 1443,487.8 1443,489.9 1442,489.9 1442,489.0 1441,489.0 1441,487.8 1440,487.8 1440,488.6 1439,488.6 1439,489.0 1438,489.0 1438,490.1 1437,490.1 1437,490.1 1436,490.1 1436,488.3 1435,488.3 1435,488.3 1434,488.3 1434,488.3 1433,488.3 1433,489.0 1432,489.0 1432,490.6 1431,490.6 1431,489.4 1430,489.4 1430,490.9 1429,490.9 1429,488.7 1428,488.7 1428,489.5 1427,489.5 1427,490.3 1426,490.3 1426,489.2 1425,489.2 1425,490.0 1424,490.0 1424,488.3 1423,488.3 1423,489.7 1422,489.7 1422,490.7 1421,490.7 1421,490.5 1420,490.5 1420,488.9 1419,488.9 1419,489.6 1418,489.6 1418,489.6 1417,489.6 1417,490.1 1416,490.1 1416,489.9 1415,489.9 1415,489.7 1414,489.7 1414,489.2 1413,489.2 1413,488.8 1412,488.8 1412,490.2 1411,490.2 1411,489.7 1410,489.7 1410,489.2 1409,489.2 1409,489.1 1408,489.1 1408,489.7 1407,489.7 1407,489.4 1406,489.4 1406,490.9 1405,490.9 1405,488.9 1404,488.9 1404,489.6 1403,489.6 1403,489.7 1402,489.7 1402,489.9 1401,489.9 1401,490.2 1400,490.2 1400,490.6 1399,490.6 1399,489.8 1398,489.8 1398,488.6 1397,488.6 1397,488.1 1396,488.1 1396,489.2 1395,489.2 1395,489.2 1394,489.2 1394,488.0 1393,488.0 1393,487.4 1392,487.4 1392,488.9 1391,488.9 1391,489.0 1390,489.0 1390,487.9 1389,487.9 1389,489.7 1388,489.7 1388,488.4 1387,488.4 1387,488.6 1386,488.6 1386,487.4 1385,487.4 1385,488.6 1384,488.6 1384,489.4 1383,489.4 1383,488.6 1382,488.6 1382,487.8 1381,487.8 1381,488.3 1380,488.3 1380,486.5 1379,486.5 1379,489.0 1378,489.0 1378,487.4 1377,487.4 1377,486.6 1376,486.6 1376,487.9 1375,487.9 1375,487.5 1374,487.5 1374,488.6 1373,488.6 1373,487.2 1372,487.2 1372,488.2 1371,488.2 1371,487.4 1370,487.4 1370,487.6 1369,487.6 1369,487.9 1368,487.9 1368,487.0 1367,487.0 1367,486.8 1366,486.8 1366,486.9 1365,486.9 1365,487.9 1364,487.9 1364,486.3 1363,486.3 1363,487.0 1362,487.0 1362,487.1 1361,487.1 1361,487.6 1360,487.6 1360,486.1 1359,486.1 1359,487.7 1358,487.7 1358,486.2 1357,486.2 1357,488.1 1356,488.1 1356,487.4 1355,487.4 1355,486.1 1354,486.1 1354,488.8 1353,488.8 1353,487.7 1352,487.7 1352,488.4 1351,488.4 1351,486.7 1350,486.7 1350,486.9 1349,486.9 1349,487.9 1348,487.9 1348,487.0 1347,487.0 1347,487.6 1346,487.6 1346,487.8 1345,487.8 1345,486.7 1344,486.7 1344,486.9 1343,486.9 1343,487.7 1342,487.7 1342,488.4 1341,488.4 1341,488.7 1340,488.7 1340,487.9 1339,487.9 1339,487.9 1338,487.9 1338,488.5 1337,488.5 1337,488.5 1336,488.5 1336,489.3 1335,489.3 1335,488.2 1334,488.2 1334,487.5 1333,487.5 1333,487.2 1332,487.2 1332,487.3 1331,487.3 1331,487.8 1330,487.8 1330,488.0 1329,488.0 1329,489.2 1328,489.2 1328,488.8 1327,488.8 1327,487.5 1326,487.5 1326,488.3 1325,488.3 1325,489.1 1324,489.1 1324,488.8 1323,488.8 1323,488.7 1322,488.7 1322,487.3 1321,487.3 1321,489.8 1320,489.8 1320,489.6 1319,489.6 1319,487.8 1318,487.8 1318,487.1 1317,487.1 1317,487.7 1316,487.7 1316,489.4 1315,489.4 1315,489.2 1314,489.2 1314,487.4 1313,487.4 1313,488.3 1312,488.3 1312,487.6 1311,487.6 1311,487.9 1310,487.9 1310,488.3 1309,488.3 1309,487.6 1308,487.6 1308,487.7 1307,487.7 1307,487.3 1306,487.3 1306,489.3 1305,489.3 1305,487.6 1304,487.6 1304,487.9 1303,487.9 1303,488.8 1302,488.8 1302,487.9 1301,487.9 1301,488.5 1300,488.5 1300,489.0 1299,489.0 1299,488.2 1298,488.2 1298,488.9 1297,488.9 1297,489.0 1296,489.0 1296,486.7 1295,486.7 1295,487.3 1294,487.3 1294,486.3 1293,486.3 1293,487.2 1292,487.2 1292,487.2 1291,487.2 1291,488.5 1290,488.5 1290,488.1 1289,488.1 1289,488.1 1288,488.1 1288,487.4 1287,487.4 1287,487.8 1286,487.8 1286,489.1 1285,489.1 1285,489.2 1284,489.2 1284,487.6 1283,487.6 1283,487.8 1282,487.8 1282,487.1 1281,487.1 1281,489.4 1280,489.4 1280,489.5 1279,489.5 1279,488.1 1278,488.1 1278,487.6 1277,487.6 1277,488.5 1276,488.5 1276,488.5 1275,488.5 1275,487.4 1274,487.4 1274,487.3 1273,487.3 1273,488.4 1272,488.4 1272,488.6 1271,488.6 1271,490.1 1270,490.1 1270,488.9 1269,488.9 1269,489.2 1268,489.2 1268,489.4 1267,489.4 1267,488.2 1266,488.2 1266,488.9 1265,488.9 1265,488.8 1264,488.8 1264,489.6 1263,489.6 1263,490.4 1262,490.4 1262,489.4 1261,489.4 1261,488.2 1260,488.2 1260,490.8 1259,490.8 1259,490.1 1258,490.1 1258,490.7 1257,490.7 1257,488.8 1256,488.8 1256,491.0 1255,491.0 1255,490.3 1254,490.3 1254,491.1 1253,491.1 1253,491.2 1252,491.2 1252,488.9 1251,488.9 1251,489.5 1250,489.5 1250,491.3 1249,491.3 1249,491.4 1248,491.4 1248,491.1 1247,491.1 1247,491.5 1246,491.5 1246,490.8 1245,490.8 1245,491.5 1244,491.5 1244,489.4 1243,489.4 1243,490.3 1242,490.3 1242,491.4 1241,491.4 1241,490.7 1240,490.7 1240,491.4 1239,491.4 1239,490.1 1238,490.1 1238,489.6 1237,489.6 1237,490.9 1236,490.9 1236,491.1 1235,491.1 1235,490.1 1234,490.1 1234,489.9 1233,489.9 1233,489.0 1232,489.0 1232,489.8 1231,489.8 1231,489.5 1230,489.5 1230,491.2 1229,491.2 1229,488.9 1228,488.9 1228,489.5 1227,489.5 1227,488.3 1226,488.3 1226,489.6 1225,489.6 1225,489.5 1224,489.5 1224,490.6 1223,490.6 1223,489.7 1222,489.7 1222,490.2 1221,490.2 1221,489.6 1220,489.6 1220,490.3 1219,490.3 1219,488.3 1218,488.3 1218,488.6 1217,488.6 1217,488.1 1216,488.1 1216,489.1 1215,489.1 1215,488.2 1214,488.2 1214,488.9 1213,488.9 1213,488.3 1212,488.3 1212,488.7 1211,488.7 1211,489.7 1210,489.7 1210,489.9 1209,489.9 1209,490.3 1208,490.3 1208,490.2 1207,490.2 1207,489.9 1206,489.9 1206,488.9 1205,488.9 1205,488.6 1204,488.6 1204,489.7 1203,489.7 1203,488.6 1202,488.6 1202,489.9 1201,489.9 1201,489.7 1200,489.7 1200,488.2 1199,488.2 1199,489.5 1198,489.5 1198,489.5 1197,489.5 1197,487.9 1196,487.9 1196,488.6 1195,488.6 1195,489.3 1194,489.3 1194,489.2 1193,489.2 1193,489.7 1192,489.7 1192,490.4 1191,490.4 1191,489.8 1190,489.8 1190,488.2 1189,488.2 1189,489.7 1188,489.7 1188,487.9 1187,487.9 1187,488.6 1186,488.6 1186,488.4 1185,488.4 1185,488.0 1184,488.0 1184,489.8 1183,489.8 1183,488.2 1182,488.2 1182,488.8 1181,488.8 1181,490.7 1180,490.7 1180,490.3 1179,490.3 1179,490.0 1178,490.0 1178,490.8 1177,490.8 1177,489.6 1176,489.6 1176,488.4 1175,488.4 1175,488.5 1174,488.5 1174,490.7 1173,490.7 1173,490.0 1172,490.0 1172,490.2 1171,490.2 1171,488.7 1170,488.7 1170,488.3 1169,488.3 1169,490.6 1168,490.6 1168,489.0 1167,489.0 1167,490.5 1166,490.5 1166,489.5 1165,489.5 1165,489.3 1164,489.3 1164,488.6 1163,488.6 1163,488.5 1162,488.5 1162,490.4 1161,490.4 1161,488.2 1160,488.2 1160,489.2 1159,489.2 1159,490.4 1158,490.4 1158,488.8 1157,488.8 1157,489.7 1156,489.7 1156,490.0 1155,490.0 1155,490.3 1154,490.3 1154,488.9 1153,488.9 1153,490.0 1152,490.0 1152,488.3 1151,488.3 1151,489.8 1150,489.8 1150,487.4 1149,487.4 1149,488.0 1148,488.0 1148,489.3 1147,489.3 1147,489.3 1146,489.3 1146,487.1 1145,487.1 1145,489.3 1144,489.3 1144,488.0 1143,488.0 1143,488.4 1142,488.4 1142,486.8 1141,486.8 1141,487.0 1140,487.0 1140,488.4 1139,488.4 1139,488.9 1138,488.9 1138,486.8 1137,486.8 1137,488.2 1136,488.2 1136,487.5 1135,487.5 1135,488.3 1134,488.3 1134,487.1 1133,487.1 1133,488.1 1132,488.1 1132,487.4 1131,487.4 1131,487.4 1130,487.4 1130,486.8 1129,486.8 1129,488.0 1128,488.0 1128,488.5 1127,488.5 1127,488.5 1126,488.5 1126,487.5 1125,487.5 1125,487.8 1124,487.8 1124,487.7 1123,487.7 1123,488.1 1122,488.1 1122,486.4 1121,486.4 1121,487.1 1120,487.1 1120,488.0 1119,488.0 1119,487.6 1118,487.6 1118,487.0 1117,487.0 1117,488.3 1116,488.3 1116,486.0 1115,486.0 1115,487.6 1114,487.6 1114,488.1 1113,488.1 1113,487.5 1112,487.5 1112,488.4 1111,488.4 1111,488.2 1110,488.2 1110,486.1 1109,486.1 1109,488.8 1108,488.8 1108,486.9 1107,486.9 1107,488.3 1106,488.3 1106,487.3 1105,487.3 1105,488.2 1104,488.2 1104,487.3 1103,487.3 1103,487.6 1102,487.6 1102,487.3 1101,487.3 1101,488.6 1100,488.6 1100,487.4 1099,487.4 1099,487.2 1098,487.2 1098,487.5 1097,487.5 1097,487.8 1096,487.8 1096,489.0 1095,489.0 1095,488.4 1094,488.4 1094,486.8 1093,486.8 1093,488.4 1092,488.4 1092,489.7 1091,489.7 1091,488.2 1090,488.2 1090,489.6 1089,489.6 1089,487.3 1088,487.3 1088,487.5 1087,487.5 1087,487.8 1086,487.8 1086,487.5 1085,487.5 1085,488.4 1084,488.4 1084,487.9 1083,487.9 1083,489.5 1082,489.5 1082,490.5 1081,490.5 1081,490.5 1080,490.5 1080,490.5 1079,490.5 1079,490.5 1078,490.5 1078,490.5 1077,490.5 1077,490.5 1076,490.5 1076,490.5 1075,490.5 1075,490.5 1074,490.5 1074,483.1 1073,483.1 1073,483.1 1072,483.1 1072,483.1 1071,483.1 1071,483.1 1070,483.1 1070,483.1 1069,483.1 1069,483.1 1068,483.1 1068,483.1 1067,483.1 1067,483.1 1066,483.1 1066,483.1 1065,483.1 1065,483.1 1064,483.1 1064,483.1 1063,483.1 1063,483.1 1062,483.1 1062,483.1 1061,483.1 1061,483.1 1060,483.1 1060,483.1 1059,483.1 1059,483.1 1058,483.1 1058,483.1 1057,483.1 1057,483.1 1056,483.1 1056,483.1 1055,483.1 1055,483.1 1054,483.1 1054,483.1 1053,483.1 1053,483.1 1052,483.1 1052,483.1 1051,483.1 1051,483.1 1050,483.1 1050,483.1 1049,483.1 1049,483.1 1048,483.1 1048,483.1 1047,483.1 1047,483.1 1046,483.1 1046,483.1 1045,483.1 1045,483.1 1044,483.1 1044,483.1 1043,483.1 1043,483.1 1042,483.1 1042,483.1 1041,483.1 1041,483.1 1040,483.1 1040,483.1 1039,483.1 1039,483.1 1038,483.1 1038,483.1 1037,483.1 1037,483.1 1036,483.1 1036,483.1 1035,483.1 1035,483.1 1034,483.1 1034,483.1 1033,483.1 1033,483.1 1032,483.1 1032,483.1 1031,483.1 1031,483.1 1030,483.1 1030,483.1 1029,483.1 1029,483.1 1028,483.1 1028,483.1 1027,483.1 1027,483.1 1026,483.1 1026,483.1 1025,483.1 1025,483.1 1024,483.1 1024,483.1 1023,483.1 1023,483.1 1022,483.1 1022,483.1 1021,483.1 1021,483.1 1020,483.1 1020,483.1 1019,483.1 1019,483.1 1018,483.1 1018,483.1 1017,483.1 1017,483.1 1016,483.1 1016,483.1 1015,483.1 1015,483.1 1014,483.1 1014,483.1 1013,483.1 1013,483.1 1012,483.1 1012,483.1 1011,483.1 1011,483.1 1010,483.1 1010,483.1 1009,483.1 1009,483.1 1008,483.1 1008,483.1 1007,483.1 1007,483.1 1006,483.1 1006,483.1 1005,483.1 1005,483.1 1004,483.1 1004,483.1 1003,483.1 1003,483.1 1002,483.1 1002,483.1 1001,483.1 1001,483.1 1000,483.1 1000,483.1 999,483.1 999,483.1 998,483.1 998,483.1 997,483.1 997,483.1 996,483.1 996,483.1 995,483.1 995,483.1 994,483.1 994,483.1 993,483.1 993,483.1 992,483.1 992,483.1 991,483.1 991,483.1 990,483.1 990,483.1 989,483.1 989,483.1 988,483.1 988,483.1 987,483.1 987,483.1 986,483.1 986,483.1 985,483.1 985,483.1 984,483.1 984,483.1 983,483.1 983,483.1 982,483.1 982,483.1 981,483.1 981,483.1 980,483.1 980,483.1 979,483.1 979,483.1 978,483.1 978,483.1 977,483.1 977,483.1 976,483.1 976,483.1 975,483.1 975,483.1 974,483.1 974,483.1 973,483.1 973,483.1 972,483.1 972,483.1 971,483.1 971,483.1 970,483.1 970,483.1 969,483.1 969,483.1 968,483.1 968,483.1 967,483.1 967,483.1 966,483.1 966,483.1 965,483.1 965,483.1 964,483.1 964,483.1 963,483.1 963,483.1 962,483.1 962,483.1 961,483.1 961,483.1 960,483.1 960,483.1 959,483.1 959,483.1 958,483.1 958,483.1 957,483.1 957,483.1 956,483.1 956,483.1 955,483.1 955,483.1 954,483.1 954,483.1 953,483.1 953,483.1 952,483.1 952,483.1 951,483.1 951,483.1 950,483.1 950,483.1 949,483.1 949,483.1 948,483.1 948,483.1 947,483.1 947,483.1 946,483.1 946,483.1 945,483.1 945,483.1 944,483.1 944,483.1 943,483.1 943,483.1 942,483.1 942,483.1 941,483.1 941,483.1 940,483.1 940,483.1 939,483.1 939,483.1 938,483.1 938,483.1 937,483.1 937,483.1 936,483.1 936,483.1 935,483.1 935,483.1 934,483.1 934,483.1 933,483.1 933,483.1 932,483.1 932,483.1 931,483.1 931,483.1 930,483.1 930,483.1 929,483.1 929,483.1 928,483.1 928,483.1 927,483.1 927,483.1 926,483.1 926,483.1 925,483.1 925,483.1 924,483.1 924,483.1 923,483.1 923,483.1 922,483.1 922,483.1 921,483.1 921,483.1 920,483.1 920,483.1 919,483.1 919,483.1 918,483.1 918,483.1 917,483.1 917,483.1 916,483.1 916,483.1 915,483.1 915,483.1 914,483.1 914,483.1 913,483.1 913,483.1 912,483.1 912,483.1 911,483.1 911,483.1 910,483.1 910,483.1 909,483.1 909,483.1 908,483.1 908,483.1 907,483.1 907,483.1 906,483.1 906,483.1 905,483.1 905,483.1 904,483.1 904,483.1 903,483.1 903,483.1 902,483.1 902,483.1 901,483.1 901,483.1 900,483.1 900,483.1 899,483.1 899,483.1 898,483.1 898,483.1 897,483.1 897,483.1 896,483.1 896,483.1 895,483.1 895,483.1 894,483.1 894,483.1 893,483.1 893,483.1 892,483.1 892,483.1 891,483.1 891,483.1 890,483.1 890,483.1 889,483.1 889,483.1 888,483.1 888,483.1 887,483.1 887,483.1 886,483.1 886,483.1 885,483.1 885,483.1 884,483.1 884,483.1 883,483.1 883,483.1 882,483.1 882,483.1 881,483.1 881,483.1 880,483.1 880,483.1 879,483.1 879,483.1 878,483.1 878,483.1 877,483.1 877,483.1 876,483.1 876,483.1 875,483.1 875,483.1 874,483.1 874,483.1 873,483.1 873,483.1 872,483.1 872,483.1 871,483.1 871,483.1 870,483.1 870,483.1 869,483.1 869,483.1 868,483.1 868,483.1 867,483.1 867,483.1 866,483.1 866,483.1 865,483.1 865,483.1 864,483.1 864,483.1 863,483.1 863,483.1 862,483.1 862,483.1 861,483.1 861,483.1 860,483.1 860,483.1 859,483.1 859,483.1 858,483.1 858,483.1 857,483.1 857,483.1 856,483.1 856,483.1 855,483.1 855,483.1 854,483.1 854,483.1 853,483.1 853,483.1 852,483.1 852,483.1 851,483.1 851,483.1 850,483.1 850,483.1 849,483.1 849,483.1 848,483.1 848,483.1 847,483.1 847,483.1 846,483.1 846,483.1 845,483.1 845,483.1 844,483.1 844,483.1 843,483.1 843,483.1 842,483.1 842,483.1 841,483.1 841,483.1 840,483.1 840,483.1 839,483.1 839,483.1 838,483.1 838,483.1 837,483.1 837,483.1 836,483.1 836,483.1 835,483.1 835,483.1 834,483.1 834,483.1 833,483.1 833,483.1 832,483.1 832,483.1 831,483.1 831,483.1 830,483.1 830,483.1 829,483.1 829,483.1 828,483.1 828,483.1 827,483.1 827,483.1 826,483.1 826,483.1 825,483.1 825,483.1 824,483.1 824,483.1 823,483.1 823,483.1 822,483.1 822,483.1 821,483.1 821,483.1 820,483.1 820,483.1 819,483.1 819,483.1 818,483.1 818,483.1 817,483.1 817,483.1 816,483.1 816,483.1 815,483.1 815,483.1 814,483.1 814,483.1 813,483.1 813,483.1 812,483.1 812,483.1 811,483.1 811,483.1 810,483.1 810,483.1 809,483.1 809,483.1 808,483.1 808,483.1 807,483.1 807,483.1 806,483.1 806,483.1 805,483.1 805,483.1 804,483.1 804,483.1 803,483.1 803,483.1 802,483.1 802,483.1 801,483.1 801,483.1 800,483.1 800,483.1 799,483.1 799,483.1 798,483.1 798,483.1 797,483.1 797,483.1 796,483.1 796,483.1 795,483.1 795,483.1 794,483.1 794,483.1 793,483.1 793,483.1 792,483.1 792,483.1 791,483.1 791,483.1 790,483.1 790,483.1 789,483.1 789,483.1 788,483.1 788,483.1 787,483.1 787,483.1 786,483.1 786,483.1 785,483.1 785,483.1 784,483.1 784,483.1 783,483.1 783,483.1 782,483.1 782,483.1 781,483.1 781,483.1 780,483.1 780,483.1 779,483.1 779,483.1 778,483.1 778,483.1 777,483.1 777,483.1 776,483.1 776,483.1 775,483.1 775,483.1 774,483.1 774,483.1 773,483.1 773,483.1 772,483.1 772,483.1 771,483.1 771,483.1 770,483.1 770,483.1 769,483.1 769,483.1 768,483.1 768,483.1 767,483.1 767,483.1 766,483.1 766,483.1 765,483.1 765,483.1 764,483.1 764,483.1 763,483.1 763,483.1 762,483.1 762,483.1 761,483.1 761,483.1 760,483.1 760,483.1 759,483.1 759,483.1 758,483.1 758,483.1 757,483.1 757,483.1 756,483.1 756,483.1 755,483.1 755,483.1 754,483.1 754,483.1 753,483.1 753,483.1 752,483.1 752,483.1 751,483.1 751,483.1 750,483.1 750,483.1 749,483.1 749,483.1 748,483.1 748,483.1 747,483.1 747,483.1 746,483.1 746,483.1 745,483.1 745,483.1 744,483.1 744,483.1 743,483.1 743,483.1 742,483.1 742,483.1 741,483.1 741,483.1 740,483.1 740,483.1 739,483.1 739,483.1 738,483.1 738,483.1 737,483.1 737,483.1 736,483.1 736,483.1 735,483.1 735,483.1 734,483.1 734,483.1 733,483.1 733,483.1 732,483.1 732,483.1 731,483.1 731,483.1 730,483.1 730,483.1 729,483.1 729,483.1 728,483.1 728,483.1 727,483.1 727,483.1 726,483.1 726,483.1 725,483.1 725,483.1 724,483.1 724,483.1 723,483.1 723,483.1 722,483.1 722,483.1 721,483.1 721,483.1 720,483.1 720,483.1 719,483.1 719,483.1 718,483.1 718,483.1 717,483.1 717,483.1 716,483.1 716,483.1 715,483.1 715,483.1 714,483.1 714,483.1 713,483.1 713,483.1 712,483.1 712,483.1 711,483.1 711,483.1 710,483.1 710,483.1 709,483.1 709,483.1 708,483.1 708,483.1 707,483.1 707,483.1 706,483.1 706,483.1 705,483.1 705,483.1 704,483.1 704,483.1 703,483.1 703,483.1 702,483.1 702,483.1 701,483.1 701,483.1 700,483.1 700,483.1 699,483.1 699,483.1 698,483.1 698,483.1 697,483.1 697,483.1 696,483.1 696,483.1 695,483.1 695,483.1 694,483.1 694,483.1 693,483.1 693,483.1 692,483.1 692,483.1 691,483.1 691,483.1 690,483.1 690,483.1 689,483.1 689,483.1 688,483.1 688,483.1 687,483.1 687,483.1 686,483.1 686,483.1 685,483.1 685,483.1 684,483.1 684,483.1 683,483.1 683,483.1 682,483.1 682,483.1 681,483.1 681,483.1 680,483.1 680,483.1 679,483.1 679,483.1 678,483.1 678,483.1 677,483.1 677,483.1 676,483.1 676,483.1 675,483.1 675,483.1 674,483.1 674,483.1 673,483.1 673,483.1 672,483.1 672,483.1 671,483.1 671,483.1 670,483.1 670,483.1 669,483.1 669,483.1 668,483.1 668,483.1 667,483.1 667,483.1 666,483.1 666,483.1 665,483.1 665,483.1 664,483.1 664,483.1 663,483.1 663,483.1 662,483.1 662,483.1 661,483.1 661,483.1 660,483.1 660,483.1 659,483.1 659,483.1 658,483.1 658,483.1 657,483.1 657,483.1 656,483.1 656,483.1 655,483.1 655,483.1 654,483.1 654,483.1 653,483.1 653,483.1 652,483.1 652,483.1 651,483.1 651,483.1 650,483.1 650,483.1 649,483.1 649,483.1 648,483.1 648,483.1 647,483.1 647,483.1 646,483.1 646,483.1 645,483.1 645,483.1 644,483.1 644,483.1 643,483.1 643,483.1 642,483.1 642,483.1 641,483.1 641,483.1 640,483.1 640,483.1 639,483.1 639,483.1 638,483.1 638,483.1 637,483.1 637,483.1 636,483.1 636,483.1 635,483.1 635,483.1 634,483.1 634,483.1 633,483.1 633,483.1 632,483.1 632,483.1 631,483.1 631,483.1 630,483.1 630,483.1 629,483.1 629,483.1 628,483.1 628,483.1 627,483.1 627,483.1 626,483.1 626,483.1 625,483.1 625,483.1 624,483.1 624,483.1 623,483.1 623,483.1 622,483.1 622,483.1 621,483.1 621,483.1 620,483.1 620,483.1 619,483.1 619,483.1 618,483.1 618,483.1 617,483.1 617,483.1 616,483.1 616,483.1 615,483.1 615,483.1 614,483.1 614,483.1 613,483.1 613,483.1 612,483.1 612,483.1 611,483.1 611,483.1 610,483.1 610,483.1 609,483.1 609,483.1 608,483.1 608,483.1 607,483.1 607,483.1 606,483.1 606,483.1 605,483.1 605,483.1 604,483.1 604,483.1 603,483.1 603,483.1 602,483.1 602,483.1 601,483.1 601,483.1 600,483.1 600,483.1 599,483.1 599,483.1 598,483.1 598,483.1 597,483.1 597,483.1 596,483.1 596,483.1 595,483.1 595,483.1 594,483.1 594,483.1 593,483.1 593,483.1 592,483.1 592,483.1 591,483.1 591,483.1 590,483.1 590,483.1 589,483.1 589,483.1 588,483.1 588,483.1 587,483.1 587,483.1 586,483.1 586,483.1 585,483.1 585,483.1 584,483.1 584,483.1 583,483.1 583,483.1 582,483.1 582,483.1 581,483.1 581,483.1 580,483.1 580,483.1 579,483.1 579,483.1 578,483.1 578,483.1 577,483.1 577,483.1 576,483.1 576,483.1 575,483.1 575,483.1 574,483.1 574,483.1 573,483.1 573,483.1 572,483.1 572,483.1 571,483.1 571,483.1 570,483.1 570,483.1 569,483.1 569,483.1 568,483.1 568,483.1 567,483.1 567,483.1 566,483.1 566,483.1 565,483.1 565,483.1 564,483.1 564,483.1 563,483.1 563,483.1 562,483.1 562,483.1 561,483.1 561,483.1 560,483.1 560,483.1 559,483.1 559,483.1 558,483.1 558,483.1 557,483.1 557,483.1 556,483.1 556,483.1 555,483.1 555,483.1 554,483.1 554,483.1 553,483.1 553,483.1 552,483.1 552,483.1 551,483.1 551,483.1 550,483.1 550,483.1 549,483.1 549,483.1 548,483.1 548,483.1 547,483.1 547,483.1 546,483.1 546,483.1 545,483.1 545,483.1 544,483.1 544,483.1 543,483.1 543,483.1 542,483.1 542,483.1 541,483.1 541,483.1 540,483.1 540,483.1 539,483.1 539,483.1 538,483.1 538,483.1 537,483.1 537,483.1 536,483.1 536,483.1 535,483.1 535,483.1 534,483.1 534,483.1 533,483.1 533,483.1 532,483.1 532,483.1 531,483.1 531,483.1 530,483.1 530,483.1 529,483.1 529,483.1 528,483.1 528,483.1 527,483.1 527,483.1 526,483.1 526,483.1 525,483.1 525,483.1 524,483.1 524,483.1 523,483.1 523,483.1 522,483.1 522,483.1 521,483.1 521,483.1 520,483.1 520,483.1 519,483.1 519,483.1 518,483.1 518,483.1 517,483.1 517,483.1 516,483.1 516,483.1 515,483.1 515,483.1 514,483.1 514,483.1 513,483.1 513,483.1 512,483.1 512,483.1 511,483.1 511,483.1 510,483.1 510,483.1 509,483.1 509,483.1 508,483.1 508,483.1 507,483.1 507,483.1 506,483.1 506,483.1 505,483.1 505,483.1 504,483.1 504,483.1 503,483.1 503,483.1 502,483.1 502,483.1 501,483.1 501,483.1 500,483.1 500,483.1 499,483.1 499,483.1 498,483.1 498,483.1 497,483.1 497,483.1 496,483.1 496,483.1 495,483.1 495,483.1 494,483.1 494,483.1 493,483.1 493,483.1 492,483.1 492,483.1 491,483.1 491,483.1 490,483.1 490,483.1 489,483.1 489,483.1 488,483.1 488,483.1 487,483.1 487,483.1 486,483.1 486,483.1 485,483.1 485,483.1 484,483.1 484,483.1 483,483.1 483,483.1 482,483.1 482,483.1 481,483.1 481,483.1 480,483.1 480,483.1 479,483.1 479,483.1 478,483.1 478,483.1 477,483.1 477,483.1 476,483.1 476,483.1 475,483.1 475,483.1 474,483.1 474,483.1 473,483.1 473,483.1 472,483.1 472,483.1 471,483.1 471,483.1 470,483.1 470,483.1 469,483.1 469,483.1 468,483.1 468,483.1 467,483.1 467,483.1 466,483.1 466,483.1 465,483.1 465,483.1 464,483.1 464,483.1 463,483.1 463,483.1 462,483.1 462,483.1 461,483.1 461,483.1 460,483.1 460,483.1 459,483.1 459,483.1 458,483.1 458,483.1 457,483.1 457,483.1 456,483.1 456,483.1 455,483.1 455,483.1 454,483.1 454,483.1 453,483.1 453,483.1 452,483.1 452,483.1 451,483.1 451,483.1 450,483.1 450,483.1 449,483.1 449,483.1 448,483.1 448,483.1 447,483.1 447,483.1 446,483.1 446,483.1 445,483.1 445,483.1 444,483.1 444,483.1 443,483.1 443,483.1 442,483.1 442,483.1 441,483.1 441,483.1 440,483.1 440,483.1 439,483.1 439,483.1 438,483.1 438,483.1 437,483.1 437,483.1 436,483.1 436,483.1 435,483.1 435,483.1 434,483.1 434,483.1 433,483.1 433,483.1 432,483.1 432,483.1 431,483.1 431,483.1 430,483.1 430,483.1 429,483.1 429,483.1 428,483.1 428,483.1 427,483.1 427,483.1 426,483.1 426,483.1 425,483.1 425,483.1 424,483.1 424,483.1 423,483.1 423,483.1 422,483.1 422,483.1 421,483.1 421,483.1 420,483.1 420,483.1 419,483.1 419,483.1 418,483.1 418,483.1 417,483.1 417,483.1 416,483.1 416,483.1 415,483.1 415,483.1 414,483.1 414,483.1 413,483.1 413,483.1 412,483.1 412,483.1 411,483.1 411,483.1 410,483.1 410,483.1 409,483.1 409,483.1 408,483.1 408,483.1 407,483.1 407,483.1 406,483.1 406,483.1 405,483.1 405,483.1 404,483.1 404,483.1 403,483.1 403,483.1 402,483.1 402,483.1 401,483.1 401,483.1 400,483.1 400,483.1 399,483.1 399,483.1 398,483.1 398,483.1 397,483.1 397,483.1 396,483.1 396,483.1 395,483.1 395,483.1 394,483.1 394,483.1 393,483.1 393,483.1 392,483.1 392,483.1 391,483.1 391,483.1 390,483.1 390,483.1 389,483.1 389,483.1 388,483.1 388,483.1 387,483.1 387,483.1 386,483.1 386,483.1 385,483.1 385,483.1 384,483.1 384,483.1 383,483.1 383,483.1 382,483.1 382,483.1 381,483.1 381,483.1 380,483.1 380,483.1 379,483.1 379,483.1 378,483.1 378,483.1 377,483.1 377,483.1 376,483.1 376,483.1 375,483.1 375,483.1 374,483.1 374,483.1 373,483.1 373,483.1 372,483.1 372,483.1 371,483.1 371,483.1 370,483.1 370,483.1 369,483.1 369,483.1 368,483.1 368,483.1 367,483.1 367,483.1 366,483.1 366,483.1 365,483.1 365,483.1 364,483.1 364,483.1 363,483.1 363,483.1 362,483.1 362,483.1 361,483.1 361,483.1 360,483.1 360,483.1 359,483.1 359,483.1 358,483.1 358,483.1 357,483.1 357,483.1 356,483.1 356,483.1 355,483.1 355,483.1 354,483.1 354,483.1 353,483.1 353,483.1 352,483.1 352,483.1 351,483.1 351,483.1 350,483.1 350,483.1 349,483.1 349,483.1 348,483.1 348,483.1 347,483.1 347,483.1 346,483.1 346,483.1 345,483.1 345,483.1 344,483.1 344,483.1 343,483.1 343,483.1 342,483.1 342,483.1 341,483.1 341,483.1 340,483.1 340,483.1 339,483.1 339,483.1 338,483.1 338,483.1 337,483.1 337,483.1 336,483.1 336,483.1 335,483.1 335,483.1 334,483.1 334,483.1 333,483.1 333,483.1 332,483.1 332,483.1 331,483.1 331,483.1 330,483.1 330,483.1 329,483.1 329,483.1 328,483.1 328,483.1 327,483.1 327,483.1 326,483.1 326,483.1 325,483.1 325,483.1 324,483.1 324,483.1 323,483.1 323,483.1 322,483.1 322,483.1 321,483.1 321,483.1 320,483.1 320,483.1 319,483.1 319,483.1 318,483.1 318,483.1 317,483.1 317,483.1 316,483.1 316,483.1 315,483.1 315,483.1 314,483.1 314,483.1 313,483.1 313,483.1 312,483.1 312,483.1 311,483.1 311,483.1 310,483.1 310,483.1 309,483.1"/></svg>
<div class="a" style="left:1891px;top:358px;width:20px;height:663px;background:#5a4738"></div>
<div class="a" style="left:1891px;top:358px;width:19px;height:538px;background:linear-gradient(#a97656,#a87555 48%,#9c6039 50%,#9a5b31);border-radius:4px"></div>
<div class="a" style="left:1910px;top:153px;width:9px;height:876px;background:#5f4a3b"></div>
<div class="a" style="left:500px;top:226px;width:10px;height:795px;background:linear-gradient(90deg,rgba(140,80,35,0),rgba(140,80,35,.45) 20%,rgba(200,120,50,.85) 35%,#f2cc70 40%,#f2cc70 60%,rgba(200,120,50,.85) 65%,rgba(140,80,35,.45) 80%,rgba(140,80,35,0))"></div>
<div class="a" style="left:100px;top:153px;width:1px;height:868px;background:#6a5545"></div>
<div class="a" style="left:1px;top:1029px;width:1918px;height:49px;background:linear-gradient(90deg,#47372c 0%,#42332a 25%,#46362b 55%,#4a392e 100%);border-radius:0 0 5px 5px"></div>
<div class="a" style="left:3px;top:1021px;width:1916px;height:8px;background:#3f3027"></div>
<div class="a" style="left:3px;top:1021px;width:97px;height:2px;background:#4f3d30"></div>
<div class="a" style="left:3px;top:1022px;width:73px;height:2px;background:#1a1411"></div>
<div class="a" style="left:1px;top:1029px;width:1918px;height:1px;background:#6e5646"></div>
<div class="a" style="left:12px;top:1034px;width:64px;height:39px;background:linear-gradient(#68503f,#5a4434 45%,#4b3729);border-radius:5px;box-shadow:inset 0 0 0 1px #3f4040, 1px 1px 0 #2a201b"></div>
<div class="a" style="left:85px;top:1034px;width:64px;height:39px;background:linear-gradient(#68503f,#5a4434 45%,#4b3729);border-radius:5px;box-shadow:inset 0 0 0 1px #3f4040, 1px 1px 0 #2a201b"></div>
<svg class="a" style="left:32px;top:1044px" width="25" height="22" viewBox="0 0 25 22"><path d="M1 1L24 10.5L1 21Z" fill="#f4f2f0"/></svg>
<div class="a" style="left:107px;top:1044px;width:20px;height:20px;background:linear-gradient(#f8f8f8,#e0dedc);border-radius:3px"></div>
<div class="a" style="left:159px;top:1036px;width:62px;height:38px;background:#241d19;border-radius:2px"></div>
<div class="a" style="left:179px;top:1044px;width:21px;height:21px;background:radial-gradient(circle at 40% 35%,#dedad6,#a89e96);border-radius:50%"></div>
<div class="t" style="left:269.50px;top:1049.37px;font-size:11px;letter-spacing:0.352px;color:#e4dcd6;font-weight:bold;">0:10:000</div>
<div class="a" style="left:365px;top:1036px;width:53px;height:37px;background:#241d19;border-radius:2px"></div>
<div class="t" style="left:369.00px;top:1046.58px;font-size:17px;letter-spacing:-0.801px;color:#c9bdb3;">Punch</div>
<div class="a" style="left:543px;top:1034px;width:81px;height:39px;background:#4b3a2e;border-radius:4px;box-shadow:inset 0 0 0 1px #5e4a3c"></div>
<div class="t" style="left:549.00px;top:1050.34px;font-size:10px;letter-spacing:-0.389px;color:#e8e0da;">New Take</div>
<svg class="a" style="left:601px;top:1048px" width="16" height="14" viewBox="0 0 16 14" fill="none" stroke="#e8e0da" stroke-width="1.6"><path d="M1 1L8 12L15 1"/></svg>
<div class="a" style="left:633px;top:1036px;width:63px;height:37px;background:#221b17;border-radius:2px"></div>
<div class="t" style="left:645.00px;top:1046.58px;font-size:17px;letter-spacing:0.292px;color:#c0b4aa;">Click</div>
<div class="a" style="left:703px;top:1040px;width:1px;height:28px;background:#5f4b3c"></div>
<div class="a" style="left:709px;top:1034px;width:76px;height:39px;background:#3e3027"></div>
<div class="t" style="left:722.50px;top:1048.44px;font-size:13px;letter-spacing:-0.579px;color:#6e5e52;">120 BPM</div>
<div class="t" style="left:802.00px;top:1049.37px;font-size:11px;letter-spacing:-0.118px;color:#f0ebe6;font-weight:bold;">4</div>
<div class="a" style="left:821px;top:1034px;width:25px;height:18px;background:linear-gradient(#4a4846,#2e2c2a);border-radius:5px"></div>
<div class="a" style="left:821px;top:1054px;width:25px;height:19px;background:linear-gradient(#4a4846,#2e2c2a);border-radius:5px"></div>
<div class="t" style="left:830.50px;top:1039.34px;font-size:10px;letter-spacing:0.160px;color:#d8d2cc;">+</div>
<div class="t" style="left:831.50px;top:1058.84px;font-size:10px;letter-spacing:0.670px;color:#d8d2cc;">-</div>
<div class="a" style="left:855px;top:1034px;width:41px;height:39px;border:1px dashed #5e4a3c;border-radius:4px"></div>
<div class="t" style="left:861.00px;top:1051.81px;font-size:9px;letter-spacing:0.006px;color:#c9bdb3;">--</div>
<svg class="a" style="left:873px;top:1048px" width="16" height="14" viewBox="0 0 16 14" fill="none" stroke="#e8e0da" stroke-width="1.6"><path d="M1 1L8 12L15 1"/></svg>
<div class="a" style="left:902px;top:1041px;width:1px;height:27px;background:#5f4b3c"></div>
<div class="a" style="left:909px;top:1035px;width:115px;height:38px;background:linear-gradient(#68503f,#5a4434 45%,#4b3729);border-radius:5px;box-shadow:inset 0 0 0 1px #3f4040, 1px 1px 0 #2a201b"></div>
<div class="t" style="left:912.25px;top:1048.04px;font-size:16px;letter-spacing:-0.683px;color:#f0ebe6;">Sample Browser</div>
<div class="a" style="left:1026px;top:1035px;width:75px;height:38px;background:linear-gradient(#68503f,#5a4434 45%,#4b3729);border-radius:5px;box-shadow:inset 0 0 0 1px #3f4040, 1px 1px 0 #2a201b"></div>
<div class="t" style="left:1032.50px;top:1048.04px;font-size:16px;letter-spacing:1.143px;color:#f0ebe6;">Options</div>
<div class="a" style="left:1111px;top:1035px;width:85px;height:38px;background:linear-gradient(#68503f,#5a4434 45%,#4b3729);border-radius:5px;box-shadow:inset 0 0 0 1px #3f4040, 1px 1px 0 #2a201b"></div>
<div class="t" style="left:1114.50px;top:1048.04px;font-size:16px;letter-spacing:-0.325px;color:#f0ebe6;">Crossfades</div>
<div class="a" style="left:1198px;top:1035px;width:74px;height:38px;background:linear-gradient(#68503f,#5a4434 45%,#4b3729);border-radius:5px;box-shadow:inset 0 0 0 1px #3f4040, 1px 1px 0 #2a201b"></div>
<div class="t" style="left:1207.80px;top:1048.04px;font-size:16px;letter-spacing:0.964px;color:#f0ebe6;">Effects</div>
<div class="a" style="left:1275px;top:1035px;width:85px;height:38px;background:linear-gradient(#68503f,#5a4434 45%,#4b3729);border-radius:5px;box-shadow:inset 0 0 0 1px #3f4040, 1px 1px 0 #2a201b"></div>
<div class="t" style="left:1278.25px;top:1048.04px;font-size:16px;letter-spacing:0.025px;color:#f0ebe6;">Modulation</div>
<div class="a" style="left:1370px;top:1035px;width:75px;height:38px;background:linear-gradient(#68503f,#5a4434 45%,#4b3729);border-radius:5px;box-shadow:inset 0 0 0 1px #3f4040, 1px 1px 0 #2a201b"></div>
<div class="t" style="left:1385.15px;top:1048.04px;font-size:16px;letter-spacing:1.398px;color:#f0ebe6;">Mixer</div>
<div class="a" style="left:1447px;top:1035px;width:95px;height:38px;background:linear-gradient(#68503f,#5a4434 45%,#4b3729);border-radius:5px;box-shadow:inset 0 0 0 1px #3f4040, 1px 1px 0 #2a201b"></div>
<div class="t" style="left:1450.40px;top:1048.04px;font-size:16px;letter-spacing:0.461px;color:#f0ebe6;">Instruments</div>
<div class="a" style="left:1544px;top:1035px;width:95px;height:38px;background:linear-gradient(#68503f,#5a4434 45%,#4b3729);border-radius:5px;box-shadow:inset 0 0 0 1px #3f4040, 1px 1px 0 #2a201b"></div>
<div class="t" style="left:1547.20px;top:1048.04px;font-size:16px;letter-spacing:-0.212px;color:#f0ebe6;">Sample Pool</div>
<div class="a" style="left:1641px;top:1035px;width:75px;height:38px;background:linear-gradient(#68503f,#5a4434 45%,#4b3729);border-radius:5px;box-shadow:inset 0 0 0 1px #3f4040, 1px 1px 0 #2a201b"></div>
<div class="t" style="left:1653.50px;top:1048.04px;font-size:16px;letter-spacing:0.930px;color:#f0ebe6;">Player</div>
<div class="a" style="left:1718px;top:1035px;width:55px;height:38px;background:linear-gradient(#68503f,#5a4434 45%,#4b3729);border-radius:5px;box-shadow:inset 0 0 0 1px #3f4040, 1px 1px 0 #2a201b"></div>
<div class="t" style="left:1729.25px;top:1048.04px;font-size:16px;letter-spacing:0.691px;color:#f0ebe6;">VST</div>
<div class="a" style="left:1781px;top:1041px;width:1px;height:27px;background:#5f4b3c"></div>
<div class="t" style="left:1843.00px;top:1049.84px;font-size:10px;letter-spacing:0.553px;color:#8c7c70;">CPU: 15.8%</div>
<svg class="a" style="left:1900px;top:1060px" width="18" height="18" viewBox="0 0 18 18" stroke="#8a7a6e" stroke-width="1.2"><path d="M17 5L5 17M17 9L9 17M17 13L13 17"/></svg>
</body></html>
